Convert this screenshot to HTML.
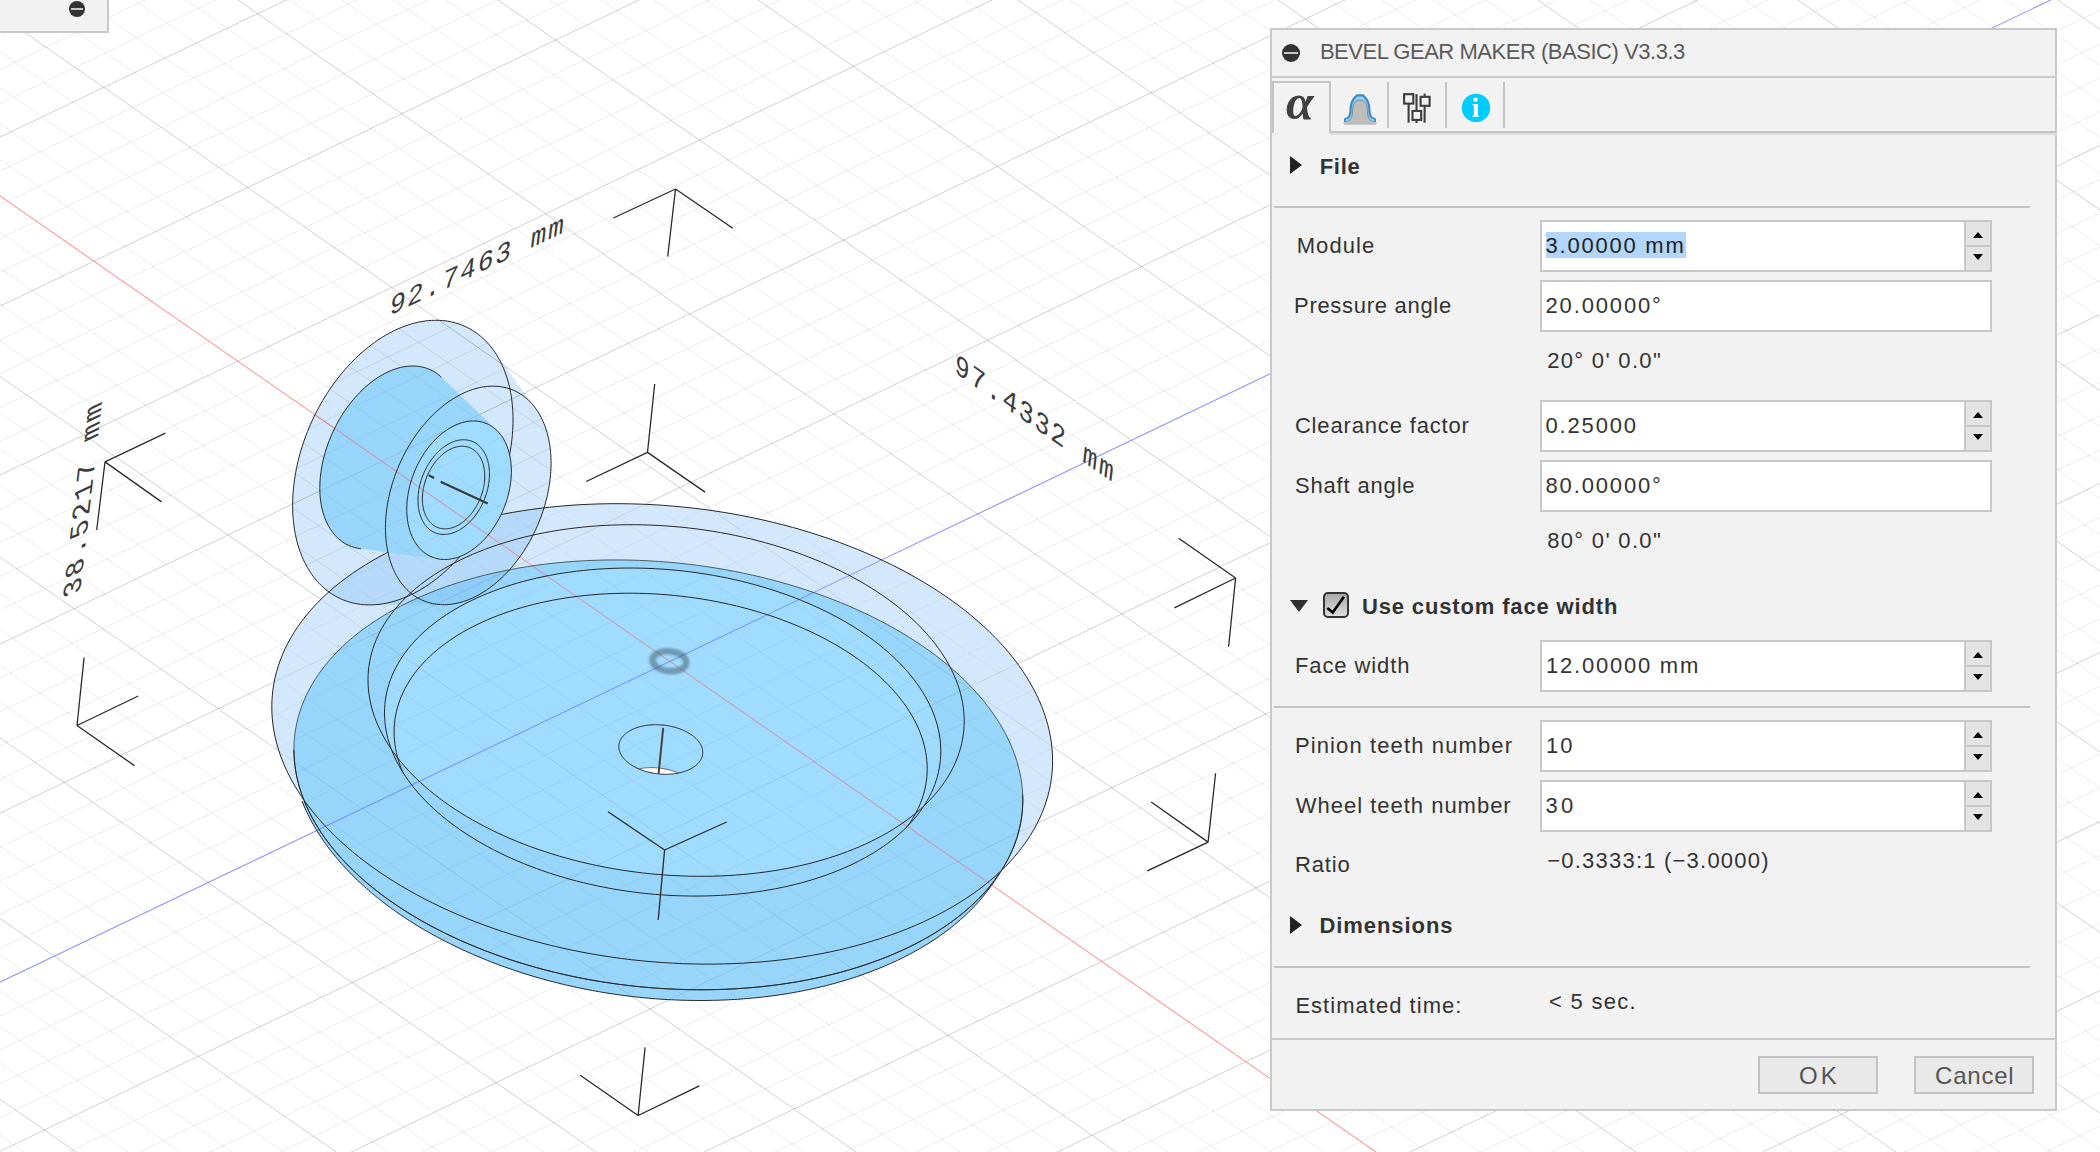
<!DOCTYPE html>
<html><head><meta charset="utf-8">
<style>
*{margin:0;padding:0;box-sizing:border-box}
html,body{width:2100px;height:1152px;overflow:hidden;background:#fff;font-family:"Liberation Sans",sans-serif;color:#333}
#vp{position:absolute;left:0;top:0;width:2100px;height:1152px}
#vp svg{position:absolute;left:0;top:0}
.a{position:absolute;white-space:nowrap}
#tl{position:absolute;left:-4px;top:-4px;width:113px;height:37px;background:#f2f2f2;border:2px solid #c9c9c9}
.mc{position:absolute;border-radius:50%;background:#333}
.mc:after{content:"";position:absolute;left:13%;right:13%;top:42%;height:15%;background:#c8c8c8}
#dlg{position:absolute;left:1270px;top:28px;width:787px;height:1083px;background:#f2f2f2;border:2px solid #c9c9c9}
.lbl{position:absolute;white-space:nowrap;line-height:1}
.bold{font-weight:bold}
.inp{position:absolute;left:1540px;width:452px;height:52px;background:#fff;border:2px solid #c8c8c8}
.spin{position:absolute;left:422px;top:0;width:26px;height:48px;background:#e4e4e4;border-left:2px solid #c8c8c8}
.spin:before{content:"";position:absolute;left:7px;top:10px;border-left:5px solid transparent;border-right:5px solid transparent;border-bottom:6px solid #000}
.spin:after{content:"";position:absolute;left:7px;top:32px;border-left:5px solid transparent;border-right:5px solid transparent;border-top:6px solid #000}
.spin i{position:absolute;left:0;right:0;top:23px;height:2px;background:#c8c8c8}
.sep{position:absolute;left:1274px;width:756px;height:2px;background:#c4c4c4}
.tri-r{position:absolute;width:0;height:0;border-top:9px solid transparent;border-bottom:9px solid transparent;border-left:12px solid #222}
.btn{position:absolute;top:1056px;width:120px;height:38px;background:#e9e9e9;border:2px solid #c2c2c2}

</style></head>
<body>
<div id="vp"><svg width="2100" height="1152" viewBox="0 0 2100 1152">
<defs>
<mask id="mE1"><rect width="2100" height="1152" fill="#fff"/><path d="M999.22 873.30 L998.18 875.07 L997.12 876.84 L996.02 878.60 L994.90 880.35 L993.76 882.09 L992.58 883.83 L991.39 885.56 L990.16 887.27 L988.92 888.98 L987.64 890.68 L986.34 892.38 L985.02 894.06 L983.67 895.73 L982.29 897.40 L980.90 899.05 L979.47 900.70 L978.02 902.33 L976.55 903.96 L975.05 905.57 L973.53 907.18 L971.98 908.78 L970.41 910.36 L968.81 911.94 L967.20 913.50 L965.55 915.05 L963.89 916.60 L962.20 918.13 L960.48 919.65 L958.75 921.16 L956.99 922.66 L955.21 924.15 L953.40 925.62 L951.57 927.09 L949.72 928.54 L947.85 929.98 L945.95 931.41 L944.03 932.82 L942.09 934.23 L940.13 935.62 L938.15 937.00 L936.14 938.37 L934.12 939.72 L932.07 941.07 L930.00 942.40 L927.91 943.71 L925.80 945.02 L923.67 946.31 L921.52 947.59 L919.35 948.85 L917.15 950.10 L914.94 951.34 L912.71 952.56 L910.46 953.77 L908.19 954.97 L905.90 956.15 L903.59 957.32 L901.26 958.48 L898.91 959.62 L896.55 960.75 L894.16 961.86 L891.76 962.96 L889.34 964.04 L886.90 965.11 L884.45 966.16 L881.97 967.20 L879.48 968.23 L876.98 969.24 L874.45 970.24 L871.91 971.22 L869.35 972.18 L866.78 973.13 L864.19 974.07 L861.58 974.99 L858.96 975.89 L856.32 976.78 L853.67 977.66 L851.00 978.51 L848.32 979.36 L845.62 980.18 L842.91 980.99 L840.18 981.79 L837.44 982.57 L834.69 983.33 L831.92 984.08 L829.14 984.81 L826.34 985.53 L823.53 986.23 L820.71 986.91 L817.88 987.58 L815.03 988.23 L812.18 988.86 L809.31 989.48 L806.42 990.08 L803.53 990.67 L800.63 991.23 L797.71 991.79 L794.78 992.32 L791.85 992.84 L788.90 993.34 L785.94 993.83 L782.97 994.29 L779.99 994.75 L777.01 995.18 L774.01 995.60 L771.00 996.00 L767.99 996.38 L764.97 996.75 L761.94 997.10 L758.90 997.43 L755.85 997.75 L752.79 998.05 L749.73 998.33 L746.66 998.59 L743.58 998.84 L740.50 999.07 L737.41 999.29 L734.31 999.48 L731.21 999.66 L728.10 999.82 L724.99 999.97 L721.87 1000.09 L718.75 1000.20 L715.62 1000.30 L712.48 1000.37 L709.34 1000.43 L706.20 1000.47 L703.06 1000.49 L699.91 1000.50 L696.75 1000.49 L693.60 1000.46 L690.44 1000.41 L687.27 1000.35 L684.11 1000.27 L680.94 1000.17 L677.77 1000.06 L674.60 999.93 L671.43 999.78 L668.26 999.61 L665.08 999.43 L661.91 999.23 L658.73 999.01 L655.56 998.77 L652.38 998.52 L649.21 998.25 L646.03 997.97 L642.86 997.66 L639.68 997.34 L636.51 997.00 L633.34 996.65 L630.17 996.28 L627.00 995.89 L623.84 995.48 L620.67 995.06 L617.51 994.62 L614.35 994.16 L611.20 993.69 L608.05 993.20 L604.90 992.69 L601.76 992.17 L598.62 991.63 L595.48 991.07 L592.35 990.50 L589.22 989.91 L586.10 989.31 L582.99 988.68 L579.87 988.04 L576.77 987.39 L573.67 986.72 L570.58 986.03 L567.49 985.33 L564.41 984.61 L561.34 983.87 L558.27 983.12 L555.21 982.35 L552.16 981.56 L549.12 980.77 L546.09 979.95 L543.06 979.12 L540.04 978.27 L537.03 977.41 L534.03 976.53 L531.04 975.64 L528.06 974.73 L525.09 973.80 L522.12 972.86 L519.17 971.91 L516.23 970.94 L513.30 969.95 L510.38 968.95 L507.47 967.94 L504.57 966.91 L501.68 965.87 L498.81 964.81 L495.95 963.73 L493.10 962.65 L490.26 961.54 L487.43 960.43 L484.62 959.30 L481.82 958.15 L479.03 956.99 L476.26 955.82 L473.50 954.63 L470.75 953.43 L468.02 952.22 L465.30 950.99 L462.59 949.75 L459.91 948.49 L457.23 947.22 L454.57 945.94 L451.93 944.65 L449.30 943.34 L446.69 942.02 L444.09 940.69 L441.51 939.34 L438.94 937.98 L436.40 936.61 L433.86 935.23 L431.35 933.83 L428.85 932.42 L426.37 931.00 L423.91 929.57 L421.46 928.13 L419.03 926.67 L416.62 925.20 L414.23 923.72 L411.86 922.23 L409.50 920.73 L407.17 919.22 L404.85 917.69 L402.55 916.16 L400.27 914.61 L398.01 913.06 L395.77 911.49 L393.55 909.91 L391.35 908.32 L389.17 906.72 L387.01 905.12 L384.87 903.50 L382.75 901.87 L380.65 900.23 L378.58 898.58 L376.52 896.92 L374.49 895.26 L372.47 893.58 L370.48 891.90 L368.51 890.20 L366.56 888.50 L364.63 886.79 L362.73 885.07 L360.84 883.34 L358.98 881.60 L357.15 879.85 L355.33 878.10 L353.54 876.34 L351.77 874.57 L350.02 872.79 L348.30 871.01 L346.60 869.21 L344.92 867.41 L343.27 865.61 L341.64 863.79 L340.04 861.97 L338.46 860.15 L336.90 858.31 L335.37 856.47 L333.86 854.63 L332.37 852.77 L330.92 850.91 L329.48 849.05 L328.07 847.18 L326.69 845.30 L325.33 843.42 L323.99 841.53 L322.68 839.64 L321.40 837.74 L320.14 835.84 L318.90 833.94 L317.70 832.02 L316.51 830.11 L315.36 828.19 L314.23 826.26 L313.12 824.34 L312.04 822.40 L310.99 820.47 L309.96 818.53 L308.96 816.59 L307.99 814.64 L307.04 812.69 L306.12 810.74 L305.23 808.78 L304.36 806.83 L303.52 804.87 L302.70 802.90 L301.92 800.94Z" fill="#000"/><path d="M1022.80 800.00 L1022.68 805.57 L1022.30 811.13 L1021.68 816.66 L1020.80 822.17 L1019.68 827.64 L1018.31 833.07 L1016.70 838.47 L1014.84 843.82 L1012.73 849.13 L1010.38 854.38 L1007.79 859.58 L1004.96 864.72 L1001.90 869.80 L998.59 874.81 L995.06 879.76 L991.29 884.63 L987.30 889.43 L983.08 894.15 L978.63 898.79 L973.97 903.35 L969.09 907.81 L964.00 912.19 L958.70 916.47 L953.20 920.65 L947.49 924.73 L941.58 928.71 L935.48 932.59 L929.19 936.36 L922.71 940.01 L916.06 943.55 L909.22 946.98 L902.21 950.29 L895.04 953.48 L887.71 956.55 L880.21 959.49 L872.57 962.31 L864.78 964.99 L856.84 967.55 L848.77 969.98 L840.58 972.27 L832.25 974.42 L823.81 976.44 L815.25 978.32 L806.59 980.06 L797.82 981.67 L788.96 983.12 L780.01 984.44 L770.97 985.61 L761.86 986.64 L752.68 987.52 L743.43 988.26 L734.12 988.85 L724.77 989.30 L715.36 989.60 L705.92 989.75 L696.45 989.75 L686.94 989.60 L677.42 989.31 L667.89 988.87 L658.35 988.29 L648.81 987.56 L639.28 986.68 L629.76 985.66 L620.25 984.49 L610.78 983.18 L601.34 981.73 L591.93 980.13 L582.58 978.40 L573.27 976.52 L564.02 974.51 L554.84 972.36 L545.73 970.07 L536.69 967.65 L527.74 965.10 L518.88 962.42 L510.11 959.61 L501.45 956.67 L492.89 953.61 L484.45 950.43 L476.13 947.12 L467.93 943.70 L459.86 940.16 L451.92 936.51 L444.13 932.75 L436.49 928.88 L428.99 924.90 L421.66 920.82 L414.49 916.64 L407.48 912.36 L400.64 907.99 L393.99 903.53 L387.51 898.98 L381.22 894.35 L375.12 889.63 L369.21 884.83 L363.50 879.96 L358.00 875.02 L352.70 870.01 L347.61 864.93 L342.73 859.79 L338.07 854.60 L333.62 849.35 L329.40 844.04 L325.41 838.69 L321.64 833.30 L318.11 827.87 L314.80 822.39 L311.74 816.89 L308.91 811.36 L306.32 805.80 L303.97 800.23 L301.86 794.63 L300.00 789.02 L298.39 783.40 L297.02 777.78 L295.90 772.15 L295.02 766.53 L294.40 760.91 L294.02 755.30 L293.90 749.70 L294.02 744.13 L294.40 738.57 L295.02 733.04 L295.90 727.53 L297.02 722.06 L298.39 716.63 L300.00 711.23 L301.86 705.88 L303.97 700.57 L306.32 695.32 L308.91 690.12 L311.74 684.98 L314.80 679.90 L318.11 674.89 L321.64 669.94 L325.41 665.07 L329.40 660.27 L333.62 655.55 L338.07 650.91 L342.73 646.35 L347.61 641.89 L352.70 637.51 L358.00 633.23 L363.50 629.05 L369.21 624.97 L375.12 620.99 L381.22 617.11 L387.51 613.34 L393.99 609.69 L400.64 606.15 L407.48 602.72 L414.49 599.41 L421.66 596.22 L428.99 593.15 L436.49 590.21 L444.13 587.39 L451.92 584.71 L459.86 582.15 L467.93 579.72 L476.12 577.43 L484.45 575.28 L492.89 573.26 L501.45 571.38 L510.11 569.64 L518.88 568.03 L527.74 566.58 L536.69 565.26 L545.73 564.09 L554.84 563.06 L564.02 562.18 L573.27 561.44 L582.58 560.85 L591.93 560.40 L601.34 560.10 L610.78 559.95 L620.25 559.95 L629.76 560.10 L639.28 560.39 L648.81 560.83 L658.35 561.41 L667.89 562.14 L677.42 563.02 L686.94 564.04 L696.45 565.21 L705.92 566.52 L715.36 567.97 L724.77 569.57 L734.12 571.30 L743.43 573.18 L752.68 575.19 L761.86 577.34 L770.97 579.63 L780.01 582.05 L788.96 584.60 L797.82 587.28 L806.59 590.09 L815.25 593.03 L823.81 596.09 L832.25 599.27 L840.57 602.58 L848.77 606.00 L856.84 609.54 L864.78 613.19 L872.57 616.95 L880.21 620.82 L887.71 624.80 L895.04 628.88 L902.21 633.06 L909.22 637.34 L916.06 641.71 L922.71 646.17 L929.19 650.72 L935.48 655.35 L941.58 660.07 L947.49 664.87 L953.20 669.74 L958.70 674.68 L964.00 679.69 L969.09 684.77 L973.97 689.91 L978.63 695.10 L983.08 700.35 L987.30 705.66 L991.29 711.01 L995.06 716.40 L998.59 721.83 L1001.90 727.31 L1004.96 732.81 L1007.79 738.34 L1010.38 743.90 L1012.73 749.47 L1014.84 755.07 L1016.70 760.68 L1018.31 766.30 L1019.68 771.92 L1020.80 777.55 L1021.68 783.17 L1022.30 788.79 L1022.68 794.40Z" fill="#000"/></mask>
<clipPath id="cE5"><path d="M940.80 751.24 L940.70 755.50 L940.42 759.74 L939.94 763.96 L939.28 768.16 L938.42 772.34 L937.38 776.49 L936.14 780.61 L934.72 784.69 L933.11 788.74 L931.32 792.75 L929.35 796.72 L927.19 800.64 L924.85 804.52 L922.33 808.34 L919.63 812.12 L916.75 815.84 L913.70 819.50 L910.48 823.10 L907.09 826.64 L903.53 830.12 L899.81 833.53 L895.93 836.87 L891.88 840.13 L887.68 843.32 L883.32 846.44 L878.81 849.48 L874.16 852.44 L869.36 855.31 L864.41 858.10 L859.33 860.81 L854.12 863.42 L848.77 865.95 L843.29 868.38 L837.70 870.72 L831.98 872.97 L826.14 875.12 L820.20 877.17 L814.14 879.12 L807.98 880.97 L801.73 882.72 L795.37 884.36 L788.93 885.91 L782.40 887.34 L775.78 888.67 L769.09 889.89 L762.33 891.01 L755.50 892.01 L748.60 892.91 L741.65 893.69 L734.64 894.36 L727.58 894.93 L720.48 895.38 L713.34 895.72 L706.16 895.94 L698.96 896.06 L691.72 896.06 L684.47 895.95 L677.21 895.73 L669.93 895.39 L662.65 894.95 L655.37 894.39 L648.09 893.72 L640.83 892.94 L633.58 892.05 L626.34 891.05 L619.14 889.94 L611.96 888.72 L604.82 887.40 L597.72 885.97 L590.66 884.43 L583.65 882.79 L576.70 881.05 L569.80 879.20 L562.97 877.25 L556.21 875.20 L549.52 873.06 L542.90 870.82 L536.37 868.48 L529.93 866.05 L523.58 863.53 L517.32 860.92 L511.16 858.22 L505.10 855.43 L499.16 852.56 L493.32 849.60 L487.60 846.57 L482.01 843.46 L476.53 840.27 L471.18 837.00 L465.97 833.67 L460.89 830.26 L455.94 826.79 L451.14 823.25 L446.49 819.65 L441.98 815.99 L437.62 812.27 L433.42 808.50 L429.37 804.68 L425.49 800.80 L421.77 796.88 L418.21 792.91 L414.82 788.91 L411.60 784.86 L408.55 780.77 L405.67 776.66 L402.97 772.51 L400.45 768.34 L398.11 764.14 L395.95 759.92 L393.98 755.67 L392.19 751.42 L390.58 747.15 L389.16 742.87 L387.92 738.58 L386.88 734.29 L386.02 729.99 L385.36 725.70 L384.88 721.41 L384.60 717.13 L384.50 712.86 L384.60 708.60 L384.88 704.36 L385.36 700.14 L386.02 695.94 L386.88 691.76 L387.92 687.61 L389.16 683.49 L390.58 679.41 L392.19 675.36 L393.98 671.35 L395.95 667.38 L398.11 663.46 L400.45 659.58 L402.97 655.76 L405.67 651.98 L408.55 648.26 L411.60 644.60 L414.82 641.00 L418.21 637.46 L421.77 633.98 L425.49 630.57 L429.37 627.23 L433.42 623.97 L437.62 620.78 L441.98 617.66 L446.49 614.62 L451.14 611.66 L455.94 608.79 L460.89 606.00 L465.97 603.29 L471.18 600.68 L476.53 598.15 L482.01 595.72 L487.60 593.38 L493.32 591.13 L499.16 588.98 L505.10 586.93 L511.16 584.98 L517.32 583.13 L523.57 581.38 L529.93 579.74 L536.37 578.19 L542.90 576.76 L549.52 575.43 L556.21 574.21 L562.97 573.09 L569.80 572.09 L576.70 571.19 L583.65 570.41 L590.66 569.74 L597.72 569.17 L604.82 568.72 L611.96 568.38 L619.14 568.16 L626.34 568.04 L633.58 568.04 L640.83 568.15 L648.09 568.37 L655.37 568.71 L662.65 569.15 L669.93 569.71 L677.21 570.38 L684.47 571.16 L691.72 572.05 L698.96 573.05 L706.16 574.16 L713.34 575.38 L720.48 576.70 L727.58 578.13 L734.64 579.67 L741.65 581.31 L748.60 583.05 L755.50 584.90 L762.33 586.85 L769.09 588.90 L775.78 591.04 L782.40 593.28 L788.93 595.62 L795.37 598.05 L801.72 600.57 L807.98 603.18 L814.14 605.88 L820.20 608.67 L826.14 611.54 L831.98 614.50 L837.70 617.53 L843.29 620.64 L848.77 623.83 L854.12 627.10 L859.33 630.43 L864.41 633.84 L869.36 637.31 L874.16 640.85 L878.81 644.45 L883.32 648.11 L887.68 651.83 L891.88 655.60 L895.93 659.42 L899.81 663.30 L903.53 667.22 L907.09 671.19 L910.48 675.19 L913.70 679.24 L916.75 683.33 L919.63 687.44 L922.33 691.59 L924.85 695.76 L927.19 699.96 L929.35 704.18 L931.32 708.43 L933.11 712.68 L934.72 716.95 L936.14 721.23 L937.38 725.52 L938.42 729.81 L939.28 734.11 L939.94 738.40 L940.42 742.69 L940.70 746.97Z"/></clipPath>
<clipPath id="cE4"><path d="M964.20 721.07 L964.10 725.63 L963.79 730.18 L963.28 734.70 L962.57 739.20 L961.65 743.68 L960.53 748.12 L959.21 752.54 L957.69 756.92 L955.96 761.25 L954.04 765.55 L951.92 769.80 L949.61 774.01 L947.10 778.16 L944.40 782.27 L941.51 786.31 L938.43 790.30 L935.16 794.22 L931.71 798.08 L928.08 801.88 L924.26 805.60 L920.27 809.26 L916.11 812.83 L911.77 816.33 L907.27 819.76 L902.60 823.10 L897.77 826.35 L892.78 829.52 L887.63 832.60 L882.33 835.59 L876.89 838.49 L871.30 841.29 L865.57 844.00 L859.70 846.61 L853.70 849.12 L847.57 851.53 L841.32 853.83 L834.95 856.03 L828.46 858.12 L821.86 860.10 L815.15 861.98 L808.34 863.74 L801.43 865.39 L794.44 866.93 L787.35 868.35 L780.18 869.66 L772.93 870.86 L765.61 871.93 L758.22 872.89 L750.76 873.73 L743.25 874.46 L735.69 875.06 L728.08 875.54 L720.42 875.91 L712.73 876.15 L705.01 876.27 L697.26 876.28 L689.49 876.16 L681.70 875.92 L673.90 875.56 L666.10 875.08 L658.30 874.48 L650.50 873.77 L642.71 872.93 L634.94 871.98 L627.19 870.90 L619.47 869.72 L611.78 868.41 L604.12 866.99 L596.51 865.46 L588.95 863.81 L581.44 862.05 L573.98 860.18 L566.59 858.20 L559.27 856.12 L552.02 853.92 L544.85 851.62 L537.76 849.22 L530.77 846.72 L523.86 844.11 L517.05 841.41 L510.34 838.61 L503.74 835.71 L497.25 832.73 L490.88 829.65 L484.63 826.48 L478.50 823.23 L472.50 819.90 L466.63 816.48 L460.90 812.98 L455.31 809.40 L449.87 805.76 L444.57 802.03 L439.42 798.24 L434.43 794.38 L429.60 790.46 L424.93 786.48 L420.43 782.43 L416.09 778.33 L411.93 774.18 L407.94 769.98 L404.12 765.73 L400.49 761.43 L397.04 757.10 L393.77 752.72 L390.69 748.31 L387.80 743.86 L385.10 739.39 L382.59 734.89 L380.28 730.36 L378.16 725.82 L376.24 721.26 L374.51 716.68 L372.99 712.09 L371.67 707.50 L370.55 702.90 L369.63 698.29 L368.92 693.69 L368.41 689.10 L368.10 684.51 L368.00 679.93 L368.10 675.37 L368.41 670.82 L368.92 666.30 L369.63 661.80 L370.55 657.32 L371.67 652.88 L372.99 648.46 L374.51 644.08 L376.24 639.75 L378.16 635.45 L380.28 631.20 L382.59 626.99 L385.10 622.84 L387.80 618.73 L390.69 614.69 L393.77 610.70 L397.04 606.78 L400.49 602.92 L404.12 599.12 L407.94 595.40 L411.93 591.74 L416.09 588.17 L420.43 584.67 L424.93 581.24 L429.60 577.90 L434.43 574.65 L439.42 571.48 L444.57 568.40 L449.87 565.41 L455.31 562.51 L460.90 559.71 L466.63 557.00 L472.50 554.39 L478.50 551.88 L484.63 549.47 L490.88 547.17 L497.25 544.97 L503.74 542.88 L510.34 540.90 L517.05 539.02 L523.86 537.26 L530.77 535.61 L537.76 534.07 L544.85 532.65 L552.02 531.34 L559.27 530.14 L566.59 529.07 L573.98 528.11 L581.44 527.27 L588.95 526.54 L596.51 525.94 L604.12 525.46 L611.78 525.09 L619.47 524.85 L627.19 524.73 L634.94 524.72 L642.71 524.84 L650.50 525.08 L658.30 525.44 L666.10 525.92 L673.90 526.52 L681.70 527.23 L689.49 528.07 L697.26 529.02 L705.01 530.10 L712.73 531.28 L720.42 532.59 L728.08 534.01 L735.69 535.54 L743.25 537.19 L750.76 538.95 L758.22 540.82 L765.61 542.80 L772.93 544.88 L780.18 547.08 L787.35 549.38 L794.44 551.78 L801.43 554.28 L808.34 556.89 L815.15 559.59 L821.86 562.39 L828.46 565.29 L834.95 568.27 L841.32 571.35 L847.57 574.52 L853.70 577.77 L859.70 581.10 L865.57 584.52 L871.30 588.02 L876.89 591.60 L882.33 595.24 L887.63 598.97 L892.78 602.76 L897.77 606.62 L902.60 610.54 L907.27 614.52 L911.77 618.57 L916.11 622.67 L920.27 626.82 L924.26 631.02 L928.08 635.27 L931.71 639.57 L935.16 643.90 L938.43 648.28 L941.51 652.69 L944.40 657.14 L947.10 661.61 L949.61 666.11 L951.92 670.64 L954.04 675.18 L955.96 679.74 L957.69 684.32 L959.21 688.91 L960.53 693.50 L961.65 698.10 L962.57 702.71 L963.28 707.31 L963.79 711.90 L964.10 716.49Z"/></clipPath>
<clipPath id="cBore"><path d="M702.80 752.40 L702.79 753.04 L702.74 753.68 L702.67 754.32 L702.57 754.95 L702.44 755.58 L702.28 756.21 L702.10 756.83 L701.88 757.45 L701.64 758.06 L701.37 758.67 L701.07 759.26 L700.74 759.86 L700.39 760.44 L700.01 761.02 L699.60 761.59 L699.17 762.15 L698.71 762.70 L698.22 763.25 L697.71 763.78 L697.17 764.31 L696.61 764.82 L696.02 765.33 L695.41 765.82 L694.78 766.30 L694.12 766.77 L693.44 767.23 L692.74 767.68 L692.01 768.11 L691.27 768.53 L690.50 768.94 L689.71 769.34 L688.90 769.72 L688.08 770.09 L687.23 770.44 L686.37 770.78 L685.49 771.10 L684.59 771.41 L683.67 771.71 L682.74 771.99 L681.80 772.25 L680.84 772.50 L679.87 772.73 L678.88 772.95 L677.88 773.15 L676.87 773.33 L675.85 773.50 L674.82 773.65 L673.78 773.79 L672.73 773.91 L671.67 774.01 L670.60 774.09 L669.53 774.16 L668.45 774.21 L667.37 774.25 L666.28 774.27 L665.19 774.27 L664.10 774.25 L663.00 774.22 L661.90 774.16 L660.80 774.10 L659.70 774.01 L658.60 773.91 L657.50 773.79 L656.41 773.66 L655.32 773.51 L654.23 773.34 L653.15 773.16 L652.07 772.96 L651.00 772.74 L649.93 772.51 L648.87 772.26 L647.82 772.00 L646.78 771.72 L645.75 771.43 L644.73 771.12 L643.72 770.79 L642.72 770.45 L641.73 770.10 L640.76 769.73 L639.80 769.35 L638.86 768.96 L637.93 768.55 L637.01 768.13 L636.11 767.70 L635.23 767.25 L634.37 766.79 L633.52 766.32 L632.70 765.84 L631.89 765.35 L631.10 764.84 L630.33 764.33 L629.59 763.81 L628.86 763.27 L628.16 762.73 L627.48 762.17 L626.82 761.61 L626.19 761.04 L625.58 760.47 L624.99 759.88 L624.43 759.29 L623.89 758.69 L623.38 758.08 L622.89 757.47 L622.43 756.86 L622.00 756.24 L621.59 755.61 L621.21 754.98 L620.86 754.35 L620.53 753.71 L620.23 753.07 L619.96 752.42 L619.72 751.78 L619.50 751.13 L619.32 750.49 L619.16 749.84 L619.03 749.19 L618.93 748.54 L618.86 747.89 L618.81 747.25 L618.80 746.60 L618.81 745.96 L618.86 745.32 L618.93 744.68 L619.03 744.05 L619.16 743.42 L619.32 742.79 L619.50 742.17 L619.72 741.55 L619.96 740.94 L620.23 740.33 L620.53 739.74 L620.86 739.14 L621.21 738.56 L621.59 737.98 L622.00 737.41 L622.43 736.85 L622.89 736.30 L623.38 735.75 L623.89 735.22 L624.43 734.69 L624.99 734.18 L625.58 733.67 L626.19 733.18 L626.82 732.70 L627.48 732.23 L628.16 731.77 L628.86 731.32 L629.59 730.89 L630.33 730.47 L631.10 730.06 L631.89 729.66 L632.70 729.28 L633.52 728.91 L634.37 728.56 L635.23 728.22 L636.11 727.90 L637.01 727.59 L637.93 727.29 L638.86 727.01 L639.80 726.75 L640.76 726.50 L641.73 726.27 L642.72 726.05 L643.72 725.85 L644.73 725.67 L645.75 725.50 L646.78 725.35 L647.82 725.21 L648.87 725.09 L649.93 724.99 L651.00 724.91 L652.07 724.84 L653.15 724.79 L654.23 724.75 L655.32 724.73 L656.41 724.73 L657.50 724.75 L658.60 724.78 L659.70 724.84 L660.80 724.90 L661.90 724.99 L663.00 725.09 L664.10 725.21 L665.19 725.34 L666.28 725.49 L667.37 725.66 L668.45 725.84 L669.53 726.04 L670.60 726.26 L671.67 726.49 L672.73 726.74 L673.78 727.00 L674.82 727.28 L675.85 727.57 L676.87 727.88 L677.88 728.21 L678.88 728.55 L679.87 728.90 L680.84 729.27 L681.80 729.65 L682.74 730.04 L683.67 730.45 L684.59 730.87 L685.49 731.30 L686.37 731.75 L687.23 732.21 L688.08 732.68 L688.90 733.16 L689.71 733.65 L690.50 734.16 L691.27 734.67 L692.01 735.19 L692.74 735.73 L693.44 736.27 L694.12 736.83 L694.78 737.39 L695.41 737.96 L696.02 738.53 L696.61 739.12 L697.17 739.71 L697.71 740.31 L698.22 740.92 L698.71 741.53 L699.17 742.14 L699.60 742.76 L700.01 743.39 L700.39 744.02 L700.74 744.65 L701.07 745.29 L701.37 745.93 L701.64 746.58 L701.88 747.22 L702.10 747.87 L702.28 748.51 L702.44 749.16 L702.57 749.81 L702.67 750.46 L702.74 751.11 L702.79 751.75Z"/></clipPath>
<clipPath id="cGear"><path d="M1052.60 760.84 L1052.47 766.81 L1052.06 772.76 L1051.40 778.69 L1050.46 784.59 L1049.26 790.45 L1047.79 796.27 L1046.06 802.05 L1044.07 807.78 L1041.81 813.47 L1039.30 819.09 L1036.52 824.66 L1033.49 830.17 L1030.21 835.61 L1026.67 840.98 L1022.88 846.28 L1018.85 851.50 L1014.57 856.64 L1010.05 861.70 L1005.29 866.67 L1000.30 871.55 L995.07 876.33 L989.62 881.01 L983.94 885.60 L978.04 890.08 L971.93 894.45 L965.60 898.72 L959.06 902.87 L952.32 906.91 L945.39 910.82 L938.25 914.62 L930.93 918.29 L923.43 921.83 L915.74 925.25 L907.89 928.54 L899.86 931.69 L891.67 934.70 L883.32 937.58 L874.83 940.32 L866.18 942.92 L857.40 945.37 L848.48 947.68 L839.44 949.85 L830.27 951.86 L820.99 953.73 L811.60 955.44 L802.11 957.00 L792.52 958.41 L782.84 959.67 L773.08 960.77 L763.24 961.72 L753.34 962.51 L743.37 963.14 L733.34 963.62 L723.27 963.94 L713.16 964.10 L703.01 964.10 L692.83 963.95 L682.63 963.63 L672.42 963.16 L662.20 962.54 L651.98 961.75 L641.77 960.81 L631.57 959.72 L621.39 958.47 L611.24 957.07 L601.13 955.51 L591.06 953.80 L581.03 951.94 L571.06 949.93 L561.16 947.78 L551.32 945.47 L541.56 943.02 L531.88 940.43 L522.29 937.70 L512.80 934.83 L503.41 931.81 L494.13 928.67 L484.96 925.39 L475.92 921.98 L467.00 918.44 L458.22 914.77 L449.57 910.98 L441.08 907.07 L432.73 903.04 L424.54 898.89 L416.51 894.63 L408.66 890.26 L400.97 885.79 L393.47 881.21 L386.15 876.52 L379.01 871.75 L372.08 866.87 L365.34 861.91 L358.80 856.85 L352.47 851.72 L346.36 846.50 L340.46 841.20 L334.78 835.83 L329.33 830.40 L324.10 824.89 L319.11 819.32 L314.35 813.70 L309.83 808.02 L305.55 802.29 L301.52 796.51 L297.73 790.69 L294.19 784.83 L290.91 778.94 L287.88 773.01 L285.10 767.06 L282.59 761.08 L280.33 755.09 L278.34 749.08 L276.61 743.06 L275.14 737.04 L273.94 731.01 L273.00 724.99 L272.34 718.97 L271.93 712.96 L271.80 706.96 L271.93 700.99 L272.34 695.04 L273.00 689.11 L273.94 683.21 L275.14 677.35 L276.61 671.53 L278.34 665.75 L280.33 660.02 L282.59 654.33 L285.10 648.71 L287.88 643.14 L290.91 637.63 L294.19 632.19 L297.73 626.82 L301.52 621.52 L305.55 616.30 L309.83 611.16 L314.35 606.10 L319.11 601.13 L324.10 596.25 L329.33 591.47 L334.78 586.79 L340.46 582.20 L346.36 577.72 L352.47 573.35 L358.80 569.08 L365.34 564.93 L372.08 560.89 L379.01 556.98 L386.15 553.18 L393.47 549.51 L400.97 545.97 L408.66 542.55 L416.51 539.26 L424.54 536.11 L432.73 533.10 L441.08 530.22 L449.57 527.48 L458.22 524.88 L467.00 522.43 L475.92 520.12 L484.96 517.95 L494.13 515.94 L503.41 514.07 L512.80 512.36 L522.29 510.80 L531.88 509.39 L541.56 508.13 L551.32 507.03 L561.16 506.08 L571.06 505.29 L581.03 504.66 L591.06 504.18 L601.13 503.86 L611.24 503.70 L621.39 503.70 L631.57 503.85 L641.77 504.17 L651.98 504.64 L662.20 505.26 L672.42 506.05 L682.63 506.99 L692.83 508.08 L703.01 509.33 L713.16 510.73 L723.27 512.29 L733.34 514.00 L743.37 515.86 L753.34 517.87 L763.24 520.02 L773.08 522.33 L782.84 524.78 L792.52 527.37 L802.11 530.10 L811.60 532.97 L820.99 535.99 L830.27 539.13 L839.44 542.41 L848.48 545.82 L857.40 549.36 L866.18 553.03 L874.83 556.82 L883.32 560.73 L891.67 564.76 L899.86 568.91 L907.89 573.17 L915.74 577.54 L923.43 582.01 L930.93 586.59 L938.25 591.28 L945.39 596.05 L952.32 600.93 L959.06 605.89 L965.60 610.95 L971.93 616.08 L978.04 621.30 L983.94 626.60 L989.62 631.97 L995.07 637.40 L1000.30 642.91 L1005.29 648.48 L1010.05 654.10 L1014.57 659.78 L1018.85 665.51 L1022.88 671.29 L1026.67 677.11 L1030.21 682.97 L1033.49 688.86 L1036.52 694.79 L1039.30 700.74 L1041.81 706.72 L1044.07 712.71 L1046.06 718.72 L1047.79 724.74 L1049.26 730.76 L1050.46 736.79 L1051.40 742.81 L1052.06 748.83 L1052.47 754.84Z"/><path d="M999.22 873.30 L998.18 875.07 L997.12 876.84 L996.02 878.60 L994.90 880.35 L993.76 882.09 L992.58 883.83 L991.39 885.56 L990.16 887.27 L988.92 888.98 L987.64 890.68 L986.34 892.38 L985.02 894.06 L983.67 895.73 L982.29 897.40 L980.90 899.05 L979.47 900.70 L978.02 902.33 L976.55 903.96 L975.05 905.57 L973.53 907.18 L971.98 908.78 L970.41 910.36 L968.81 911.94 L967.20 913.50 L965.55 915.05 L963.89 916.60 L962.20 918.13 L960.48 919.65 L958.75 921.16 L956.99 922.66 L955.21 924.15 L953.40 925.62 L951.57 927.09 L949.72 928.54 L947.85 929.98 L945.95 931.41 L944.03 932.82 L942.09 934.23 L940.13 935.62 L938.15 937.00 L936.14 938.37 L934.12 939.72 L932.07 941.07 L930.00 942.40 L927.91 943.71 L925.80 945.02 L923.67 946.31 L921.52 947.59 L919.35 948.85 L917.15 950.10 L914.94 951.34 L912.71 952.56 L910.46 953.77 L908.19 954.97 L905.90 956.15 L903.59 957.32 L901.26 958.48 L898.91 959.62 L896.55 960.75 L894.16 961.86 L891.76 962.96 L889.34 964.04 L886.90 965.11 L884.45 966.16 L881.97 967.20 L879.48 968.23 L876.98 969.24 L874.45 970.24 L871.91 971.22 L869.35 972.18 L866.78 973.13 L864.19 974.07 L861.58 974.99 L858.96 975.89 L856.32 976.78 L853.67 977.66 L851.00 978.51 L848.32 979.36 L845.62 980.18 L842.91 980.99 L840.18 981.79 L837.44 982.57 L834.69 983.33 L831.92 984.08 L829.14 984.81 L826.34 985.53 L823.53 986.23 L820.71 986.91 L817.88 987.58 L815.03 988.23 L812.18 988.86 L809.31 989.48 L806.42 990.08 L803.53 990.67 L800.63 991.23 L797.71 991.79 L794.78 992.32 L791.85 992.84 L788.90 993.34 L785.94 993.83 L782.97 994.29 L779.99 994.75 L777.01 995.18 L774.01 995.60 L771.00 996.00 L767.99 996.38 L764.97 996.75 L761.94 997.10 L758.90 997.43 L755.85 997.75 L752.79 998.05 L749.73 998.33 L746.66 998.59 L743.58 998.84 L740.50 999.07 L737.41 999.29 L734.31 999.48 L731.21 999.66 L728.10 999.82 L724.99 999.97 L721.87 1000.09 L718.75 1000.20 L715.62 1000.30 L712.48 1000.37 L709.34 1000.43 L706.20 1000.47 L703.06 1000.49 L699.91 1000.50 L696.75 1000.49 L693.60 1000.46 L690.44 1000.41 L687.27 1000.35 L684.11 1000.27 L680.94 1000.17 L677.77 1000.06 L674.60 999.93 L671.43 999.78 L668.26 999.61 L665.08 999.43 L661.91 999.23 L658.73 999.01 L655.56 998.77 L652.38 998.52 L649.21 998.25 L646.03 997.97 L642.86 997.66 L639.68 997.34 L636.51 997.00 L633.34 996.65 L630.17 996.28 L627.00 995.89 L623.84 995.48 L620.67 995.06 L617.51 994.62 L614.35 994.16 L611.20 993.69 L608.05 993.20 L604.90 992.69 L601.76 992.17 L598.62 991.63 L595.48 991.07 L592.35 990.50 L589.22 989.91 L586.10 989.31 L582.99 988.68 L579.87 988.04 L576.77 987.39 L573.67 986.72 L570.58 986.03 L567.49 985.33 L564.41 984.61 L561.34 983.87 L558.27 983.12 L555.21 982.35 L552.16 981.56 L549.12 980.77 L546.09 979.95 L543.06 979.12 L540.04 978.27 L537.03 977.41 L534.03 976.53 L531.04 975.64 L528.06 974.73 L525.09 973.80 L522.12 972.86 L519.17 971.91 L516.23 970.94 L513.30 969.95 L510.38 968.95 L507.47 967.94 L504.57 966.91 L501.68 965.87 L498.81 964.81 L495.95 963.73 L493.10 962.65 L490.26 961.54 L487.43 960.43 L484.62 959.30 L481.82 958.15 L479.03 956.99 L476.26 955.82 L473.50 954.63 L470.75 953.43 L468.02 952.22 L465.30 950.99 L462.59 949.75 L459.91 948.49 L457.23 947.22 L454.57 945.94 L451.93 944.65 L449.30 943.34 L446.69 942.02 L444.09 940.69 L441.51 939.34 L438.94 937.98 L436.40 936.61 L433.86 935.23 L431.35 933.83 L428.85 932.42 L426.37 931.00 L423.91 929.57 L421.46 928.13 L419.03 926.67 L416.62 925.20 L414.23 923.72 L411.86 922.23 L409.50 920.73 L407.17 919.22 L404.85 917.69 L402.55 916.16 L400.27 914.61 L398.01 913.06 L395.77 911.49 L393.55 909.91 L391.35 908.32 L389.17 906.72 L387.01 905.12 L384.87 903.50 L382.75 901.87 L380.65 900.23 L378.58 898.58 L376.52 896.92 L374.49 895.26 L372.47 893.58 L370.48 891.90 L368.51 890.20 L366.56 888.50 L364.63 886.79 L362.73 885.07 L360.84 883.34 L358.98 881.60 L357.15 879.85 L355.33 878.10 L353.54 876.34 L351.77 874.57 L350.02 872.79 L348.30 871.01 L346.60 869.21 L344.92 867.41 L343.27 865.61 L341.64 863.79 L340.04 861.97 L338.46 860.15 L336.90 858.31 L335.37 856.47 L333.86 854.63 L332.37 852.77 L330.92 850.91 L329.48 849.05 L328.07 847.18 L326.69 845.30 L325.33 843.42 L323.99 841.53 L322.68 839.64 L321.40 837.74 L320.14 835.84 L318.90 833.94 L317.70 832.02 L316.51 830.11 L315.36 828.19 L314.23 826.26 L313.12 824.34 L312.04 822.40 L310.99 820.47 L309.96 818.53 L308.96 816.59 L307.99 814.64 L307.04 812.69 L306.12 810.74 L305.23 808.78 L304.36 806.83 L303.52 804.87 L302.70 802.90 L301.92 800.94Z"/><path d="M1022.80 800.00 L1022.68 805.57 L1022.30 811.13 L1021.68 816.66 L1020.80 822.17 L1019.68 827.64 L1018.31 833.07 L1016.70 838.47 L1014.84 843.82 L1012.73 849.13 L1010.38 854.38 L1007.79 859.58 L1004.96 864.72 L1001.90 869.80 L998.59 874.81 L995.06 879.76 L991.29 884.63 L987.30 889.43 L983.08 894.15 L978.63 898.79 L973.97 903.35 L969.09 907.81 L964.00 912.19 L958.70 916.47 L953.20 920.65 L947.49 924.73 L941.58 928.71 L935.48 932.59 L929.19 936.36 L922.71 940.01 L916.06 943.55 L909.22 946.98 L902.21 950.29 L895.04 953.48 L887.71 956.55 L880.21 959.49 L872.57 962.31 L864.78 964.99 L856.84 967.55 L848.77 969.98 L840.58 972.27 L832.25 974.42 L823.81 976.44 L815.25 978.32 L806.59 980.06 L797.82 981.67 L788.96 983.12 L780.01 984.44 L770.97 985.61 L761.86 986.64 L752.68 987.52 L743.43 988.26 L734.12 988.85 L724.77 989.30 L715.36 989.60 L705.92 989.75 L696.45 989.75 L686.94 989.60 L677.42 989.31 L667.89 988.87 L658.35 988.29 L648.81 987.56 L639.28 986.68 L629.76 985.66 L620.25 984.49 L610.78 983.18 L601.34 981.73 L591.93 980.13 L582.58 978.40 L573.27 976.52 L564.02 974.51 L554.84 972.36 L545.73 970.07 L536.69 967.65 L527.74 965.10 L518.88 962.42 L510.11 959.61 L501.45 956.67 L492.89 953.61 L484.45 950.43 L476.13 947.12 L467.93 943.70 L459.86 940.16 L451.92 936.51 L444.13 932.75 L436.49 928.88 L428.99 924.90 L421.66 920.82 L414.49 916.64 L407.48 912.36 L400.64 907.99 L393.99 903.53 L387.51 898.98 L381.22 894.35 L375.12 889.63 L369.21 884.83 L363.50 879.96 L358.00 875.02 L352.70 870.01 L347.61 864.93 L342.73 859.79 L338.07 854.60 L333.62 849.35 L329.40 844.04 L325.41 838.69 L321.64 833.30 L318.11 827.87 L314.80 822.39 L311.74 816.89 L308.91 811.36 L306.32 805.80 L303.97 800.23 L301.86 794.63 L300.00 789.02 L298.39 783.40 L297.02 777.78 L295.90 772.15 L295.02 766.53 L294.40 760.91 L294.02 755.30 L293.90 749.70 L294.02 744.13 L294.40 738.57 L295.02 733.04 L295.90 727.53 L297.02 722.06 L298.39 716.63 L300.00 711.23 L301.86 705.88 L303.97 700.57 L306.32 695.32 L308.91 690.12 L311.74 684.98 L314.80 679.90 L318.11 674.89 L321.64 669.94 L325.41 665.07 L329.40 660.27 L333.62 655.55 L338.07 650.91 L342.73 646.35 L347.61 641.89 L352.70 637.51 L358.00 633.23 L363.50 629.05 L369.21 624.97 L375.12 620.99 L381.22 617.11 L387.51 613.34 L393.99 609.69 L400.64 606.15 L407.48 602.72 L414.49 599.41 L421.66 596.22 L428.99 593.15 L436.49 590.21 L444.13 587.39 L451.92 584.71 L459.86 582.15 L467.93 579.72 L476.12 577.43 L484.45 575.28 L492.89 573.26 L501.45 571.38 L510.11 569.64 L518.88 568.03 L527.74 566.58 L536.69 565.26 L545.73 564.09 L554.84 563.06 L564.02 562.18 L573.27 561.44 L582.58 560.85 L591.93 560.40 L601.34 560.10 L610.78 559.95 L620.25 559.95 L629.76 560.10 L639.28 560.39 L648.81 560.83 L658.35 561.41 L667.89 562.14 L677.42 563.02 L686.94 564.04 L696.45 565.21 L705.92 566.52 L715.36 567.97 L724.77 569.57 L734.12 571.30 L743.43 573.18 L752.68 575.19 L761.86 577.34 L770.97 579.63 L780.01 582.05 L788.96 584.60 L797.82 587.28 L806.59 590.09 L815.25 593.03 L823.81 596.09 L832.25 599.27 L840.57 602.58 L848.77 606.00 L856.84 609.54 L864.78 613.19 L872.57 616.95 L880.21 620.82 L887.71 624.80 L895.04 628.88 L902.21 633.06 L909.22 637.34 L916.06 641.71 L922.71 646.17 L929.19 650.72 L935.48 655.35 L941.58 660.07 L947.49 664.87 L953.20 669.74 L958.70 674.68 L964.00 679.69 L969.09 684.77 L973.97 689.91 L978.63 695.10 L983.08 700.35 L987.30 705.66 L991.29 711.01 L995.06 716.40 L998.59 721.83 L1001.90 727.31 L1004.96 732.81 L1007.79 738.34 L1010.38 743.90 L1012.73 749.47 L1014.84 755.07 L1016.70 760.68 L1018.31 766.30 L1019.68 771.92 L1020.80 777.55 L1021.68 783.17 L1022.30 788.79 L1022.68 794.40Z"/><path d="M292.63 505.30 L292.67 501.73 L292.79 498.14 L292.98 494.52 L293.24 490.88 L293.58 487.22 L294.00 483.54 L294.49 479.85 L295.05 476.15 L295.69 472.43 L296.40 468.71 L297.19 464.99 L298.05 461.26 L298.98 457.54 L299.98 453.82 L301.05 450.10 L302.19 446.40 L303.40 442.70 L304.67 439.02 L306.02 435.35 L307.43 431.71 L308.91 428.08 L310.45 424.48 L312.05 420.90 L313.72 417.36 L315.44 413.84 L317.23 410.36 L319.08 406.91 L320.98 403.50 L322.94 400.13 L324.95 396.80 L327.02 393.52 L329.14 390.29 L331.31 387.11 L333.53 383.97 L335.80 380.90 L338.11 377.87 L340.47 374.91 L342.87 372.01 L345.31 369.16 L347.79 366.38 L350.30 363.67 L352.86 361.03 L355.45 358.45 L358.07 355.95 L360.72 353.52 L363.40 351.16 L366.11 348.89 L368.84 346.68 L371.59 344.56 L374.37 342.52 L377.17 340.56 L379.98 338.69 L382.81 336.90 L385.65 335.19 L388.51 333.58 L391.37 332.05 L394.25 330.61 L397.13 329.26 L400.01 328.00 L402.89 326.84 L405.78 325.77 L408.66 324.79 L411.54 323.91 L414.41 323.12 L417.28 322.42 L420.13 321.83 L422.97 321.33 L425.80 320.92 L428.62 320.62 L431.41 320.41 L434.19 320.30 L436.94 320.28 L439.67 320.36 L442.38 320.54 L445.06 320.82 L447.71 321.20 L450.33 321.67 L452.91 322.24 L455.47 322.90 L457.98 323.66 L460.46 324.52 L462.90 325.47 L465.30 326.51 L467.65 327.65 L469.96 328.88 L472.23 330.20 L474.44 331.62 L476.61 333.12 L478.73 334.71 L480.80 336.39 L482.81 338.15 L484.76 340.00 L486.67 341.94 L488.51 343.95 L490.29 346.05 L492.02 348.23 L493.68 350.49 L535.34 407.97 L536.59 409.72 L537.79 411.52 L538.94 413.39 L540.05 415.30 L541.10 417.28 L542.11 419.30 L543.06 421.38 L543.97 423.51 L544.82 425.69 L545.62 427.92 L546.37 430.19 L547.06 432.51 L547.70 434.87 L548.28 437.27 L548.81 439.71 L549.28 442.19 L549.70 444.71 L550.07 447.26 L550.37 449.84 L550.62 452.46 L550.82 455.10 L550.96 457.78 L551.04 460.47 L551.06 463.20 L551.03 465.94 L550.94 468.71 L550.79 471.49 L550.59 474.29 L550.33 477.10 L550.02 479.93 L549.64 482.77 L549.22 485.61 L548.73 488.46 L548.20 491.32 L547.60 494.18 L546.96 497.04 L546.26 499.90 L545.50 502.76 L544.69 505.61 L543.84 508.46 L542.92 511.29 L541.96 514.12 L540.95 516.93 L539.89 519.73 L538.77 522.51 L537.61 525.27 L536.41 528.01 L535.15 530.73 L533.85 533.43 L532.51 536.10 L531.12 538.74 L529.68 541.35 L528.21 543.93 L526.69 546.48 L525.14 548.99 L523.54 551.46 L521.91 553.90 L520.24 556.30 L518.54 558.65 L516.80 560.96 L515.02 563.23 L513.22 565.45 L511.38 567.62 L509.52 569.75 L507.63 571.82 L505.70 573.84 L503.76 575.80 L501.79 577.71 L499.80 579.57 L497.78 581.37 L495.75 583.10 L493.69 584.78 L491.62 586.40 L489.53 587.95 L487.43 589.44 L485.32 590.87 L483.19 592.23 L481.05 593.52 L478.91 594.75 L476.75 595.91 L474.59 597.00 L472.43 598.02 L470.26 598.97 L468.10 599.85 L465.93 600.66 L463.76 601.40 L461.60 602.06 L459.44 602.65 L457.29 603.17 L455.15 603.61 L453.01 603.98 L450.88 604.27 L448.77 604.49 L446.67 604.64 L444.59 604.71 L368.72 604.88 L365.99 604.80 L363.28 604.62 L360.60 604.34 L357.95 603.96 L355.33 603.49 L352.75 602.92 L350.19 602.26 L347.68 601.50 L345.20 600.64 L342.76 599.69 L340.36 598.65 L338.01 597.51 L335.70 596.28 L333.43 594.96 L331.22 593.54 L329.05 592.04 L326.93 590.45 L324.86 588.77 L322.85 587.01 L320.90 585.16 L318.99 583.22 L317.15 581.21 L315.37 579.11 L313.64 576.93 L311.98 574.67 L310.38 572.34 L308.84 569.93 L307.37 567.45 L305.96 564.89 L304.62 562.27 L303.34 559.58 L302.13 556.82 L301.00 553.99 L299.93 551.11 L298.93 548.16 L298.01 545.16 L297.15 542.09 L296.37 538.98 L295.66 535.81 L295.03 532.59 L294.47 529.32 L293.98 526.01 L293.57 522.65 L293.23 519.26 L292.97 515.82 L292.78 512.35 L292.67 508.84Z"/></clipPath>
<mask id="mPin"><rect width="2100" height="1152" fill="#fff"/><path d="M319.82 487.70 L319.85 485.43 L319.93 483.14 L320.05 480.83 L320.22 478.51 L320.45 476.17 L320.71 473.81 L321.03 471.45 L321.39 469.08 L321.80 466.70 L322.25 464.31 L322.76 461.92 L323.30 459.52 L323.90 457.12 L324.53 454.73 L325.21 452.33 L325.94 449.94 L326.71 447.56 L327.52 445.18 L328.38 442.81 L329.27 440.45 L330.21 438.10 L331.19 435.77 L332.21 433.45 L333.27 431.14 L334.36 428.86 L335.50 426.59 L336.67 424.35 L337.88 422.13 L339.12 419.93 L340.40 417.76 L341.71 415.61 L343.05 413.50 L344.43 411.41 L345.83 409.36 L347.27 407.34 L348.74 405.35 L350.23 403.40 L351.75 401.49 L353.30 399.61 L354.87 397.78 L356.46 395.98 L358.08 394.23 L359.72 392.52 L361.38 390.86 L363.05 389.24 L364.75 387.66 L366.46 386.14 L368.19 384.67 L369.94 383.24 L371.70 381.87 L373.46 380.54 L375.24 379.27 L377.04 378.06 L378.83 376.90 L380.64 375.79 L382.45 374.74 L384.27 373.75 L386.09 372.81 L387.91 371.93 L389.74 371.11 L391.56 370.35 L393.38 369.65 L395.20 369.01 L397.02 368.43 L398.83 367.92 L400.63 367.46 L402.43 367.06 L404.22 366.73 L405.99 366.46 L407.76 366.25 L409.51 366.11 L411.25 366.02 L412.98 366.00 L414.69 366.04 L416.38 366.15 L418.05 366.32 L419.71 366.55 L421.34 366.84 L422.95 367.19 L424.54 367.61 L426.10 368.09 L427.64 368.63 L429.16 369.23 L430.64 369.89 L432.10 370.61 L433.53 371.39 L434.93 372.23 L436.29 373.13 L437.63 374.08 L438.93 375.10 L440.20 376.17 L441.43 377.29 L496.75 430.35 L497.68 431.28 L498.59 432.25 L499.48 433.26 L500.33 434.31 L501.16 435.40 L501.96 436.53 L502.72 437.69 L503.46 438.89 L504.17 440.12 L504.85 441.39 L505.49 442.69 L506.11 444.03 L506.69 445.39 L507.24 446.79 L507.76 448.22 L508.24 449.67 L508.69 451.15 L509.10 452.66 L509.49 454.20 L509.83 455.76 L510.14 457.34 L510.42 458.95 L510.66 460.58 L510.87 462.23 L511.04 463.89 L511.17 465.58 L511.27 467.28 L511.34 469.00 L511.36 470.73 L511.36 472.48 L511.31 474.24 L511.23 476.01 L511.12 477.79 L510.97 479.57 L510.78 481.37 L510.56 483.17 L510.30 484.97 L510.01 486.78 L509.68 488.59 L509.32 490.41 L508.92 492.22 L508.49 494.03 L508.02 495.84 L507.53 497.64 L506.99 499.44 L506.43 501.24 L505.83 503.02 L505.20 504.80 L504.54 506.57 L503.85 508.32 L503.13 510.07 L502.38 511.80 L501.60 513.51 L500.78 515.21 L499.94 516.89 L499.08 518.56 L498.18 520.20 L497.26 521.83 L496.31 523.43 L495.34 525.01 L494.34 526.56 L493.32 528.09 L492.27 529.60 L491.20 531.08 L490.11 532.53 L489.00 533.95 L487.86 535.34 L486.71 536.70 L485.54 538.02 L484.35 539.32 L483.14 540.58 L481.92 541.81 L480.68 543.00 L479.43 544.16 L478.16 545.27 L476.88 546.36 L475.58 547.40 L474.28 548.40 L472.97 549.36 L471.64 550.29 L470.31 551.17 L468.97 552.01 L467.62 552.81 L466.27 553.56 L464.91 554.27 L463.54 554.94 L462.18 555.56 L460.81 556.14 L459.44 556.67 L458.07 557.16 L456.71 557.60 L455.34 558.00 L453.97 558.35 L452.61 558.65 L451.26 558.91 L449.91 559.12 L448.56 559.28 L447.23 559.39 L445.90 559.46 L444.58 559.48 L443.27 559.45 L441.97 559.37 L440.68 559.25 L360.93 548.76 L359.27 548.53 L357.64 548.24 L356.03 547.89 L354.44 547.47 L352.88 546.99 L351.34 546.45 L349.82 545.85 L348.34 545.19 L346.88 544.47 L345.45 543.69 L344.05 542.85 L342.69 541.95 L341.35 541.00 L340.05 539.98 L338.78 538.91 L337.55 537.79 L336.35 536.61 L335.19 535.37 L334.07 534.08 L332.98 532.74 L331.93 531.35 L330.92 529.91 L329.96 528.42 L329.03 526.88 L328.14 525.29 L327.30 523.65 L326.50 521.97 L325.74 520.25 L325.03 518.48 L324.36 516.67 L323.73 514.82 L323.15 512.94 L322.62 511.01 L322.13 509.05 L321.68 507.05 L321.29 505.01 L320.94 502.95 L320.64 500.85 L320.38 498.73 L320.17 496.57 L320.01 494.39 L319.90 492.19 L319.83 489.96Z" fill="#000"/></mask>
<filter id="blur1" x="-20%" y="-20%" width="140%" height="140%"><feGaussianBlur stdDeviation="0.8"/></filter>
</defs>
<g  fill="none" stroke-width="1"><path d="M-1084.67 453.79L844.79 1794.60M-1053.89 439.05L875.57 1779.86M-1023.12 424.31L906.35 1765.11M-961.56 394.83L967.91 1735.63M-930.78 380.08L998.68 1720.89M-900.00 365.34L1029.46 1706.15M-869.23 350.60L1060.24 1691.40M-807.67 321.12L1121.80 1661.92M-776.89 306.37L1152.57 1647.18M-746.11 291.63L1183.35 1632.44M-715.34 276.89L1214.13 1617.69M-653.78 247.41L1275.69 1588.21M-623.00 232.66L1306.46 1573.47M-592.22 217.92L1337.24 1558.73M-561.45 203.18L1368.02 1543.98M-499.89 173.70L1429.58 1514.50M-469.11 158.95L1460.35 1499.76M-438.33 144.21L1491.13 1485.02M-407.56 129.47L1521.91 1470.27M-346.00 99.99L1583.47 1440.79M-315.22 85.24L1614.24 1426.05M-284.44 70.50L1645.02 1411.31M-253.67 55.76L1675.80 1396.56M-192.11 26.28L1737.36 1367.08M-161.33 11.53L1768.13 1352.34M-130.55 -3.21L1798.91 1337.60M-99.78 -17.95L1829.69 1322.85M-38.22 -47.43L1891.25 1293.37M-7.44 -62.18L1922.02 1278.63M23.34 -76.92L1952.80 1263.89M54.11 -91.66L1983.58 1249.14M115.67 -121.14L2045.14 1219.66M146.45 -135.89L2075.91 1204.92M177.23 -150.63L2106.69 1190.18M208.00 -165.37L2137.47 1175.43M269.56 -194.85L2199.03 1145.95M300.34 -209.60L2229.80 1131.21M331.12 -224.34L2260.58 1116.47M361.89 -239.08L2291.36 1101.72M423.45 -268.56L2352.92 1072.24M454.23 -283.31L2383.69 1057.50M485.01 -298.05L2414.47 1042.76M515.78 -312.79L2445.25 1028.01M577.34 -342.27L2506.81 998.53M608.12 -357.02L2537.58 983.79M638.90 -371.76L2568.36 969.05M669.67 -386.50L2599.14 954.30M731.23 -415.98L2660.70 924.82M762.01 -430.73L2691.47 910.08M792.79 -445.47L2722.25 895.34M823.56 -460.21L2753.03 880.59M885.12 -489.69L2814.59 851.11M915.90 -504.44L2845.36 836.37M946.68 -519.18L2876.14 821.63M977.45 -533.92L2906.92 806.88M1039.01 -563.40L2968.48 777.40M1069.79 -578.15L2999.25 762.66M1100.57 -592.89L3030.03 747.92M1131.34 -607.63L3060.81 733.17M1192.90 -637.11L3122.37 703.69M1223.68 -651.86L3153.14 688.95M-1084.67 453.79L1223.68 -651.86M-1027.08 493.82L1281.27 -611.83M-998.28 513.83L1310.07 -591.82M-969.48 533.84L1338.87 -571.81M-940.68 553.85L1367.67 -551.80M-883.09 593.88L1425.26 -511.77M-854.29 613.89L1454.06 -491.76M-825.49 633.90L1482.86 -471.75M-796.69 653.91L1511.66 -451.74M-739.10 693.94L1569.25 -411.71M-710.30 713.95L1598.05 -391.70M-681.50 733.96L1626.85 -371.69M-652.70 753.97L1655.65 -351.68M-595.11 794.00L1713.24 -311.65M-566.31 814.01L1742.04 -291.64M-537.51 834.02L1770.84 -271.63M-508.71 854.03L1799.64 -251.62M-451.12 894.06L1857.23 -211.59M-422.32 914.07L1886.03 -191.58M-393.52 934.08L1914.83 -171.57M-364.72 954.09L1943.63 -151.56M-307.13 994.12L2001.22 -111.53M-278.33 1014.13L2030.02 -91.52M-249.53 1034.14L2058.82 -71.51M-220.73 1054.15L2087.62 -51.50M-163.14 1094.18L2145.21 -11.47M-134.34 1114.19L2174.01 8.54M-105.54 1134.20L2202.81 28.55M-76.74 1154.21L2231.61 48.56M-19.15 1194.24L2289.20 88.59M9.65 1214.25L2318.00 108.60M38.45 1234.26L2346.80 128.61M67.25 1254.27L2375.60 148.62M124.84 1294.30L2433.19 188.65M153.64 1314.31L2461.99 208.66M182.44 1334.32L2490.79 228.67M211.24 1354.33L2519.59 248.68M268.83 1394.36L2577.18 288.71M297.63 1414.37L2605.98 308.72M326.43 1434.38L2634.78 328.73M355.23 1454.39L2663.58 348.74M412.82 1494.42L2721.17 388.77M441.62 1514.43L2749.97 408.78M470.42 1534.44L2778.77 428.79M499.22 1554.45L2807.57 448.80M556.81 1594.48L2865.16 488.83M585.61 1614.49L2893.96 508.84M614.41 1634.50L2922.76 528.85M643.21 1654.51L2951.56 548.86M700.80 1694.54L3009.15 588.89M729.60 1714.55L3037.95 608.90M758.40 1734.56L3066.75 628.91M787.20 1754.57L3095.55 648.92M844.79 1794.60L3153.14 688.95" stroke="rgba(0,0,0,0.075)"/><path d="M-992.34 409.57L937.13 1750.37M-838.45 335.86L1091.02 1676.66M-684.56 262.15L1244.91 1602.95M-530.67 188.44L1398.80 1529.24M-376.78 114.73L1552.69 1455.53M-69.00 -32.69L1860.47 1308.11M84.89 -106.40L2014.36 1234.40M238.78 -180.11L2168.25 1160.69M392.67 -253.82L2322.14 1086.98M546.56 -327.53L2476.03 1013.27M700.45 -401.24L2629.92 939.56M854.34 -474.95L2783.81 865.85M1008.23 -548.66L2937.70 792.14M1162.12 -622.37L3091.59 718.43M-1055.87 473.81L1252.48 -631.84M-911.88 573.87L1396.47 -531.78M-767.89 673.93L1540.46 -431.72M-623.90 773.99L1684.45 -331.66M-479.91 874.05L1828.44 -231.60M-335.92 974.11L1972.43 -131.54M-47.94 1174.23L2260.41 68.58M96.05 1274.29L2404.40 168.64M240.04 1374.35L2548.39 268.70M384.03 1474.41L2692.38 368.76M528.02 1574.47L2836.37 468.82M672.01 1674.53L2980.36 568.88M816.00 1774.59L3124.35 668.94" stroke="rgba(0,0,0,0.185)"/></g>
<path d="M-5089.75 -3341.01L6429.45 4663.79" stroke="rgba(255,90,90,0.62)" stroke-width="1.1" fill="none"/><path d="M-5485.75 3609.79L6825.45 -2287.01" stroke="rgba(80,80,255,0.62)" stroke-width="1.1" fill="none"/>
<path d="M1052.60 760.84 L1052.47 766.81 L1052.06 772.76 L1051.40 778.69 L1050.46 784.59 L1049.26 790.45 L1047.79 796.27 L1046.06 802.05 L1044.07 807.78 L1041.81 813.47 L1039.30 819.09 L1036.52 824.66 L1033.49 830.17 L1030.21 835.61 L1026.67 840.98 L1022.88 846.28 L1018.85 851.50 L1014.57 856.64 L1010.05 861.70 L1005.29 866.67 L1000.30 871.55 L995.07 876.33 L989.62 881.01 L983.94 885.60 L978.04 890.08 L971.93 894.45 L965.60 898.72 L959.06 902.87 L952.32 906.91 L945.39 910.82 L938.25 914.62 L930.93 918.29 L923.43 921.83 L915.74 925.25 L907.89 928.54 L899.86 931.69 L891.67 934.70 L883.32 937.58 L874.83 940.32 L866.18 942.92 L857.40 945.37 L848.48 947.68 L839.44 949.85 L830.27 951.86 L820.99 953.73 L811.60 955.44 L802.11 957.00 L792.52 958.41 L782.84 959.67 L773.08 960.77 L763.24 961.72 L753.34 962.51 L743.37 963.14 L733.34 963.62 L723.27 963.94 L713.16 964.10 L703.01 964.10 L692.83 963.95 L682.63 963.63 L672.42 963.16 L662.20 962.54 L651.98 961.75 L641.77 960.81 L631.57 959.72 L621.39 958.47 L611.24 957.07 L601.13 955.51 L591.06 953.80 L581.03 951.94 L571.06 949.93 L561.16 947.78 L551.32 945.47 L541.56 943.02 L531.88 940.43 L522.29 937.70 L512.80 934.83 L503.41 931.81 L494.13 928.67 L484.96 925.39 L475.92 921.98 L467.00 918.44 L458.22 914.77 L449.57 910.98 L441.08 907.07 L432.73 903.04 L424.54 898.89 L416.51 894.63 L408.66 890.26 L400.97 885.79 L393.47 881.21 L386.15 876.52 L379.01 871.75 L372.08 866.87 L365.34 861.91 L358.80 856.85 L352.47 851.72 L346.36 846.50 L340.46 841.20 L334.78 835.83 L329.33 830.40 L324.10 824.89 L319.11 819.32 L314.35 813.70 L309.83 808.02 L305.55 802.29 L301.52 796.51 L297.73 790.69 L294.19 784.83 L290.91 778.94 L287.88 773.01 L285.10 767.06 L282.59 761.08 L280.33 755.09 L278.34 749.08 L276.61 743.06 L275.14 737.04 L273.94 731.01 L273.00 724.99 L272.34 718.97 L271.93 712.96 L271.80 706.96 L271.93 700.99 L272.34 695.04 L273.00 689.11 L273.94 683.21 L275.14 677.35 L276.61 671.53 L278.34 665.75 L280.33 660.02 L282.59 654.33 L285.10 648.71 L287.88 643.14 L290.91 637.63 L294.19 632.19 L297.73 626.82 L301.52 621.52 L305.55 616.30 L309.83 611.16 L314.35 606.10 L319.11 601.13 L324.10 596.25 L329.33 591.47 L334.78 586.79 L340.46 582.20 L346.36 577.72 L352.47 573.35 L358.80 569.08 L365.34 564.93 L372.08 560.89 L379.01 556.98 L386.15 553.18 L393.47 549.51 L400.97 545.97 L408.66 542.55 L416.51 539.26 L424.54 536.11 L432.73 533.10 L441.08 530.22 L449.57 527.48 L458.22 524.88 L467.00 522.43 L475.92 520.12 L484.96 517.95 L494.13 515.94 L503.41 514.07 L512.80 512.36 L522.29 510.80 L531.88 509.39 L541.56 508.13 L551.32 507.03 L561.16 506.08 L571.06 505.29 L581.03 504.66 L591.06 504.18 L601.13 503.86 L611.24 503.70 L621.39 503.70 L631.57 503.85 L641.77 504.17 L651.98 504.64 L662.20 505.26 L672.42 506.05 L682.63 506.99 L692.83 508.08 L703.01 509.33 L713.16 510.73 L723.27 512.29 L733.34 514.00 L743.37 515.86 L753.34 517.87 L763.24 520.02 L773.08 522.33 L782.84 524.78 L792.52 527.37 L802.11 530.10 L811.60 532.97 L820.99 535.99 L830.27 539.13 L839.44 542.41 L848.48 545.82 L857.40 549.36 L866.18 553.03 L874.83 556.82 L883.32 560.73 L891.67 564.76 L899.86 568.91 L907.89 573.17 L915.74 577.54 L923.43 582.01 L930.93 586.59 L938.25 591.28 L945.39 596.05 L952.32 600.93 L959.06 605.89 L965.60 610.95 L971.93 616.08 L978.04 621.30 L983.94 626.60 L989.62 631.97 L995.07 637.40 L1000.30 642.91 L1005.29 648.48 L1010.05 654.10 L1014.57 659.78 L1018.85 665.51 L1022.88 671.29 L1026.67 677.11 L1030.21 682.97 L1033.49 688.86 L1036.52 694.79 L1039.30 700.74 L1041.81 706.72 L1044.07 712.71 L1046.06 718.72 L1047.79 724.74 L1049.26 730.76 L1050.46 736.79 L1051.40 742.81 L1052.06 748.83 L1052.47 754.84Z" fill="#d3e8fc" mask="url(#mE1)"/>
<path d="M1022.80 800.00 L1022.68 805.57 L1022.30 811.13 L1021.68 816.66 L1020.80 822.17 L1019.68 827.64 L1018.31 833.07 L1016.70 838.47 L1014.84 843.82 L1012.73 849.13 L1010.38 854.38 L1007.79 859.58 L1004.96 864.72 L1001.90 869.80 L998.59 874.81 L995.06 879.76 L991.29 884.63 L987.30 889.43 L983.08 894.15 L978.63 898.79 L973.97 903.35 L969.09 907.81 L964.00 912.19 L958.70 916.47 L953.20 920.65 L947.49 924.73 L941.58 928.71 L935.48 932.59 L929.19 936.36 L922.71 940.01 L916.06 943.55 L909.22 946.98 L902.21 950.29 L895.04 953.48 L887.71 956.55 L880.21 959.49 L872.57 962.31 L864.78 964.99 L856.84 967.55 L848.77 969.98 L840.58 972.27 L832.25 974.42 L823.81 976.44 L815.25 978.32 L806.59 980.06 L797.82 981.67 L788.96 983.12 L780.01 984.44 L770.97 985.61 L761.86 986.64 L752.68 987.52 L743.43 988.26 L734.12 988.85 L724.77 989.30 L715.36 989.60 L705.92 989.75 L696.45 989.75 L686.94 989.60 L677.42 989.31 L667.89 988.87 L658.35 988.29 L648.81 987.56 L639.28 986.68 L629.76 985.66 L620.25 984.49 L610.78 983.18 L601.34 981.73 L591.93 980.13 L582.58 978.40 L573.27 976.52 L564.02 974.51 L554.84 972.36 L545.73 970.07 L536.69 967.65 L527.74 965.10 L518.88 962.42 L510.11 959.61 L501.45 956.67 L492.89 953.61 L484.45 950.43 L476.13 947.12 L467.93 943.70 L459.86 940.16 L451.92 936.51 L444.13 932.75 L436.49 928.88 L428.99 924.90 L421.66 920.82 L414.49 916.64 L407.48 912.36 L400.64 907.99 L393.99 903.53 L387.51 898.98 L381.22 894.35 L375.12 889.63 L369.21 884.83 L363.50 879.96 L358.00 875.02 L352.70 870.01 L347.61 864.93 L342.73 859.79 L338.07 854.60 L333.62 849.35 L329.40 844.04 L325.41 838.69 L321.64 833.30 L318.11 827.87 L314.80 822.39 L311.74 816.89 L308.91 811.36 L306.32 805.80 L303.97 800.23 L301.86 794.63 L300.00 789.02 L298.39 783.40 L297.02 777.78 L295.90 772.15 L295.02 766.53 L294.40 760.91 L294.02 755.30 L293.90 749.70 L294.02 744.13 L294.40 738.57 L295.02 733.04 L295.90 727.53 L297.02 722.06 L298.39 716.63 L300.00 711.23 L301.86 705.88 L303.97 700.57 L306.32 695.32 L308.91 690.12 L311.74 684.98 L314.80 679.90 L318.11 674.89 L321.64 669.94 L325.41 665.07 L329.40 660.27 L333.62 655.55 L338.07 650.91 L342.73 646.35 L347.61 641.89 L352.70 637.51 L358.00 633.23 L363.50 629.05 L369.21 624.97 L375.12 620.99 L381.22 617.11 L387.51 613.34 L393.99 609.69 L400.64 606.15 L407.48 602.72 L414.49 599.41 L421.66 596.22 L428.99 593.15 L436.49 590.21 L444.13 587.39 L451.92 584.71 L459.86 582.15 L467.93 579.72 L476.12 577.43 L484.45 575.28 L492.89 573.26 L501.45 571.38 L510.11 569.64 L518.88 568.03 L527.74 566.58 L536.69 565.26 L545.73 564.09 L554.84 563.06 L564.02 562.18 L573.27 561.44 L582.58 560.85 L591.93 560.40 L601.34 560.10 L610.78 559.95 L620.25 559.95 L629.76 560.10 L639.28 560.39 L648.81 560.83 L658.35 561.41 L667.89 562.14 L677.42 563.02 L686.94 564.04 L696.45 565.21 L705.92 566.52 L715.36 567.97 L724.77 569.57 L734.12 571.30 L743.43 573.18 L752.68 575.19 L761.86 577.34 L770.97 579.63 L780.01 582.05 L788.96 584.60 L797.82 587.28 L806.59 590.09 L815.25 593.03 L823.81 596.09 L832.25 599.27 L840.57 602.58 L848.77 606.00 L856.84 609.54 L864.78 613.19 L872.57 616.95 L880.21 620.82 L887.71 624.80 L895.04 628.88 L902.21 633.06 L909.22 637.34 L916.06 641.71 L922.71 646.17 L929.19 650.72 L935.48 655.35 L941.58 660.07 L947.49 664.87 L953.20 669.74 L958.70 674.68 L964.00 679.69 L969.09 684.77 L973.97 689.91 L978.63 695.10 L983.08 700.35 L987.30 705.66 L991.29 711.01 L995.06 716.40 L998.59 721.83 L1001.90 727.31 L1004.96 732.81 L1007.79 738.34 L1010.38 743.90 L1012.73 749.47 L1014.84 755.07 L1016.70 760.68 L1018.31 766.30 L1019.68 771.92 L1020.80 777.55 L1021.68 783.17 L1022.30 788.79 L1022.68 794.40Z" fill="#97d5fb"/><path d="M999.22 873.30 L998.18 875.07 L997.12 876.84 L996.02 878.60 L994.90 880.35 L993.76 882.09 L992.58 883.83 L991.39 885.56 L990.16 887.27 L988.92 888.98 L987.64 890.68 L986.34 892.38 L985.02 894.06 L983.67 895.73 L982.29 897.40 L980.90 899.05 L979.47 900.70 L978.02 902.33 L976.55 903.96 L975.05 905.57 L973.53 907.18 L971.98 908.78 L970.41 910.36 L968.81 911.94 L967.20 913.50 L965.55 915.05 L963.89 916.60 L962.20 918.13 L960.48 919.65 L958.75 921.16 L956.99 922.66 L955.21 924.15 L953.40 925.62 L951.57 927.09 L949.72 928.54 L947.85 929.98 L945.95 931.41 L944.03 932.82 L942.09 934.23 L940.13 935.62 L938.15 937.00 L936.14 938.37 L934.12 939.72 L932.07 941.07 L930.00 942.40 L927.91 943.71 L925.80 945.02 L923.67 946.31 L921.52 947.59 L919.35 948.85 L917.15 950.10 L914.94 951.34 L912.71 952.56 L910.46 953.77 L908.19 954.97 L905.90 956.15 L903.59 957.32 L901.26 958.48 L898.91 959.62 L896.55 960.75 L894.16 961.86 L891.76 962.96 L889.34 964.04 L886.90 965.11 L884.45 966.16 L881.97 967.20 L879.48 968.23 L876.98 969.24 L874.45 970.24 L871.91 971.22 L869.35 972.18 L866.78 973.13 L864.19 974.07 L861.58 974.99 L858.96 975.89 L856.32 976.78 L853.67 977.66 L851.00 978.51 L848.32 979.36 L845.62 980.18 L842.91 980.99 L840.18 981.79 L837.44 982.57 L834.69 983.33 L831.92 984.08 L829.14 984.81 L826.34 985.53 L823.53 986.23 L820.71 986.91 L817.88 987.58 L815.03 988.23 L812.18 988.86 L809.31 989.48 L806.42 990.08 L803.53 990.67 L800.63 991.23 L797.71 991.79 L794.78 992.32 L791.85 992.84 L788.90 993.34 L785.94 993.83 L782.97 994.29 L779.99 994.75 L777.01 995.18 L774.01 995.60 L771.00 996.00 L767.99 996.38 L764.97 996.75 L761.94 997.10 L758.90 997.43 L755.85 997.75 L752.79 998.05 L749.73 998.33 L746.66 998.59 L743.58 998.84 L740.50 999.07 L737.41 999.29 L734.31 999.48 L731.21 999.66 L728.10 999.82 L724.99 999.97 L721.87 1000.09 L718.75 1000.20 L715.62 1000.30 L712.48 1000.37 L709.34 1000.43 L706.20 1000.47 L703.06 1000.49 L699.91 1000.50 L696.75 1000.49 L693.60 1000.46 L690.44 1000.41 L687.27 1000.35 L684.11 1000.27 L680.94 1000.17 L677.77 1000.06 L674.60 999.93 L671.43 999.78 L668.26 999.61 L665.08 999.43 L661.91 999.23 L658.73 999.01 L655.56 998.77 L652.38 998.52 L649.21 998.25 L646.03 997.97 L642.86 997.66 L639.68 997.34 L636.51 997.00 L633.34 996.65 L630.17 996.28 L627.00 995.89 L623.84 995.48 L620.67 995.06 L617.51 994.62 L614.35 994.16 L611.20 993.69 L608.05 993.20 L604.90 992.69 L601.76 992.17 L598.62 991.63 L595.48 991.07 L592.35 990.50 L589.22 989.91 L586.10 989.31 L582.99 988.68 L579.87 988.04 L576.77 987.39 L573.67 986.72 L570.58 986.03 L567.49 985.33 L564.41 984.61 L561.34 983.87 L558.27 983.12 L555.21 982.35 L552.16 981.56 L549.12 980.77 L546.09 979.95 L543.06 979.12 L540.04 978.27 L537.03 977.41 L534.03 976.53 L531.04 975.64 L528.06 974.73 L525.09 973.80 L522.12 972.86 L519.17 971.91 L516.23 970.94 L513.30 969.95 L510.38 968.95 L507.47 967.94 L504.57 966.91 L501.68 965.87 L498.81 964.81 L495.95 963.73 L493.10 962.65 L490.26 961.54 L487.43 960.43 L484.62 959.30 L481.82 958.15 L479.03 956.99 L476.26 955.82 L473.50 954.63 L470.75 953.43 L468.02 952.22 L465.30 950.99 L462.59 949.75 L459.91 948.49 L457.23 947.22 L454.57 945.94 L451.93 944.65 L449.30 943.34 L446.69 942.02 L444.09 940.69 L441.51 939.34 L438.94 937.98 L436.40 936.61 L433.86 935.23 L431.35 933.83 L428.85 932.42 L426.37 931.00 L423.91 929.57 L421.46 928.13 L419.03 926.67 L416.62 925.20 L414.23 923.72 L411.86 922.23 L409.50 920.73 L407.17 919.22 L404.85 917.69 L402.55 916.16 L400.27 914.61 L398.01 913.06 L395.77 911.49 L393.55 909.91 L391.35 908.32 L389.17 906.72 L387.01 905.12 L384.87 903.50 L382.75 901.87 L380.65 900.23 L378.58 898.58 L376.52 896.92 L374.49 895.26 L372.47 893.58 L370.48 891.90 L368.51 890.20 L366.56 888.50 L364.63 886.79 L362.73 885.07 L360.84 883.34 L358.98 881.60 L357.15 879.85 L355.33 878.10 L353.54 876.34 L351.77 874.57 L350.02 872.79 L348.30 871.01 L346.60 869.21 L344.92 867.41 L343.27 865.61 L341.64 863.79 L340.04 861.97 L338.46 860.15 L336.90 858.31 L335.37 856.47 L333.86 854.63 L332.37 852.77 L330.92 850.91 L329.48 849.05 L328.07 847.18 L326.69 845.30 L325.33 843.42 L323.99 841.53 L322.68 839.64 L321.40 837.74 L320.14 835.84 L318.90 833.94 L317.70 832.02 L316.51 830.11 L315.36 828.19 L314.23 826.26 L313.12 824.34 L312.04 822.40 L310.99 820.47 L309.96 818.53 L308.96 816.59 L307.99 814.64 L307.04 812.69 L306.12 810.74 L305.23 808.78 L304.36 806.83 L303.52 804.87 L302.70 802.90 L301.92 800.94Z" fill="#97d5fb"/>
<g clip-path="url(#cE4)"><path d="M940.80 751.24 L940.70 755.50 L940.42 759.74 L939.94 763.96 L939.28 768.16 L938.42 772.34 L937.38 776.49 L936.14 780.61 L934.72 784.69 L933.11 788.74 L931.32 792.75 L929.35 796.72 L927.19 800.64 L924.85 804.52 L922.33 808.34 L919.63 812.12 L916.75 815.84 L913.70 819.50 L910.48 823.10 L907.09 826.64 L903.53 830.12 L899.81 833.53 L895.93 836.87 L891.88 840.13 L887.68 843.32 L883.32 846.44 L878.81 849.48 L874.16 852.44 L869.36 855.31 L864.41 858.10 L859.33 860.81 L854.12 863.42 L848.77 865.95 L843.29 868.38 L837.70 870.72 L831.98 872.97 L826.14 875.12 L820.20 877.17 L814.14 879.12 L807.98 880.97 L801.73 882.72 L795.37 884.36 L788.93 885.91 L782.40 887.34 L775.78 888.67 L769.09 889.89 L762.33 891.01 L755.50 892.01 L748.60 892.91 L741.65 893.69 L734.64 894.36 L727.58 894.93 L720.48 895.38 L713.34 895.72 L706.16 895.94 L698.96 896.06 L691.72 896.06 L684.47 895.95 L677.21 895.73 L669.93 895.39 L662.65 894.95 L655.37 894.39 L648.09 893.72 L640.83 892.94 L633.58 892.05 L626.34 891.05 L619.14 889.94 L611.96 888.72 L604.82 887.40 L597.72 885.97 L590.66 884.43 L583.65 882.79 L576.70 881.05 L569.80 879.20 L562.97 877.25 L556.21 875.20 L549.52 873.06 L542.90 870.82 L536.37 868.48 L529.93 866.05 L523.58 863.53 L517.32 860.92 L511.16 858.22 L505.10 855.43 L499.16 852.56 L493.32 849.60 L487.60 846.57 L482.01 843.46 L476.53 840.27 L471.18 837.00 L465.97 833.67 L460.89 830.26 L455.94 826.79 L451.14 823.25 L446.49 819.65 L441.98 815.99 L437.62 812.27 L433.42 808.50 L429.37 804.68 L425.49 800.80 L421.77 796.88 L418.21 792.91 L414.82 788.91 L411.60 784.86 L408.55 780.77 L405.67 776.66 L402.97 772.51 L400.45 768.34 L398.11 764.14 L395.95 759.92 L393.98 755.67 L392.19 751.42 L390.58 747.15 L389.16 742.87 L387.92 738.58 L386.88 734.29 L386.02 729.99 L385.36 725.70 L384.88 721.41 L384.60 717.13 L384.50 712.86 L384.60 708.60 L384.88 704.36 L385.36 700.14 L386.02 695.94 L386.88 691.76 L387.92 687.61 L389.16 683.49 L390.58 679.41 L392.19 675.36 L393.98 671.35 L395.95 667.38 L398.11 663.46 L400.45 659.58 L402.97 655.76 L405.67 651.98 L408.55 648.26 L411.60 644.60 L414.82 641.00 L418.21 637.46 L421.77 633.98 L425.49 630.57 L429.37 627.23 L433.42 623.97 L437.62 620.78 L441.98 617.66 L446.49 614.62 L451.14 611.66 L455.94 608.79 L460.89 606.00 L465.97 603.29 L471.18 600.68 L476.53 598.15 L482.01 595.72 L487.60 593.38 L493.32 591.13 L499.16 588.98 L505.10 586.93 L511.16 584.98 L517.32 583.13 L523.57 581.38 L529.93 579.74 L536.37 578.19 L542.90 576.76 L549.52 575.43 L556.21 574.21 L562.97 573.09 L569.80 572.09 L576.70 571.19 L583.65 570.41 L590.66 569.74 L597.72 569.17 L604.82 568.72 L611.96 568.38 L619.14 568.16 L626.34 568.04 L633.58 568.04 L640.83 568.15 L648.09 568.37 L655.37 568.71 L662.65 569.15 L669.93 569.71 L677.21 570.38 L684.47 571.16 L691.72 572.05 L698.96 573.05 L706.16 574.16 L713.34 575.38 L720.48 576.70 L727.58 578.13 L734.64 579.67 L741.65 581.31 L748.60 583.05 L755.50 584.90 L762.33 586.85 L769.09 588.90 L775.78 591.04 L782.40 593.28 L788.93 595.62 L795.37 598.05 L801.72 600.57 L807.98 603.18 L814.14 605.88 L820.20 608.67 L826.14 611.54 L831.98 614.50 L837.70 617.53 L843.29 620.64 L848.77 623.83 L854.12 627.10 L859.33 630.43 L864.41 633.84 L869.36 637.31 L874.16 640.85 L878.81 644.45 L883.32 648.11 L887.68 651.83 L891.88 655.60 L895.93 659.42 L899.81 663.30 L903.53 667.22 L907.09 671.19 L910.48 675.19 L913.70 679.24 L916.75 683.33 L919.63 687.44 L922.33 691.59 L924.85 695.76 L927.19 699.96 L929.35 704.18 L931.32 708.43 L933.11 712.68 L934.72 716.95 L936.14 721.23 L937.38 725.52 L938.42 729.81 L939.28 734.11 L939.94 738.40 L940.42 742.69 L940.70 746.97Z" fill="#9fdcff"/></g>
<g clip-path="url(#cBore)"><path d="M698.30 795.30 L698.29 795.94 L698.24 796.58 L698.17 797.22 L698.07 797.85 L697.94 798.48 L697.78 799.11 L697.60 799.73 L697.38 800.35 L697.14 800.96 L696.87 801.57 L696.57 802.16 L696.24 802.76 L695.89 803.34 L695.51 803.92 L695.10 804.49 L694.67 805.05 L694.21 805.60 L693.72 806.15 L693.21 806.68 L692.67 807.21 L692.11 807.72 L691.52 808.23 L690.91 808.72 L690.28 809.20 L689.62 809.67 L688.94 810.13 L688.24 810.58 L687.51 811.01 L686.77 811.43 L686.00 811.84 L685.21 812.24 L684.40 812.62 L683.58 812.99 L682.73 813.34 L681.87 813.68 L680.99 814.00 L680.09 814.31 L679.17 814.61 L678.24 814.89 L677.30 815.15 L676.34 815.40 L675.37 815.63 L674.38 815.85 L673.38 816.05 L672.37 816.23 L671.35 816.40 L670.32 816.55 L669.28 816.69 L668.23 816.81 L667.17 816.91 L666.10 816.99 L665.03 817.06 L663.95 817.11 L662.87 817.15 L661.78 817.17 L660.69 817.17 L659.60 817.15 L658.50 817.12 L657.40 817.06 L656.30 817.00 L655.20 816.91 L654.10 816.81 L653.00 816.69 L651.91 816.56 L650.82 816.41 L649.73 816.24 L648.65 816.06 L647.57 815.86 L646.50 815.64 L645.43 815.41 L644.37 815.16 L643.32 814.90 L642.28 814.62 L641.25 814.33 L640.23 814.02 L639.22 813.69 L638.22 813.35 L637.23 813.00 L636.26 812.63 L635.30 812.25 L634.36 811.86 L633.43 811.45 L632.51 811.03 L631.61 810.60 L630.73 810.15 L629.87 809.69 L629.02 809.22 L628.20 808.74 L627.39 808.25 L626.60 807.74 L625.83 807.23 L625.09 806.71 L624.36 806.17 L623.66 805.63 L622.98 805.07 L622.32 804.51 L621.69 803.94 L621.08 803.37 L620.49 802.78 L619.93 802.19 L619.39 801.59 L618.88 800.98 L618.39 800.37 L617.93 799.76 L617.50 799.14 L617.09 798.51 L616.71 797.88 L616.36 797.25 L616.03 796.61 L615.73 795.97 L615.46 795.32 L615.22 794.68 L615.00 794.03 L614.82 793.39 L614.66 792.74 L614.53 792.09 L614.43 791.44 L614.36 790.79 L614.31 790.15 L614.30 789.50 L614.31 788.86 L614.36 788.22 L614.43 787.58 L614.53 786.95 L614.66 786.32 L614.82 785.69 L615.00 785.07 L615.22 784.45 L615.46 783.84 L615.73 783.23 L616.03 782.64 L616.36 782.04 L616.71 781.46 L617.09 780.88 L617.50 780.31 L617.93 779.75 L618.39 779.20 L618.88 778.65 L619.39 778.12 L619.93 777.59 L620.49 777.08 L621.08 776.57 L621.69 776.08 L622.32 775.60 L622.98 775.13 L623.66 774.67 L624.36 774.22 L625.09 773.79 L625.83 773.37 L626.60 772.96 L627.39 772.56 L628.20 772.18 L629.02 771.81 L629.87 771.46 L630.73 771.12 L631.61 770.80 L632.51 770.49 L633.43 770.19 L634.36 769.91 L635.30 769.65 L636.26 769.40 L637.23 769.17 L638.22 768.95 L639.22 768.75 L640.23 768.57 L641.25 768.40 L642.28 768.25 L643.32 768.11 L644.37 767.99 L645.43 767.89 L646.50 767.81 L647.57 767.74 L648.65 767.69 L649.73 767.65 L650.82 767.63 L651.91 767.63 L653.00 767.65 L654.10 767.68 L655.20 767.74 L656.30 767.80 L657.40 767.89 L658.50 767.99 L659.60 768.11 L660.69 768.24 L661.78 768.39 L662.87 768.56 L663.95 768.74 L665.03 768.94 L666.10 769.16 L667.17 769.39 L668.23 769.64 L669.28 769.90 L670.32 770.18 L671.35 770.47 L672.37 770.78 L673.38 771.11 L674.38 771.45 L675.37 771.80 L676.34 772.17 L677.30 772.55 L678.24 772.94 L679.17 773.35 L680.09 773.77 L680.99 774.20 L681.87 774.65 L682.73 775.11 L683.58 775.58 L684.40 776.06 L685.21 776.55 L686.00 777.06 L686.77 777.57 L687.51 778.09 L688.24 778.63 L688.94 779.17 L689.62 779.73 L690.28 780.29 L690.91 780.86 L691.52 781.43 L692.11 782.02 L692.67 782.61 L693.21 783.21 L693.72 783.82 L694.21 784.43 L694.67 785.04 L695.10 785.66 L695.51 786.29 L695.89 786.92 L696.24 787.55 L696.57 788.19 L696.87 788.83 L697.14 789.48 L697.38 790.12 L697.60 790.77 L697.78 791.41 L697.94 792.06 L698.07 792.71 L698.17 793.36 L698.24 794.01 L698.29 794.65Z" fill="#fff"/></g>
<path d="M292.63 505.30 L292.67 501.73 L292.79 498.14 L292.98 494.52 L293.24 490.88 L293.58 487.22 L294.00 483.54 L294.49 479.85 L295.05 476.15 L295.69 472.43 L296.40 468.71 L297.19 464.99 L298.05 461.26 L298.98 457.54 L299.98 453.82 L301.05 450.10 L302.19 446.40 L303.40 442.70 L304.67 439.02 L306.02 435.35 L307.43 431.71 L308.91 428.08 L310.45 424.48 L312.05 420.90 L313.72 417.36 L315.44 413.84 L317.23 410.36 L319.08 406.91 L320.98 403.50 L322.94 400.13 L324.95 396.80 L327.02 393.52 L329.14 390.29 L331.31 387.11 L333.53 383.97 L335.80 380.90 L338.11 377.87 L340.47 374.91 L342.87 372.01 L345.31 369.16 L347.79 366.38 L350.30 363.67 L352.86 361.03 L355.45 358.45 L358.07 355.95 L360.72 353.52 L363.40 351.16 L366.11 348.89 L368.84 346.68 L371.59 344.56 L374.37 342.52 L377.17 340.56 L379.98 338.69 L382.81 336.90 L385.65 335.19 L388.51 333.58 L391.37 332.05 L394.25 330.61 L397.13 329.26 L400.01 328.00 L402.89 326.84 L405.78 325.77 L408.66 324.79 L411.54 323.91 L414.41 323.12 L417.28 322.42 L420.13 321.83 L422.97 321.33 L425.80 320.92 L428.62 320.62 L431.41 320.41 L434.19 320.30 L436.94 320.28 L439.67 320.36 L442.38 320.54 L445.06 320.82 L447.71 321.20 L450.33 321.67 L452.91 322.24 L455.47 322.90 L457.98 323.66 L460.46 324.52 L462.90 325.47 L465.30 326.51 L467.65 327.65 L469.96 328.88 L472.23 330.20 L474.44 331.62 L476.61 333.12 L478.73 334.71 L480.80 336.39 L482.81 338.15 L484.76 340.00 L486.67 341.94 L488.51 343.95 L490.29 346.05 L492.02 348.23 L493.68 350.49 L535.34 407.97 L536.59 409.72 L537.79 411.52 L538.94 413.39 L540.05 415.30 L541.10 417.28 L542.11 419.30 L543.06 421.38 L543.97 423.51 L544.82 425.69 L545.62 427.92 L546.37 430.19 L547.06 432.51 L547.70 434.87 L548.28 437.27 L548.81 439.71 L549.28 442.19 L549.70 444.71 L550.07 447.26 L550.37 449.84 L550.62 452.46 L550.82 455.10 L550.96 457.78 L551.04 460.47 L551.06 463.20 L551.03 465.94 L550.94 468.71 L550.79 471.49 L550.59 474.29 L550.33 477.10 L550.02 479.93 L549.64 482.77 L549.22 485.61 L548.73 488.46 L548.20 491.32 L547.60 494.18 L546.96 497.04 L546.26 499.90 L545.50 502.76 L544.69 505.61 L543.84 508.46 L542.92 511.29 L541.96 514.12 L540.95 516.93 L539.89 519.73 L538.77 522.51 L537.61 525.27 L536.41 528.01 L535.15 530.73 L533.85 533.43 L532.51 536.10 L531.12 538.74 L529.68 541.35 L528.21 543.93 L526.69 546.48 L525.14 548.99 L523.54 551.46 L521.91 553.90 L520.24 556.30 L518.54 558.65 L516.80 560.96 L515.02 563.23 L513.22 565.45 L511.38 567.62 L509.52 569.75 L507.63 571.82 L505.70 573.84 L503.76 575.80 L501.79 577.71 L499.80 579.57 L497.78 581.37 L495.75 583.10 L493.69 584.78 L491.62 586.40 L489.53 587.95 L487.43 589.44 L485.32 590.87 L483.19 592.23 L481.05 593.52 L478.91 594.75 L476.75 595.91 L474.59 597.00 L472.43 598.02 L470.26 598.97 L468.10 599.85 L465.93 600.66 L463.76 601.40 L461.60 602.06 L459.44 602.65 L457.29 603.17 L455.15 603.61 L453.01 603.98 L450.88 604.27 L448.77 604.49 L446.67 604.64 L444.59 604.71 L368.72 604.88 L365.99 604.80 L363.28 604.62 L360.60 604.34 L357.95 603.96 L355.33 603.49 L352.75 602.92 L350.19 602.26 L347.68 601.50 L345.20 600.64 L342.76 599.69 L340.36 598.65 L338.01 597.51 L335.70 596.28 L333.43 594.96 L331.22 593.54 L329.05 592.04 L326.93 590.45 L324.86 588.77 L322.85 587.01 L320.90 585.16 L318.99 583.22 L317.15 581.21 L315.37 579.11 L313.64 576.93 L311.98 574.67 L310.38 572.34 L308.84 569.93 L307.37 567.45 L305.96 564.89 L304.62 562.27 L303.34 559.58 L302.13 556.82 L301.00 553.99 L299.93 551.11 L298.93 548.16 L298.01 545.16 L297.15 542.09 L296.37 538.98 L295.66 535.81 L295.03 532.59 L294.47 529.32 L293.98 526.01 L293.57 522.65 L293.23 519.26 L292.97 515.82 L292.78 512.35 L292.67 508.84Z" fill="rgb(126,187,245)" fill-opacity="0.34"/>
<path d="M319.82 487.70 L319.85 485.43 L319.93 483.14 L320.05 480.83 L320.22 478.51 L320.45 476.17 L320.71 473.81 L321.03 471.45 L321.39 469.08 L321.80 466.70 L322.25 464.31 L322.76 461.92 L323.30 459.52 L323.90 457.12 L324.53 454.73 L325.21 452.33 L325.94 449.94 L326.71 447.56 L327.52 445.18 L328.38 442.81 L329.27 440.45 L330.21 438.10 L331.19 435.77 L332.21 433.45 L333.27 431.14 L334.36 428.86 L335.50 426.59 L336.67 424.35 L337.88 422.13 L339.12 419.93 L340.40 417.76 L341.71 415.61 L343.05 413.50 L344.43 411.41 L345.83 409.36 L347.27 407.34 L348.74 405.35 L350.23 403.40 L351.75 401.49 L353.30 399.61 L354.87 397.78 L356.46 395.98 L358.08 394.23 L359.72 392.52 L361.38 390.86 L363.05 389.24 L364.75 387.66 L366.46 386.14 L368.19 384.67 L369.94 383.24 L371.70 381.87 L373.46 380.54 L375.24 379.27 L377.04 378.06 L378.83 376.90 L380.64 375.79 L382.45 374.74 L384.27 373.75 L386.09 372.81 L387.91 371.93 L389.74 371.11 L391.56 370.35 L393.38 369.65 L395.20 369.01 L397.02 368.43 L398.83 367.92 L400.63 367.46 L402.43 367.06 L404.22 366.73 L405.99 366.46 L407.76 366.25 L409.51 366.11 L411.25 366.02 L412.98 366.00 L414.69 366.04 L416.38 366.15 L418.05 366.32 L419.71 366.55 L421.34 366.84 L422.95 367.19 L424.54 367.61 L426.10 368.09 L427.64 368.63 L429.16 369.23 L430.64 369.89 L432.10 370.61 L433.53 371.39 L434.93 372.23 L436.29 373.13 L437.63 374.08 L438.93 375.10 L440.20 376.17 L441.43 377.29 L496.75 430.35 L497.68 431.28 L498.59 432.25 L499.48 433.26 L500.33 434.31 L501.16 435.40 L501.96 436.53 L502.72 437.69 L503.46 438.89 L504.17 440.12 L504.85 441.39 L505.49 442.69 L506.11 444.03 L506.69 445.39 L507.24 446.79 L507.76 448.22 L508.24 449.67 L508.69 451.15 L509.10 452.66 L509.49 454.20 L509.83 455.76 L510.14 457.34 L510.42 458.95 L510.66 460.58 L510.87 462.23 L511.04 463.89 L511.17 465.58 L511.27 467.28 L511.34 469.00 L511.36 470.73 L511.36 472.48 L511.31 474.24 L511.23 476.01 L511.12 477.79 L510.97 479.57 L510.78 481.37 L510.56 483.17 L510.30 484.97 L510.01 486.78 L509.68 488.59 L509.32 490.41 L508.92 492.22 L508.49 494.03 L508.02 495.84 L507.53 497.64 L506.99 499.44 L506.43 501.24 L505.83 503.02 L505.20 504.80 L504.54 506.57 L503.85 508.32 L503.13 510.07 L502.38 511.80 L501.60 513.51 L500.78 515.21 L499.94 516.89 L499.08 518.56 L498.18 520.20 L497.26 521.83 L496.31 523.43 L495.34 525.01 L494.34 526.56 L493.32 528.09 L492.27 529.60 L491.20 531.08 L490.11 532.53 L489.00 533.95 L487.86 535.34 L486.71 536.70 L485.54 538.02 L484.35 539.32 L483.14 540.58 L481.92 541.81 L480.68 543.00 L479.43 544.16 L478.16 545.27 L476.88 546.36 L475.58 547.40 L474.28 548.40 L472.97 549.36 L471.64 550.29 L470.31 551.17 L468.97 552.01 L467.62 552.81 L466.27 553.56 L464.91 554.27 L463.54 554.94 L462.18 555.56 L460.81 556.14 L459.44 556.67 L458.07 557.16 L456.71 557.60 L455.34 558.00 L453.97 558.35 L452.61 558.65 L451.26 558.91 L449.91 559.12 L448.56 559.28 L447.23 559.39 L445.90 559.46 L444.58 559.48 L443.27 559.45 L441.97 559.37 L440.68 559.25 L360.93 548.76 L359.27 548.53 L357.64 548.24 L356.03 547.89 L354.44 547.47 L352.88 546.99 L351.34 546.45 L349.82 545.85 L348.34 545.19 L346.88 544.47 L345.45 543.69 L344.05 542.85 L342.69 541.95 L341.35 541.00 L340.05 539.98 L338.78 538.91 L337.55 537.79 L336.35 536.61 L335.19 535.37 L334.07 534.08 L332.98 532.74 L331.93 531.35 L330.92 529.91 L329.96 528.42 L329.03 526.88 L328.14 525.29 L327.30 523.65 L326.50 521.97 L325.74 520.25 L325.03 518.48 L324.36 516.67 L323.73 514.82 L323.15 512.94 L322.62 511.01 L322.13 509.05 L321.68 507.05 L321.29 505.01 L320.94 502.95 L320.64 500.85 L320.38 498.73 L320.17 496.57 L320.01 494.39 L319.90 492.19 L319.83 489.96Z" fill="#97d5fb"/>
<path d="M432.06 557.07 L430.90 556.57 L429.76 556.03 L428.63 555.45 L427.53 554.81 L426.45 554.14 L425.39 553.42 L424.36 552.65 L423.34 551.85 L422.36 551.00 L421.39 550.11 L420.46 549.18 L419.55 548.21 L418.66 547.20 L417.81 546.15 L416.98 545.06 L416.18 543.93 L415.42 542.77 L414.68 541.57 L413.97 540.34 L413.29 539.07 L412.65 537.77 L412.03 536.43 L411.45 535.07 L410.90 533.67 L410.38 532.24 L409.90 530.79 L409.45 529.31 L409.04 527.80 L408.65 526.26 L408.31 524.70 L408.00 523.12 L407.72 521.51 L407.48 519.88 L407.27 518.23 L407.10 516.57 L406.97 514.88 L406.87 513.18 L406.80 511.46 L406.78 509.73 L406.78 507.98 L406.83 506.22 L406.91 504.45 L407.02 502.67 L407.17 500.89 L407.36 499.09 L407.58 497.29 L407.84 495.49 L408.13 493.68 L408.46 491.87 L408.82 490.05 L409.22 488.24 L409.65 486.43 L410.12 484.62 L410.61 482.82 L411.15 481.02 L411.71 479.22 L412.31 477.44 L412.94 475.66 L413.60 473.89 L414.29 472.14 L415.01 470.39 L415.76 468.66 L416.54 466.95 L417.36 465.25 L418.20 463.57 L419.06 461.90 L419.96 460.26 L420.88 458.63 L421.83 457.03 L422.80 455.45 L423.80 453.90 L424.82 452.37 L425.87 450.86 L426.94 449.38 L428.03 447.93 L429.14 446.51 L430.28 445.12 L431.43 443.76 L432.60 442.44 L433.79 441.14 L435.00 439.88 L436.22 438.65 L437.46 437.46 L438.71 436.30 L439.98 435.19 L441.26 434.10 L442.56 433.06 L443.86 432.06 L445.17 431.10 L446.50 430.17 L447.83 429.29 L449.17 428.45 L450.52 427.65 L451.87 426.90 L453.23 426.19 L454.60 425.52 L455.96 424.90 L457.33 424.32 L458.70 423.79 L460.07 423.30 L461.43 422.86 L462.80 422.46 L464.17 422.11 L465.53 421.81 L466.88 421.55 L468.23 421.34 L469.58 421.18 L470.91 421.07 L472.24 421.00 L473.56 420.98 L474.87 421.01 L476.17 421.09 L477.46 421.21 L478.74 421.38 L480.00 421.60 L481.25 421.86 L482.48 422.18 L483.69 422.53 L484.89 422.94 L486.08 423.39 L487.24 423.89 L488.38 424.43 L489.51 425.01 L490.61 425.65 L491.69 426.32 L492.75 427.04 L493.78 427.81 L494.80 428.61 L495.78 429.46 L496.75 430.35 L497.68 431.28 L498.59 432.25 L499.48 433.26 L500.33 434.31 L501.16 435.40 L501.96 436.53 L502.72 437.69 L503.46 438.89 L504.17 440.12 L504.85 441.39 L505.49 442.69 L506.11 444.03 L506.69 445.39 L507.24 446.79 L507.76 448.22 L508.24 449.67 L508.69 451.15 L509.10 452.66 L509.49 454.20 L509.83 455.76 L510.14 457.34 L510.42 458.95 L510.66 460.58 L510.87 462.23 L511.04 463.89 L511.17 465.58 L511.27 467.28 L511.34 469.00 L511.36 470.73 L511.36 472.48 L511.31 474.24 L511.23 476.01 L511.12 477.79 L510.97 479.57 L510.78 481.37 L510.56 483.17 L510.30 484.97 L510.01 486.78 L509.68 488.59 L509.32 490.41 L508.92 492.22 L508.49 494.03 L508.02 495.84 L507.53 497.64 L506.99 499.44 L506.43 501.24 L505.83 503.02 L505.20 504.80 L504.54 506.57 L503.85 508.32 L503.13 510.07 L502.38 511.80 L501.60 513.51 L500.78 515.21 L499.94 516.89 L499.08 518.56 L498.18 520.20 L497.26 521.83 L496.31 523.43 L495.34 525.01 L494.34 526.56 L493.32 528.09 L492.27 529.60 L491.20 531.08 L490.11 532.53 L489.00 533.95 L487.86 535.34 L486.71 536.70 L485.54 538.02 L484.35 539.32 L483.14 540.58 L481.92 541.81 L480.68 543.00 L479.43 544.16 L478.16 545.27 L476.88 546.36 L475.58 547.40 L474.28 548.40 L472.97 549.36 L471.64 550.29 L470.31 551.17 L468.97 552.01 L467.62 552.81 L466.27 553.56 L464.91 554.27 L463.54 554.94 L462.18 555.56 L460.81 556.14 L459.44 556.67 L458.07 557.16 L456.71 557.60 L455.34 558.00 L453.97 558.35 L452.61 558.65 L451.26 558.91 L449.91 559.12 L448.56 559.28 L447.23 559.39 L445.90 559.46 L444.58 559.48 L443.27 559.45 L441.97 559.37 L440.68 559.25 L439.40 559.08 L438.14 558.86 L436.89 558.60 L435.66 558.28 L434.45 557.93 L433.25 557.52Z" fill="#9fdcff"/>
<g clip-path="url(#cGear)"><g  fill="none" stroke-width="1"><path d="M-1084.67 453.79L844.79 1794.60M-1053.89 439.05L875.57 1779.86M-1023.12 424.31L906.35 1765.11M-961.56 394.83L967.91 1735.63M-930.78 380.08L998.68 1720.89M-900.00 365.34L1029.46 1706.15M-869.23 350.60L1060.24 1691.40M-807.67 321.12L1121.80 1661.92M-776.89 306.37L1152.57 1647.18M-746.11 291.63L1183.35 1632.44M-715.34 276.89L1214.13 1617.69M-653.78 247.41L1275.69 1588.21M-623.00 232.66L1306.46 1573.47M-592.22 217.92L1337.24 1558.73M-561.45 203.18L1368.02 1543.98M-499.89 173.70L1429.58 1514.50M-469.11 158.95L1460.35 1499.76M-438.33 144.21L1491.13 1485.02M-407.56 129.47L1521.91 1470.27M-346.00 99.99L1583.47 1440.79M-315.22 85.24L1614.24 1426.05M-284.44 70.50L1645.02 1411.31M-253.67 55.76L1675.80 1396.56M-192.11 26.28L1737.36 1367.08M-161.33 11.53L1768.13 1352.34M-130.55 -3.21L1798.91 1337.60M-99.78 -17.95L1829.69 1322.85M-38.22 -47.43L1891.25 1293.37M-7.44 -62.18L1922.02 1278.63M23.34 -76.92L1952.80 1263.89M54.11 -91.66L1983.58 1249.14M115.67 -121.14L2045.14 1219.66M146.45 -135.89L2075.91 1204.92M177.23 -150.63L2106.69 1190.18M208.00 -165.37L2137.47 1175.43M269.56 -194.85L2199.03 1145.95M300.34 -209.60L2229.80 1131.21M331.12 -224.34L2260.58 1116.47M361.89 -239.08L2291.36 1101.72M423.45 -268.56L2352.92 1072.24M454.23 -283.31L2383.69 1057.50M485.01 -298.05L2414.47 1042.76M515.78 -312.79L2445.25 1028.01M577.34 -342.27L2506.81 998.53M608.12 -357.02L2537.58 983.79M638.90 -371.76L2568.36 969.05M669.67 -386.50L2599.14 954.30M731.23 -415.98L2660.70 924.82M762.01 -430.73L2691.47 910.08M792.79 -445.47L2722.25 895.34M823.56 -460.21L2753.03 880.59M885.12 -489.69L2814.59 851.11M915.90 -504.44L2845.36 836.37M946.68 -519.18L2876.14 821.63M977.45 -533.92L2906.92 806.88M1039.01 -563.40L2968.48 777.40M1069.79 -578.15L2999.25 762.66M1100.57 -592.89L3030.03 747.92M1131.34 -607.63L3060.81 733.17M1192.90 -637.11L3122.37 703.69M1223.68 -651.86L3153.14 688.95M-1084.67 453.79L1223.68 -651.86M-1027.08 493.82L1281.27 -611.83M-998.28 513.83L1310.07 -591.82M-969.48 533.84L1338.87 -571.81M-940.68 553.85L1367.67 -551.80M-883.09 593.88L1425.26 -511.77M-854.29 613.89L1454.06 -491.76M-825.49 633.90L1482.86 -471.75M-796.69 653.91L1511.66 -451.74M-739.10 693.94L1569.25 -411.71M-710.30 713.95L1598.05 -391.70M-681.50 733.96L1626.85 -371.69M-652.70 753.97L1655.65 -351.68M-595.11 794.00L1713.24 -311.65M-566.31 814.01L1742.04 -291.64M-537.51 834.02L1770.84 -271.63M-508.71 854.03L1799.64 -251.62M-451.12 894.06L1857.23 -211.59M-422.32 914.07L1886.03 -191.58M-393.52 934.08L1914.83 -171.57M-364.72 954.09L1943.63 -151.56M-307.13 994.12L2001.22 -111.53M-278.33 1014.13L2030.02 -91.52M-249.53 1034.14L2058.82 -71.51M-220.73 1054.15L2087.62 -51.50M-163.14 1094.18L2145.21 -11.47M-134.34 1114.19L2174.01 8.54M-105.54 1134.20L2202.81 28.55M-76.74 1154.21L2231.61 48.56M-19.15 1194.24L2289.20 88.59M9.65 1214.25L2318.00 108.60M38.45 1234.26L2346.80 128.61M67.25 1254.27L2375.60 148.62M124.84 1294.30L2433.19 188.65M153.64 1314.31L2461.99 208.66M182.44 1334.32L2490.79 228.67M211.24 1354.33L2519.59 248.68M268.83 1394.36L2577.18 288.71M297.63 1414.37L2605.98 308.72M326.43 1434.38L2634.78 328.73M355.23 1454.39L2663.58 348.74M412.82 1494.42L2721.17 388.77M441.62 1514.43L2749.97 408.78M470.42 1534.44L2778.77 428.79M499.22 1554.45L2807.57 448.80M556.81 1594.48L2865.16 488.83M585.61 1614.49L2893.96 508.84M614.41 1634.50L2922.76 528.85M643.21 1654.51L2951.56 548.86M700.80 1694.54L3009.15 588.89M729.60 1714.55L3037.95 608.90M758.40 1734.56L3066.75 628.91M787.20 1754.57L3095.55 648.92M844.79 1794.60L3153.14 688.95" stroke="rgba(0,0,0,0.04)"/><path d="M-992.34 409.57L937.13 1750.37M-838.45 335.86L1091.02 1676.66M-684.56 262.15L1244.91 1602.95M-530.67 188.44L1398.80 1529.24M-376.78 114.73L1552.69 1455.53M-69.00 -32.69L1860.47 1308.11M84.89 -106.40L2014.36 1234.40M238.78 -180.11L2168.25 1160.69M392.67 -253.82L2322.14 1086.98M546.56 -327.53L2476.03 1013.27M700.45 -401.24L2629.92 939.56M854.34 -474.95L2783.81 865.85M1008.23 -548.66L2937.70 792.14M1162.12 -622.37L3091.59 718.43M-1055.87 473.81L1252.48 -631.84M-911.88 573.87L1396.47 -531.78M-767.89 673.93L1540.46 -431.72M-623.90 773.99L1684.45 -331.66M-479.91 874.05L1828.44 -231.60M-335.92 974.11L1972.43 -131.54M-47.94 1174.23L2260.41 68.58M96.05 1274.29L2404.40 168.64M240.04 1374.35L2548.39 268.70M384.03 1474.41L2692.38 368.76M528.02 1574.47L2836.37 468.82M672.01 1674.53L2980.36 568.88M816.00 1774.59L3124.35 668.94" stroke="rgba(0,0,0,0.085)"/></g><path d="M-5089.75 -3341.01L6429.45 4663.79" stroke="rgba(255,90,90,0.496)" stroke-width="1.1" fill="none"/><path d="M-5485.75 3609.79L6825.45 -2287.01" stroke="rgba(80,80,255,0.496)" stroke-width="1.1" fill="none"/></g>
<path d="M686.30 662.42 L686.29 662.67 L686.28 662.93 L686.25 663.19 L686.21 663.44 L686.16 663.70 L686.09 663.95 L686.02 664.20 L685.93 664.45 L685.83 664.69 L685.72 664.94 L685.60 665.18 L685.47 665.42 L685.33 665.65 L685.18 665.89 L685.01 666.11 L684.84 666.34 L684.65 666.56 L684.46 666.78 L684.25 667.00 L684.04 667.21 L683.81 667.42 L683.57 667.62 L683.33 667.82 L683.07 668.01 L682.81 668.20 L682.53 668.38 L682.25 668.56 L681.96 668.74 L681.66 668.91 L681.35 669.07 L681.03 669.23 L680.71 669.39 L680.38 669.53 L680.04 669.68 L679.69 669.81 L679.33 669.94 L678.97 670.07 L678.60 670.19 L678.23 670.30 L677.85 670.40 L677.46 670.50 L677.07 670.60 L676.68 670.69 L676.27 670.77 L675.87 670.84 L675.46 670.91 L675.04 670.97 L674.62 671.02 L674.20 671.07 L673.77 671.11 L673.35 671.15 L672.91 671.17 L672.48 671.19 L672.04 671.21 L671.61 671.21 L671.17 671.22 L670.73 671.21 L670.28 671.19 L669.84 671.17 L669.40 671.15 L668.96 671.11 L668.52 671.07 L668.07 671.03 L667.63 670.97 L667.19 670.91 L666.76 670.84 L666.32 670.77 L665.89 670.69 L665.45 670.60 L665.03 670.51 L664.60 670.41 L664.18 670.30 L663.76 670.19 L663.34 670.07 L662.93 669.95 L662.53 669.82 L662.12 669.68 L661.73 669.54 L661.34 669.39 L660.95 669.24 L660.57 669.08 L660.20 668.92 L659.83 668.75 L659.47 668.57 L659.11 668.39 L658.76 668.21 L658.42 668.02 L658.09 667.83 L657.77 667.63 L657.45 667.42 L657.14 667.22 L656.84 667.01 L656.55 666.79 L656.27 666.57 L655.99 666.35 L655.73 666.12 L655.47 665.90 L655.23 665.66 L654.99 665.43 L654.76 665.19 L654.55 664.95 L654.34 664.70 L654.15 664.46 L653.96 664.21 L653.79 663.96 L653.62 663.71 L653.47 663.45 L653.33 663.20 L653.20 662.94 L653.08 662.69 L652.97 662.43 L652.87 662.17 L652.78 661.91 L652.71 661.65 L652.64 661.39 L652.59 661.12 L652.55 660.86 L652.52 660.60 L652.51 660.34 L652.50 660.08 L652.51 659.83 L652.52 659.57 L652.55 659.31 L652.59 659.06 L652.64 658.80 L652.71 658.55 L652.78 658.30 L652.87 658.05 L652.97 657.81 L653.08 657.56 L653.20 657.32 L653.33 657.08 L653.47 656.85 L653.62 656.61 L653.79 656.39 L653.96 656.16 L654.15 655.94 L654.34 655.72 L654.55 655.50 L654.76 655.29 L654.99 655.08 L655.23 654.88 L655.47 654.68 L655.73 654.49 L655.99 654.30 L656.27 654.12 L656.55 653.94 L656.84 653.76 L657.14 653.59 L657.45 653.43 L657.77 653.27 L658.09 653.11 L658.42 652.97 L658.76 652.82 L659.11 652.69 L659.47 652.56 L659.83 652.43 L660.20 652.31 L660.57 652.20 L660.95 652.10 L661.34 652.00 L661.73 651.90 L662.12 651.81 L662.53 651.73 L662.93 651.66 L663.34 651.59 L663.76 651.53 L664.18 651.48 L664.60 651.43 L665.03 651.39 L665.45 651.35 L665.89 651.33 L666.32 651.31 L666.76 651.29 L667.19 651.29 L667.63 651.28 L668.07 651.29 L668.52 651.31 L668.96 651.33 L669.40 651.35 L669.84 651.39 L670.28 651.43 L670.73 651.47 L671.17 651.53 L671.61 651.59 L672.04 651.66 L672.48 651.73 L672.91 651.81 L673.35 651.90 L673.77 651.99 L674.20 652.09 L674.62 652.20 L675.04 652.31 L675.46 652.43 L675.87 652.55 L676.27 652.68 L676.68 652.82 L677.07 652.96 L677.46 653.11 L677.85 653.26 L678.23 653.42 L678.60 653.58 L678.97 653.75 L679.33 653.93 L679.69 654.11 L680.04 654.29 L680.38 654.48 L680.71 654.67 L681.03 654.87 L681.35 655.08 L681.66 655.28 L681.96 655.49 L682.25 655.71 L682.53 655.93 L682.81 656.15 L683.07 656.38 L683.33 656.60 L683.57 656.84 L683.81 657.07 L684.04 657.31 L684.25 657.55 L684.46 657.80 L684.65 658.04 L684.84 658.29 L685.01 658.54 L685.18 658.79 L685.33 659.05 L685.47 659.30 L685.60 659.56 L685.72 659.81 L685.83 660.07 L685.93 660.33 L686.02 660.59 L686.09 660.85 L686.16 661.11 L686.21 661.38 L686.25 661.64 L686.28 661.90 L686.29 662.16Z" fill="none" stroke="rgba(60,85,100,0.5)" stroke-width="6.5" filter="url(#blur1)"/>
<g mask="url(#mPin)">
<path d="M1052.60 760.84 L1052.47 766.81 L1052.06 772.76 L1051.40 778.69 L1050.46 784.59 L1049.26 790.45 L1047.79 796.27 L1046.06 802.05 L1044.07 807.78 L1041.81 813.47 L1039.30 819.09 L1036.52 824.66 L1033.49 830.17 L1030.21 835.61 L1026.67 840.98 L1022.88 846.28 L1018.85 851.50 L1014.57 856.64 L1010.05 861.70 L1005.29 866.67 L1000.30 871.55 L995.07 876.33 L989.62 881.01 L983.94 885.60 L978.04 890.08 L971.93 894.45 L965.60 898.72 L959.06 902.87 L952.32 906.91 L945.39 910.82 L938.25 914.62 L930.93 918.29 L923.43 921.83 L915.74 925.25 L907.89 928.54 L899.86 931.69 L891.67 934.70 L883.32 937.58 L874.83 940.32 L866.18 942.92 L857.40 945.37 L848.48 947.68 L839.44 949.85 L830.27 951.86 L820.99 953.73 L811.60 955.44 L802.11 957.00 L792.52 958.41 L782.84 959.67 L773.08 960.77 L763.24 961.72 L753.34 962.51 L743.37 963.14 L733.34 963.62 L723.27 963.94 L713.16 964.10 L703.01 964.10 L692.83 963.95 L682.63 963.63 L672.42 963.16 L662.20 962.54 L651.98 961.75 L641.77 960.81 L631.57 959.72 L621.39 958.47 L611.24 957.07 L601.13 955.51 L591.06 953.80 L581.03 951.94 L571.06 949.93 L561.16 947.78 L551.32 945.47 L541.56 943.02 L531.88 940.43 L522.29 937.70 L512.80 934.83 L503.41 931.81 L494.13 928.67 L484.96 925.39 L475.92 921.98 L467.00 918.44 L458.22 914.77 L449.57 910.98 L441.08 907.07 L432.73 903.04 L424.54 898.89 L416.51 894.63 L408.66 890.26 L400.97 885.79 L393.47 881.21 L386.15 876.52 L379.01 871.75 L372.08 866.87 L365.34 861.91 L358.80 856.85 L352.47 851.72 L346.36 846.50 L340.46 841.20 L334.78 835.83 L329.33 830.40 L324.10 824.89 L319.11 819.32 L314.35 813.70 L309.83 808.02 L305.55 802.29 L301.52 796.51 L297.73 790.69 L294.19 784.83 L290.91 778.94 L287.88 773.01 L285.10 767.06 L282.59 761.08 L280.33 755.09 L278.34 749.08 L276.61 743.06 L275.14 737.04 L273.94 731.01 L273.00 724.99 L272.34 718.97 L271.93 712.96 L271.80 706.96 L271.93 700.99 L272.34 695.04 L273.00 689.11 L273.94 683.21 L275.14 677.35 L276.61 671.53 L278.34 665.75 L280.33 660.02 L282.59 654.33 L285.10 648.71 L287.88 643.14 L290.91 637.63 L294.19 632.19 L297.73 626.82 L301.52 621.52 L305.55 616.30 L309.83 611.16 L314.35 606.10 L319.11 601.13 L324.10 596.25 L329.33 591.47 L334.78 586.79 L340.46 582.20 L346.36 577.72 L352.47 573.35 L358.80 569.08 L365.34 564.93 L372.08 560.89 L379.01 556.98 L386.15 553.18 L393.47 549.51 L400.97 545.97 L408.66 542.55 L416.51 539.26 L424.54 536.11 L432.73 533.10 L441.08 530.22 L449.57 527.48 L458.22 524.88 L467.00 522.43 L475.92 520.12 L484.96 517.95 L494.13 515.94 L503.41 514.07 L512.80 512.36 L522.29 510.80 L531.88 509.39 L541.56 508.13 L551.32 507.03 L561.16 506.08 L571.06 505.29 L581.03 504.66 L591.06 504.18 L601.13 503.86 L611.24 503.70 L621.39 503.70 L631.57 503.85 L641.77 504.17 L651.98 504.64 L662.20 505.26 L672.42 506.05 L682.63 506.99 L692.83 508.08 L703.01 509.33 L713.16 510.73 L723.27 512.29 L733.34 514.00 L743.37 515.86 L753.34 517.87 L763.24 520.02 L773.08 522.33 L782.84 524.78 L792.52 527.37 L802.11 530.10 L811.60 532.97 L820.99 535.99 L830.27 539.13 L839.44 542.41 L848.48 545.82 L857.40 549.36 L866.18 553.03 L874.83 556.82 L883.32 560.73 L891.67 564.76 L899.86 568.91 L907.89 573.17 L915.74 577.54 L923.43 582.01 L930.93 586.59 L938.25 591.28 L945.39 596.05 L952.32 600.93 L959.06 605.89 L965.60 610.95 L971.93 616.08 L978.04 621.30 L983.94 626.60 L989.62 631.97 L995.07 637.40 L1000.30 642.91 L1005.29 648.48 L1010.05 654.10 L1014.57 659.78 L1018.85 665.51 L1022.88 671.29 L1026.67 677.11 L1030.21 682.97 L1033.49 688.86 L1036.52 694.79 L1039.30 700.74 L1041.81 706.72 L1044.07 712.71 L1046.06 718.72 L1047.79 724.74 L1049.26 730.76 L1050.46 736.79 L1051.40 742.81 L1052.06 748.83 L1052.47 754.84Z" fill="none" stroke="#262626" stroke-width="1.0" />
<path d="M1022.80 800.00 L1022.68 805.57 L1022.30 811.13 L1021.68 816.66 L1020.80 822.17 L1019.68 827.64 L1018.31 833.07 L1016.70 838.47 L1014.84 843.82 L1012.73 849.13 L1010.38 854.38 L1007.79 859.58 L1004.96 864.72 L1001.90 869.80 L998.59 874.81 L995.06 879.76 L991.29 884.63 L987.30 889.43 L983.08 894.15 L978.63 898.79 L973.97 903.35 L969.09 907.81 L964.00 912.19 L958.70 916.47 L953.20 920.65 L947.49 924.73 L941.58 928.71 L935.48 932.59 L929.19 936.36 L922.71 940.01 L916.06 943.55 L909.22 946.98 L902.21 950.29 L895.04 953.48 L887.71 956.55 L880.21 959.49 L872.57 962.31 L864.78 964.99 L856.84 967.55 L848.77 969.98 L840.58 972.27 L832.25 974.42 L823.81 976.44 L815.25 978.32 L806.59 980.06 L797.82 981.67 L788.96 983.12 L780.01 984.44 L770.97 985.61 L761.86 986.64 L752.68 987.52 L743.43 988.26 L734.12 988.85 L724.77 989.30 L715.36 989.60 L705.92 989.75 L696.45 989.75 L686.94 989.60 L677.42 989.31 L667.89 988.87 L658.35 988.29 L648.81 987.56 L639.28 986.68 L629.76 985.66 L620.25 984.49 L610.78 983.18 L601.34 981.73 L591.93 980.13 L582.58 978.40 L573.27 976.52 L564.02 974.51 L554.84 972.36 L545.73 970.07 L536.69 967.65 L527.74 965.10 L518.88 962.42 L510.11 959.61 L501.45 956.67 L492.89 953.61 L484.45 950.43 L476.13 947.12 L467.93 943.70 L459.86 940.16 L451.92 936.51 L444.13 932.75 L436.49 928.88 L428.99 924.90 L421.66 920.82 L414.49 916.64 L407.48 912.36 L400.64 907.99 L393.99 903.53 L387.51 898.98 L381.22 894.35 L375.12 889.63 L369.21 884.83 L363.50 879.96 L358.00 875.02 L352.70 870.01 L347.61 864.93 L342.73 859.79 L338.07 854.60 L333.62 849.35 L329.40 844.04 L325.41 838.69 L321.64 833.30 L318.11 827.87 L314.80 822.39 L311.74 816.89 L308.91 811.36 L306.32 805.80 L303.97 800.23 L301.86 794.63 L300.00 789.02 L298.39 783.40 L297.02 777.78 L295.90 772.15 L295.02 766.53 L294.40 760.91 L294.02 755.30 L293.90 749.70 L294.02 744.13 L294.40 738.57 L295.02 733.04 L295.90 727.53 L297.02 722.06 L298.39 716.63 L300.00 711.23 L301.86 705.88 L303.97 700.57 L306.32 695.32 L308.91 690.12 L311.74 684.98 L314.80 679.90 L318.11 674.89 L321.64 669.94 L325.41 665.07 L329.40 660.27 L333.62 655.55 L338.07 650.91 L342.73 646.35 L347.61 641.89 L352.70 637.51 L358.00 633.23 L363.50 629.05 L369.21 624.97 L375.12 620.99 L381.22 617.11 L387.51 613.34 L393.99 609.69 L400.64 606.15 L407.48 602.72 L414.49 599.41 L421.66 596.22 L428.99 593.15 L436.49 590.21 L444.13 587.39 L451.92 584.71 L459.86 582.15 L467.93 579.72 L476.12 577.43 L484.45 575.28 L492.89 573.26 L501.45 571.38 L510.11 569.64 L518.88 568.03 L527.74 566.58 L536.69 565.26 L545.73 564.09 L554.84 563.06 L564.02 562.18 L573.27 561.44 L582.58 560.85 L591.93 560.40 L601.34 560.10 L610.78 559.95 L620.25 559.95 L629.76 560.10 L639.28 560.39 L648.81 560.83 L658.35 561.41 L667.89 562.14 L677.42 563.02 L686.94 564.04 L696.45 565.21 L705.92 566.52 L715.36 567.97 L724.77 569.57 L734.12 571.30 L743.43 573.18 L752.68 575.19 L761.86 577.34 L770.97 579.63 L780.01 582.05 L788.96 584.60 L797.82 587.28 L806.59 590.09 L815.25 593.03 L823.81 596.09 L832.25 599.27 L840.57 602.58 L848.77 606.00 L856.84 609.54 L864.78 613.19 L872.57 616.95 L880.21 620.82 L887.71 624.80 L895.04 628.88 L902.21 633.06 L909.22 637.34 L916.06 641.71 L922.71 646.17 L929.19 650.72 L935.48 655.35 L941.58 660.07 L947.49 664.87 L953.20 669.74 L958.70 674.68 L964.00 679.69 L969.09 684.77 L973.97 689.91 L978.63 695.10 L983.08 700.35 L987.30 705.66 L991.29 711.01 L995.06 716.40 L998.59 721.83 L1001.90 727.31 L1004.96 732.81 L1007.79 738.34 L1010.38 743.90 L1012.73 749.47 L1014.84 755.07 L1016.70 760.68 L1018.31 766.30 L1019.68 771.92 L1020.80 777.55 L1021.68 783.17 L1022.30 788.79 L1022.68 794.40Z" fill="none" stroke="#4a5a64" stroke-width="1.0" />
<path d="M964.20 721.07 L964.10 725.63 L963.79 730.18 L963.28 734.70 L962.57 739.20 L961.65 743.68 L960.53 748.12 L959.21 752.54 L957.69 756.92 L955.96 761.25 L954.04 765.55 L951.92 769.80 L949.61 774.01 L947.10 778.16 L944.40 782.27 L941.51 786.31 L938.43 790.30 L935.16 794.22 L931.71 798.08 L928.08 801.88 L924.26 805.60 L920.27 809.26 L916.11 812.83 L911.77 816.33 L907.27 819.76 L902.60 823.10 L897.77 826.35 L892.78 829.52 L887.63 832.60 L882.33 835.59 L876.89 838.49 L871.30 841.29 L865.57 844.00 L859.70 846.61 L853.70 849.12 L847.57 851.53 L841.32 853.83 L834.95 856.03 L828.46 858.12 L821.86 860.10 L815.15 861.98 L808.34 863.74 L801.43 865.39 L794.44 866.93 L787.35 868.35 L780.18 869.66 L772.93 870.86 L765.61 871.93 L758.22 872.89 L750.76 873.73 L743.25 874.46 L735.69 875.06 L728.08 875.54 L720.42 875.91 L712.73 876.15 L705.01 876.27 L697.26 876.28 L689.49 876.16 L681.70 875.92 L673.90 875.56 L666.10 875.08 L658.30 874.48 L650.50 873.77 L642.71 872.93 L634.94 871.98 L627.19 870.90 L619.47 869.72 L611.78 868.41 L604.12 866.99 L596.51 865.46 L588.95 863.81 L581.44 862.05 L573.98 860.18 L566.59 858.20 L559.27 856.12 L552.02 853.92 L544.85 851.62 L537.76 849.22 L530.77 846.72 L523.86 844.11 L517.05 841.41 L510.34 838.61 L503.74 835.71 L497.25 832.73 L490.88 829.65 L484.63 826.48 L478.50 823.23 L472.50 819.90 L466.63 816.48 L460.90 812.98 L455.31 809.40 L449.87 805.76 L444.57 802.03 L439.42 798.24 L434.43 794.38 L429.60 790.46 L424.93 786.48 L420.43 782.43 L416.09 778.33 L411.93 774.18 L407.94 769.98 L404.12 765.73 L400.49 761.43 L397.04 757.10 L393.77 752.72 L390.69 748.31 L387.80 743.86 L385.10 739.39 L382.59 734.89 L380.28 730.36 L378.16 725.82 L376.24 721.26 L374.51 716.68 L372.99 712.09 L371.67 707.50 L370.55 702.90 L369.63 698.29 L368.92 693.69 L368.41 689.10 L368.10 684.51 L368.00 679.93 L368.10 675.37 L368.41 670.82 L368.92 666.30 L369.63 661.80 L370.55 657.32 L371.67 652.88 L372.99 648.46 L374.51 644.08 L376.24 639.75 L378.16 635.45 L380.28 631.20 L382.59 626.99 L385.10 622.84 L387.80 618.73 L390.69 614.69 L393.77 610.70 L397.04 606.78 L400.49 602.92 L404.12 599.12 L407.94 595.40 L411.93 591.74 L416.09 588.17 L420.43 584.67 L424.93 581.24 L429.60 577.90 L434.43 574.65 L439.42 571.48 L444.57 568.40 L449.87 565.41 L455.31 562.51 L460.90 559.71 L466.63 557.00 L472.50 554.39 L478.50 551.88 L484.63 549.47 L490.88 547.17 L497.25 544.97 L503.74 542.88 L510.34 540.90 L517.05 539.02 L523.86 537.26 L530.77 535.61 L537.76 534.07 L544.85 532.65 L552.02 531.34 L559.27 530.14 L566.59 529.07 L573.98 528.11 L581.44 527.27 L588.95 526.54 L596.51 525.94 L604.12 525.46 L611.78 525.09 L619.47 524.85 L627.19 524.73 L634.94 524.72 L642.71 524.84 L650.50 525.08 L658.30 525.44 L666.10 525.92 L673.90 526.52 L681.70 527.23 L689.49 528.07 L697.26 529.02 L705.01 530.10 L712.73 531.28 L720.42 532.59 L728.08 534.01 L735.69 535.54 L743.25 537.19 L750.76 538.95 L758.22 540.82 L765.61 542.80 L772.93 544.88 L780.18 547.08 L787.35 549.38 L794.44 551.78 L801.43 554.28 L808.34 556.89 L815.15 559.59 L821.86 562.39 L828.46 565.29 L834.95 568.27 L841.32 571.35 L847.57 574.52 L853.70 577.77 L859.70 581.10 L865.57 584.52 L871.30 588.02 L876.89 591.60 L882.33 595.24 L887.63 598.97 L892.78 602.76 L897.77 606.62 L902.60 610.54 L907.27 614.52 L911.77 618.57 L916.11 622.67 L920.27 626.82 L924.26 631.02 L928.08 635.27 L931.71 639.57 L935.16 643.90 L938.43 648.28 L941.51 652.69 L944.40 657.14 L947.10 661.61 L949.61 666.11 L951.92 670.64 L954.04 675.18 L955.96 679.74 L957.69 684.32 L959.21 688.91 L960.53 693.50 L961.65 698.10 L962.57 702.71 L963.28 707.31 L963.79 711.90 L964.10 716.49Z" fill="none" stroke="#262626" stroke-width="1.0" />
<path d="M940.80 751.24 L940.70 755.50 L940.42 759.74 L939.94 763.96 L939.28 768.16 L938.42 772.34 L937.38 776.49 L936.14 780.61 L934.72 784.69 L933.11 788.74 L931.32 792.75 L929.35 796.72 L927.19 800.64 L924.85 804.52 L922.33 808.34 L919.63 812.12 L916.75 815.84 L913.70 819.50 L910.48 823.10 L907.09 826.64 L903.53 830.12 L899.81 833.53 L895.93 836.87 L891.88 840.13 L887.68 843.32 L883.32 846.44 L878.81 849.48 L874.16 852.44 L869.36 855.31 L864.41 858.10 L859.33 860.81 L854.12 863.42 L848.77 865.95 L843.29 868.38 L837.70 870.72 L831.98 872.97 L826.14 875.12 L820.20 877.17 L814.14 879.12 L807.98 880.97 L801.73 882.72 L795.37 884.36 L788.93 885.91 L782.40 887.34 L775.78 888.67 L769.09 889.89 L762.33 891.01 L755.50 892.01 L748.60 892.91 L741.65 893.69 L734.64 894.36 L727.58 894.93 L720.48 895.38 L713.34 895.72 L706.16 895.94 L698.96 896.06 L691.72 896.06 L684.47 895.95 L677.21 895.73 L669.93 895.39 L662.65 894.95 L655.37 894.39 L648.09 893.72 L640.83 892.94 L633.58 892.05 L626.34 891.05 L619.14 889.94 L611.96 888.72 L604.82 887.40 L597.72 885.97 L590.66 884.43 L583.65 882.79 L576.70 881.05 L569.80 879.20 L562.97 877.25 L556.21 875.20 L549.52 873.06 L542.90 870.82 L536.37 868.48 L529.93 866.05 L523.58 863.53 L517.32 860.92 L511.16 858.22 L505.10 855.43 L499.16 852.56 L493.32 849.60 L487.60 846.57 L482.01 843.46 L476.53 840.27 L471.18 837.00 L465.97 833.67 L460.89 830.26 L455.94 826.79 L451.14 823.25 L446.49 819.65 L441.98 815.99 L437.62 812.27 L433.42 808.50 L429.37 804.68 L425.49 800.80 L421.77 796.88 L418.21 792.91 L414.82 788.91 L411.60 784.86 L408.55 780.77 L405.67 776.66 L402.97 772.51 L400.45 768.34 L398.11 764.14 L395.95 759.92 L393.98 755.67 L392.19 751.42 L390.58 747.15 L389.16 742.87 L387.92 738.58 L386.88 734.29 L386.02 729.99 L385.36 725.70 L384.88 721.41 L384.60 717.13 L384.50 712.86 L384.60 708.60 L384.88 704.36 L385.36 700.14 L386.02 695.94 L386.88 691.76 L387.92 687.61 L389.16 683.49 L390.58 679.41 L392.19 675.36 L393.98 671.35 L395.95 667.38 L398.11 663.46 L400.45 659.58 L402.97 655.76 L405.67 651.98 L408.55 648.26 L411.60 644.60 L414.82 641.00 L418.21 637.46 L421.77 633.98 L425.49 630.57 L429.37 627.23 L433.42 623.97 L437.62 620.78 L441.98 617.66 L446.49 614.62 L451.14 611.66 L455.94 608.79 L460.89 606.00 L465.97 603.29 L471.18 600.68 L476.53 598.15 L482.01 595.72 L487.60 593.38 L493.32 591.13 L499.16 588.98 L505.10 586.93 L511.16 584.98 L517.32 583.13 L523.57 581.38 L529.93 579.74 L536.37 578.19 L542.90 576.76 L549.52 575.43 L556.21 574.21 L562.97 573.09 L569.80 572.09 L576.70 571.19 L583.65 570.41 L590.66 569.74 L597.72 569.17 L604.82 568.72 L611.96 568.38 L619.14 568.16 L626.34 568.04 L633.58 568.04 L640.83 568.15 L648.09 568.37 L655.37 568.71 L662.65 569.15 L669.93 569.71 L677.21 570.38 L684.47 571.16 L691.72 572.05 L698.96 573.05 L706.16 574.16 L713.34 575.38 L720.48 576.70 L727.58 578.13 L734.64 579.67 L741.65 581.31 L748.60 583.05 L755.50 584.90 L762.33 586.85 L769.09 588.90 L775.78 591.04 L782.40 593.28 L788.93 595.62 L795.37 598.05 L801.72 600.57 L807.98 603.18 L814.14 605.88 L820.20 608.67 L826.14 611.54 L831.98 614.50 L837.70 617.53 L843.29 620.64 L848.77 623.83 L854.12 627.10 L859.33 630.43 L864.41 633.84 L869.36 637.31 L874.16 640.85 L878.81 644.45 L883.32 648.11 L887.68 651.83 L891.88 655.60 L895.93 659.42 L899.81 663.30 L903.53 667.22 L907.09 671.19 L910.48 675.19 L913.70 679.24 L916.75 683.33 L919.63 687.44 L922.33 691.59 L924.85 695.76 L927.19 699.96 L929.35 704.18 L931.32 708.43 L933.11 712.68 L934.72 716.95 L936.14 721.23 L937.38 725.52 L938.42 729.81 L939.28 734.11 L939.94 738.40 L940.42 742.69 L940.70 746.97Z" fill="none" stroke="#262626" stroke-width="1.0" />
<g clip-path="url(#cE5)"><path d="M927.20 768.79 L927.11 772.87 L926.83 776.94 L926.38 780.98 L925.74 785.01 L924.92 789.01 L923.92 792.98 L922.74 796.93 L921.38 800.84 L919.84 804.72 L918.12 808.57 L916.22 812.37 L914.15 816.13 L911.91 819.84 L909.50 823.51 L906.91 827.13 L904.16 830.69 L901.23 834.20 L898.15 837.66 L894.90 841.05 L891.49 844.38 L887.92 847.64 L884.20 850.84 L880.32 853.97 L876.29 857.03 L872.12 860.02 L867.80 862.93 L863.34 865.77 L858.74 868.52 L854.00 871.20 L849.13 873.79 L844.13 876.29 L839.01 878.71 L833.76 881.05 L828.40 883.29 L822.92 885.44 L817.32 887.50 L811.63 889.47 L805.82 891.34 L799.92 893.11 L793.92 894.79 L787.84 896.36 L781.66 897.84 L775.40 899.22 L769.07 900.49 L762.65 901.66 L756.17 902.73 L749.63 903.69 L743.02 904.55 L736.35 905.30 L729.64 905.95 L722.87 906.48 L716.07 906.92 L709.22 907.24 L702.35 907.46 L695.44 907.57 L688.51 907.57 L681.56 907.47 L674.60 907.25 L667.63 906.93 L660.65 906.50 L653.67 905.97 L646.70 905.33 L639.74 904.58 L632.79 903.73 L625.86 902.77 L618.95 901.71 L612.08 900.54 L605.23 899.27 L598.43 897.90 L591.66 896.43 L584.95 894.85 L578.28 893.18 L571.67 891.41 L565.13 889.55 L558.65 887.58 L552.23 885.53 L545.90 883.38 L539.64 881.14 L533.46 878.81 L527.38 876.40 L521.38 873.89 L515.48 871.30 L509.67 868.63 L503.98 865.88 L498.38 863.05 L492.90 860.14 L487.54 857.16 L482.29 854.10 L477.17 850.98 L472.17 847.78 L467.30 844.52 L462.56 841.19 L457.96 837.80 L453.50 834.35 L449.18 830.84 L445.01 827.28 L440.98 823.66 L437.10 820.00 L433.38 816.28 L429.81 812.53 L426.40 808.72 L423.15 804.88 L420.07 801.01 L417.14 797.09 L414.39 793.15 L411.80 789.17 L409.39 785.17 L407.15 781.15 L405.08 777.10 L403.18 773.04 L401.46 768.96 L399.92 764.87 L398.56 760.77 L397.38 756.66 L396.38 752.54 L395.56 748.43 L394.92 744.31 L394.47 740.20 L394.19 736.10 L394.10 732.01 L394.19 727.93 L394.47 723.86 L394.92 719.82 L395.56 715.79 L396.38 711.79 L397.38 707.82 L398.56 703.87 L399.92 699.96 L401.46 696.08 L403.18 692.23 L405.08 688.43 L407.15 684.67 L409.39 680.96 L411.80 677.29 L414.39 673.67 L417.14 670.11 L420.07 666.60 L423.15 663.14 L426.40 659.75 L429.81 656.42 L433.38 653.16 L437.10 649.96 L440.98 646.83 L445.01 643.77 L449.18 640.78 L453.50 637.87 L457.96 635.03 L462.56 632.28 L467.30 629.60 L472.17 627.01 L477.17 624.51 L482.29 622.09 L487.54 619.75 L492.90 617.51 L498.38 615.36 L503.98 613.30 L509.67 611.33 L515.48 609.46 L521.38 607.69 L527.37 606.01 L533.46 604.44 L539.64 602.96 L545.90 601.58 L552.23 600.31 L558.65 599.14 L565.13 598.07 L571.67 597.11 L578.28 596.25 L584.95 595.50 L591.66 594.85 L598.43 594.32 L605.23 593.88 L612.08 593.56 L618.95 593.34 L625.86 593.23 L632.79 593.23 L639.74 593.33 L646.70 593.55 L653.67 593.87 L660.65 594.30 L667.63 594.83 L674.60 595.47 L681.56 596.22 L688.51 597.07 L695.44 598.03 L702.35 599.09 L709.22 600.26 L716.07 601.53 L722.87 602.90 L729.64 604.37 L736.35 605.95 L743.02 607.62 L749.63 609.39 L756.17 611.25 L762.65 613.22 L769.07 615.27 L775.40 617.42 L781.66 619.66 L787.84 621.99 L793.92 624.40 L799.92 626.91 L805.82 629.50 L811.63 632.17 L817.32 634.92 L822.92 637.75 L828.40 640.66 L833.76 643.64 L839.01 646.70 L844.13 649.82 L849.13 653.02 L854.00 656.28 L858.74 659.61 L863.34 663.00 L867.80 666.45 L872.12 669.96 L876.29 673.52 L880.32 677.14 L884.20 680.80 L887.92 684.52 L891.49 688.27 L894.90 692.08 L898.15 695.92 L901.23 699.79 L904.16 703.71 L906.91 707.65 L909.50 711.63 L911.91 715.63 L914.15 719.65 L916.22 723.70 L918.12 727.76 L919.84 731.84 L921.38 735.93 L922.74 740.03 L923.92 744.14 L924.92 748.26 L925.74 752.37 L926.38 756.49 L926.83 760.60 L927.11 764.70Z" fill="none" stroke="#262626" stroke-width="1.0" /></g>
<path d="M702.80 752.40 L702.79 753.04 L702.74 753.68 L702.67 754.32 L702.57 754.95 L702.44 755.58 L702.28 756.21 L702.10 756.83 L701.88 757.45 L701.64 758.06 L701.37 758.67 L701.07 759.26 L700.74 759.86 L700.39 760.44 L700.01 761.02 L699.60 761.59 L699.17 762.15 L698.71 762.70 L698.22 763.25 L697.71 763.78 L697.17 764.31 L696.61 764.82 L696.02 765.33 L695.41 765.82 L694.78 766.30 L694.12 766.77 L693.44 767.23 L692.74 767.68 L692.01 768.11 L691.27 768.53 L690.50 768.94 L689.71 769.34 L688.90 769.72 L688.08 770.09 L687.23 770.44 L686.37 770.78 L685.49 771.10 L684.59 771.41 L683.67 771.71 L682.74 771.99 L681.80 772.25 L680.84 772.50 L679.87 772.73 L678.88 772.95 L677.88 773.15 L676.87 773.33 L675.85 773.50 L674.82 773.65 L673.78 773.79 L672.73 773.91 L671.67 774.01 L670.60 774.09 L669.53 774.16 L668.45 774.21 L667.37 774.25 L666.28 774.27 L665.19 774.27 L664.10 774.25 L663.00 774.22 L661.90 774.16 L660.80 774.10 L659.70 774.01 L658.60 773.91 L657.50 773.79 L656.41 773.66 L655.32 773.51 L654.23 773.34 L653.15 773.16 L652.07 772.96 L651.00 772.74 L649.93 772.51 L648.87 772.26 L647.82 772.00 L646.78 771.72 L645.75 771.43 L644.73 771.12 L643.72 770.79 L642.72 770.45 L641.73 770.10 L640.76 769.73 L639.80 769.35 L638.86 768.96 L637.93 768.55 L637.01 768.13 L636.11 767.70 L635.23 767.25 L634.37 766.79 L633.52 766.32 L632.70 765.84 L631.89 765.35 L631.10 764.84 L630.33 764.33 L629.59 763.81 L628.86 763.27 L628.16 762.73 L627.48 762.17 L626.82 761.61 L626.19 761.04 L625.58 760.47 L624.99 759.88 L624.43 759.29 L623.89 758.69 L623.38 758.08 L622.89 757.47 L622.43 756.86 L622.00 756.24 L621.59 755.61 L621.21 754.98 L620.86 754.35 L620.53 753.71 L620.23 753.07 L619.96 752.42 L619.72 751.78 L619.50 751.13 L619.32 750.49 L619.16 749.84 L619.03 749.19 L618.93 748.54 L618.86 747.89 L618.81 747.25 L618.80 746.60 L618.81 745.96 L618.86 745.32 L618.93 744.68 L619.03 744.05 L619.16 743.42 L619.32 742.79 L619.50 742.17 L619.72 741.55 L619.96 740.94 L620.23 740.33 L620.53 739.74 L620.86 739.14 L621.21 738.56 L621.59 737.98 L622.00 737.41 L622.43 736.85 L622.89 736.30 L623.38 735.75 L623.89 735.22 L624.43 734.69 L624.99 734.18 L625.58 733.67 L626.19 733.18 L626.82 732.70 L627.48 732.23 L628.16 731.77 L628.86 731.32 L629.59 730.89 L630.33 730.47 L631.10 730.06 L631.89 729.66 L632.70 729.28 L633.52 728.91 L634.37 728.56 L635.23 728.22 L636.11 727.90 L637.01 727.59 L637.93 727.29 L638.86 727.01 L639.80 726.75 L640.76 726.50 L641.73 726.27 L642.72 726.05 L643.72 725.85 L644.73 725.67 L645.75 725.50 L646.78 725.35 L647.82 725.21 L648.87 725.09 L649.93 724.99 L651.00 724.91 L652.07 724.84 L653.15 724.79 L654.23 724.75 L655.32 724.73 L656.41 724.73 L657.50 724.75 L658.60 724.78 L659.70 724.84 L660.80 724.90 L661.90 724.99 L663.00 725.09 L664.10 725.21 L665.19 725.34 L666.28 725.49 L667.37 725.66 L668.45 725.84 L669.53 726.04 L670.60 726.26 L671.67 726.49 L672.73 726.74 L673.78 727.00 L674.82 727.28 L675.85 727.57 L676.87 727.88 L677.88 728.21 L678.88 728.55 L679.87 728.90 L680.84 729.27 L681.80 729.65 L682.74 730.04 L683.67 730.45 L684.59 730.87 L685.49 731.30 L686.37 731.75 L687.23 732.21 L688.08 732.68 L688.90 733.16 L689.71 733.65 L690.50 734.16 L691.27 734.67 L692.01 735.19 L692.74 735.73 L693.44 736.27 L694.12 736.83 L694.78 737.39 L695.41 737.96 L696.02 738.53 L696.61 739.12 L697.17 739.71 L697.71 740.31 L698.22 740.92 L698.71 741.53 L699.17 742.14 L699.60 742.76 L700.01 743.39 L700.39 744.02 L700.74 744.65 L701.07 745.29 L701.37 745.93 L701.64 746.58 L701.88 747.22 L702.10 747.87 L702.28 748.51 L702.44 749.16 L702.57 749.81 L702.67 750.46 L702.74 751.11 L702.79 751.75Z" fill="none" stroke="#262626" stroke-width="1.0" />
<g clip-path="url(#cBore)"><path d="M698.30 795.30 L698.29 795.94 L698.24 796.58 L698.17 797.22 L698.07 797.85 L697.94 798.48 L697.78 799.11 L697.60 799.73 L697.38 800.35 L697.14 800.96 L696.87 801.57 L696.57 802.16 L696.24 802.76 L695.89 803.34 L695.51 803.92 L695.10 804.49 L694.67 805.05 L694.21 805.60 L693.72 806.15 L693.21 806.68 L692.67 807.21 L692.11 807.72 L691.52 808.23 L690.91 808.72 L690.28 809.20 L689.62 809.67 L688.94 810.13 L688.24 810.58 L687.51 811.01 L686.77 811.43 L686.00 811.84 L685.21 812.24 L684.40 812.62 L683.58 812.99 L682.73 813.34 L681.87 813.68 L680.99 814.00 L680.09 814.31 L679.17 814.61 L678.24 814.89 L677.30 815.15 L676.34 815.40 L675.37 815.63 L674.38 815.85 L673.38 816.05 L672.37 816.23 L671.35 816.40 L670.32 816.55 L669.28 816.69 L668.23 816.81 L667.17 816.91 L666.10 816.99 L665.03 817.06 L663.95 817.11 L662.87 817.15 L661.78 817.17 L660.69 817.17 L659.60 817.15 L658.50 817.12 L657.40 817.06 L656.30 817.00 L655.20 816.91 L654.10 816.81 L653.00 816.69 L651.91 816.56 L650.82 816.41 L649.73 816.24 L648.65 816.06 L647.57 815.86 L646.50 815.64 L645.43 815.41 L644.37 815.16 L643.32 814.90 L642.28 814.62 L641.25 814.33 L640.23 814.02 L639.22 813.69 L638.22 813.35 L637.23 813.00 L636.26 812.63 L635.30 812.25 L634.36 811.86 L633.43 811.45 L632.51 811.03 L631.61 810.60 L630.73 810.15 L629.87 809.69 L629.02 809.22 L628.20 808.74 L627.39 808.25 L626.60 807.74 L625.83 807.23 L625.09 806.71 L624.36 806.17 L623.66 805.63 L622.98 805.07 L622.32 804.51 L621.69 803.94 L621.08 803.37 L620.49 802.78 L619.93 802.19 L619.39 801.59 L618.88 800.98 L618.39 800.37 L617.93 799.76 L617.50 799.14 L617.09 798.51 L616.71 797.88 L616.36 797.25 L616.03 796.61 L615.73 795.97 L615.46 795.32 L615.22 794.68 L615.00 794.03 L614.82 793.39 L614.66 792.74 L614.53 792.09 L614.43 791.44 L614.36 790.79 L614.31 790.15 L614.30 789.50 L614.31 788.86 L614.36 788.22 L614.43 787.58 L614.53 786.95 L614.66 786.32 L614.82 785.69 L615.00 785.07 L615.22 784.45 L615.46 783.84 L615.73 783.23 L616.03 782.64 L616.36 782.04 L616.71 781.46 L617.09 780.88 L617.50 780.31 L617.93 779.75 L618.39 779.20 L618.88 778.65 L619.39 778.12 L619.93 777.59 L620.49 777.08 L621.08 776.57 L621.69 776.08 L622.32 775.60 L622.98 775.13 L623.66 774.67 L624.36 774.22 L625.09 773.79 L625.83 773.37 L626.60 772.96 L627.39 772.56 L628.20 772.18 L629.02 771.81 L629.87 771.46 L630.73 771.12 L631.61 770.80 L632.51 770.49 L633.43 770.19 L634.36 769.91 L635.30 769.65 L636.26 769.40 L637.23 769.17 L638.22 768.95 L639.22 768.75 L640.23 768.57 L641.25 768.40 L642.28 768.25 L643.32 768.11 L644.37 767.99 L645.43 767.89 L646.50 767.81 L647.57 767.74 L648.65 767.69 L649.73 767.65 L650.82 767.63 L651.91 767.63 L653.00 767.65 L654.10 767.68 L655.20 767.74 L656.30 767.80 L657.40 767.89 L658.50 767.99 L659.60 768.11 L660.69 768.24 L661.78 768.39 L662.87 768.56 L663.95 768.74 L665.03 768.94 L666.10 769.16 L667.17 769.39 L668.23 769.64 L669.28 769.90 L670.32 770.18 L671.35 770.47 L672.37 770.78 L673.38 771.11 L674.38 771.45 L675.37 771.80 L676.34 772.17 L677.30 772.55 L678.24 772.94 L679.17 773.35 L680.09 773.77 L680.99 774.20 L681.87 774.65 L682.73 775.11 L683.58 775.58 L684.40 776.06 L685.21 776.55 L686.00 777.06 L686.77 777.57 L687.51 778.09 L688.24 778.63 L688.94 779.17 L689.62 779.73 L690.28 780.29 L690.91 780.86 L691.52 781.43 L692.11 782.02 L692.67 782.61 L693.21 783.21 L693.72 783.82 L694.21 784.43 L694.67 785.04 L695.10 785.66 L695.51 786.29 L695.89 786.92 L696.24 787.55 L696.57 788.19 L696.87 788.83 L697.14 789.48 L697.38 790.12 L697.60 790.77 L697.78 791.41 L697.94 792.06 L698.07 792.71 L698.17 793.36 L698.24 794.01 L698.29 794.65Z" fill="none" stroke="#555" stroke-width="0.9" /></g>
<path d="M663.2 727.9L658.6 773.75" stroke="#444" stroke-width="2" fill="none"/>
<path d="M340.36 598.65 L338.01 597.51 L335.70 596.28 L333.43 594.96 L331.22 593.54 L329.05 592.04 L326.93 590.45 L324.86 588.77 L322.85 587.01 L320.90 585.16 L318.99 583.22 L317.15 581.21 L315.37 579.11 L313.64 576.93 L311.98 574.67 L310.38 572.34 L308.84 569.93 L307.37 567.45 L305.96 564.89 L304.62 562.27 L303.34 559.58 L302.13 556.82 L301.00 553.99 L299.93 551.11 L298.93 548.16 L298.01 545.16 L297.15 542.09 L296.37 538.98 L295.66 535.81 L295.03 532.59 L294.47 529.32 L293.98 526.01 L293.57 522.65 L293.23 519.26 L292.97 515.82 L292.78 512.35 L292.67 508.84 L292.63 505.30 L292.67 501.73 L292.79 498.14 L292.98 494.52 L293.24 490.88 L293.58 487.22 L294.00 483.54 L294.49 479.85 L295.05 476.15 L295.69 472.43 L296.40 468.71 L297.19 464.99 L298.05 461.26 L298.98 457.54 L299.98 453.82 L301.05 450.10 L302.19 446.40 L303.40 442.70 L304.67 439.02 L306.02 435.35 L307.43 431.71 L308.91 428.08 L310.45 424.48 L312.05 420.90 L313.72 417.36 L315.44 413.84 L317.23 410.36 L319.08 406.91 L320.98 403.50 L322.94 400.13 L324.95 396.80 L327.02 393.52 L329.14 390.29 L331.31 387.11 L333.53 383.97 L335.80 380.90 L338.11 377.87 L340.47 374.91 L342.87 372.01 L345.31 369.16 L347.79 366.38 L350.30 363.67 L352.86 361.03 L355.45 358.45 L358.07 355.95 L360.72 353.52 L363.40 351.16 L366.11 348.89 L368.84 346.68 L371.59 344.56 L374.37 342.52 L377.17 340.56 L379.98 338.69 L382.81 336.90 L385.65 335.19 L388.51 333.58 L391.37 332.05 L394.25 330.61 L397.13 329.26 L400.01 328.00 L402.89 326.84 L405.78 325.77 L408.66 324.79 L411.54 323.91 L414.41 323.12 L417.28 322.42 L420.13 321.83 L422.97 321.33 L425.80 320.92 L428.62 320.62 L431.41 320.41 L434.19 320.30 L436.94 320.28 L439.67 320.36 L442.38 320.54 L445.06 320.82 L447.71 321.20 L450.33 321.67 L452.91 322.24 L455.47 322.90 L457.98 323.66 L460.46 324.52 L462.90 325.47 L465.30 326.51 L467.65 327.65 L469.96 328.88 L472.23 330.20 L474.44 331.62 L476.61 333.12 L478.73 334.71 L480.80 336.39 L482.81 338.15 L484.76 340.00 L486.67 341.94 L488.51 343.95 L490.29 346.05 L492.02 348.23 L493.68 350.49 L495.28 352.82 L496.82 355.23 L498.29 357.71 L499.70 360.27 L501.04 362.89 L502.32 365.58 L503.53 368.34 L504.66 371.17 L505.73 374.05 L506.73 377.00 L507.65 380.00 L508.51 383.07 L509.29 386.18 L510.00 389.35 L510.63 392.57 L511.19 395.84 L511.68 399.15 L512.09 402.51 L512.43 405.90 L512.69 409.34 L512.88 412.81 L512.99 416.32 L513.03 419.86 L512.99 423.43 L512.87 427.02 L512.68 430.64 L512.42 434.28 L512.08 437.94 L511.66 441.62 L511.17 445.31 L510.61 449.01 L509.97 452.73 L509.26 456.45 L508.47 460.17 L507.61 463.90 L506.68 467.62 L505.68 471.34 L504.61 475.06 L503.47 478.76 L502.26 482.46 L500.99 486.14 L499.64 489.81 L498.23 493.45 L496.75 497.08 L495.21 500.68 L493.61 504.26 L491.94 507.80 L490.22 511.32 L488.43 514.80 L486.58 518.25 L484.68 521.66 L482.72 525.03 L480.71 528.36 L478.64 531.64 L476.52 534.87 L474.35 538.05 L472.13 541.19 L469.86 544.26 L467.55 547.29 L465.19 550.25 L462.79 553.15 L460.35 556.00 L457.87 558.78 L455.36 561.49 L452.80 564.13 L450.21 566.71 L447.59 569.21 L444.94 571.64 L442.26 574.00 L439.55 576.27 L436.82 578.48 L434.07 580.60 L431.29 582.64 L428.49 584.60 L425.68 586.47 L422.85 588.26 L420.01 589.97 L417.15 591.58 L414.29 593.11 L411.41 594.55 L408.53 595.90 L405.65 597.16 L402.77 598.32 L399.88 599.39 L397.00 600.37 L394.12 601.25 L391.25 602.04 L388.38 602.74 L385.53 603.33 L382.69 603.83 L379.86 604.24 L377.04 604.54 L374.25 604.75 L371.47 604.86 L368.72 604.88 L365.99 604.80 L363.28 604.62 L360.60 604.34 L357.95 603.96 L355.33 603.49 L352.75 602.92 L350.19 602.26 L347.68 601.50 L345.20 600.64 L342.76 599.69Z" fill="none" stroke="#262626" stroke-width="1.0" />
</g>
<path d="M423.03 600.56 L421.23 599.74 L419.46 598.86 L417.72 597.90 L416.02 596.87 L414.36 595.77 L412.73 594.60 L411.15 593.36 L409.60 592.06 L408.09 590.69 L406.62 589.26 L405.19 587.76 L403.81 586.20 L402.47 584.57 L401.18 582.89 L399.93 581.14 L398.73 579.34 L397.58 577.47 L396.47 575.56 L395.42 573.58 L394.41 571.56 L393.46 569.48 L392.55 567.35 L391.70 565.17 L390.90 562.94 L390.15 560.67 L389.46 558.35 L388.82 555.99 L388.24 553.59 L387.71 551.15 L387.24 548.67 L386.82 546.15 L386.45 543.60 L386.15 541.02 L385.90 538.40 L385.70 535.76 L385.56 533.08 L385.48 530.39 L385.46 527.66 L385.49 524.92 L385.58 522.15 L385.73 519.37 L385.93 516.57 L386.19 513.76 L386.50 510.93 L386.88 508.09 L387.30 505.25 L387.79 502.40 L388.32 499.54 L388.92 496.68 L389.56 493.82 L390.26 490.96 L391.02 488.10 L391.83 485.25 L392.68 482.40 L393.60 479.57 L394.56 476.74 L395.57 473.93 L396.63 471.13 L397.75 468.35 L398.91 465.59 L400.11 462.85 L401.37 460.13 L402.67 457.43 L404.01 454.76 L405.40 452.12 L406.84 449.51 L408.31 446.93 L409.83 444.38 L411.38 441.87 L412.98 439.40 L414.61 436.96 L416.28 434.56 L417.98 432.21 L419.72 429.90 L421.50 427.63 L423.30 425.41 L425.14 423.24 L427.00 421.11 L428.89 419.04 L430.82 417.02 L432.76 415.06 L434.73 413.15 L436.72 411.29 L438.74 409.49 L440.77 407.76 L442.83 406.08 L444.90 404.46 L446.99 402.91 L449.09 401.42 L451.20 399.99 L453.33 398.63 L455.47 397.34 L457.61 396.11 L459.77 394.95 L461.93 393.86 L464.09 392.84 L466.26 391.89 L468.42 391.01 L470.59 390.20 L472.76 389.46 L474.92 388.80 L477.08 388.21 L479.23 387.69 L481.37 387.25 L483.51 386.88 L485.64 386.59 L487.75 386.37 L489.85 386.22 L491.93 386.15 L494.00 386.16 L496.05 386.24 L498.09 386.39 L500.10 386.62 L502.09 386.92 L504.05 387.30 L506.00 387.75 L507.91 388.28 L509.80 388.88 L511.66 389.55 L513.49 390.30 L515.29 391.12 L517.06 392.00 L518.80 392.96 L520.50 393.99 L522.16 395.09 L523.79 396.26 L525.37 397.50 L526.92 398.80 L528.43 400.17 L529.90 401.60 L531.33 403.10 L532.71 404.66 L534.05 406.29 L535.34 407.97 L536.59 409.72 L537.79 411.52 L538.94 413.39 L540.05 415.30 L541.10 417.28 L542.11 419.30 L543.06 421.38 L543.97 423.51 L544.82 425.69 L545.62 427.92 L546.37 430.19 L547.06 432.51 L547.70 434.87 L548.28 437.27 L548.81 439.71 L549.28 442.19 L549.70 444.71 L550.07 447.26 L550.37 449.84 L550.62 452.46 L550.82 455.10 L550.96 457.78 L551.04 460.47 L551.06 463.20 L551.03 465.94 L550.94 468.71 L550.79 471.49 L550.59 474.29 L550.33 477.10 L550.02 479.93 L549.64 482.77 L549.22 485.61 L548.73 488.46 L548.20 491.32 L547.60 494.18 L546.96 497.04 L546.26 499.90 L545.50 502.76 L544.69 505.61 L543.84 508.46 L542.92 511.29 L541.96 514.12 L540.95 516.93 L539.89 519.73 L538.77 522.51 L537.61 525.27 L536.41 528.01 L535.15 530.73 L533.85 533.43 L532.51 536.10 L531.12 538.74 L529.68 541.35 L528.21 543.93 L526.69 546.48 L525.14 548.99 L523.54 551.46 L521.91 553.90 L520.24 556.30 L518.54 558.65 L516.80 560.96 L515.02 563.23 L513.22 565.45 L511.38 567.62 L509.52 569.75 L507.63 571.82 L505.70 573.84 L503.76 575.80 L501.79 577.71 L499.80 579.57 L497.78 581.37 L495.75 583.10 L493.69 584.78 L491.62 586.40 L489.53 587.95 L487.43 589.44 L485.32 590.87 L483.19 592.23 L481.05 593.52 L478.91 594.75 L476.75 595.91 L474.59 597.00 L472.43 598.02 L470.26 598.97 L468.10 599.85 L465.93 600.66 L463.76 601.40 L461.60 602.06 L459.44 602.65 L457.29 603.17 L455.15 603.61 L453.01 603.98 L450.88 604.27 L448.77 604.49 L446.67 604.64 L444.59 604.71 L442.52 604.70 L440.47 604.62 L438.43 604.47 L436.42 604.24 L434.43 603.94 L432.47 603.56 L430.52 603.11 L428.61 602.58 L426.72 601.98 L424.86 601.31Z" fill="none" stroke="#262626" stroke-width="1.0" />
<path d="M432.06 557.07 L430.90 556.57 L429.76 556.03 L428.63 555.45 L427.53 554.81 L426.45 554.14 L425.39 553.42 L424.36 552.65 L423.34 551.85 L422.36 551.00 L421.39 550.11 L420.46 549.18 L419.55 548.21 L418.66 547.20 L417.81 546.15 L416.98 545.06 L416.18 543.93 L415.42 542.77 L414.68 541.57 L413.97 540.34 L413.29 539.07 L412.65 537.77 L412.03 536.43 L411.45 535.07 L410.90 533.67 L410.38 532.24 L409.90 530.79 L409.45 529.31 L409.04 527.80 L408.65 526.26 L408.31 524.70 L408.00 523.12 L407.72 521.51 L407.48 519.88 L407.27 518.23 L407.10 516.57 L406.97 514.88 L406.87 513.18 L406.80 511.46 L406.78 509.73 L406.78 507.98 L406.83 506.22 L406.91 504.45 L407.02 502.67 L407.17 500.89 L407.36 499.09 L407.58 497.29 L407.84 495.49 L408.13 493.68 L408.46 491.87 L408.82 490.05 L409.22 488.24 L409.65 486.43 L410.12 484.62 L410.61 482.82 L411.15 481.02 L411.71 479.22 L412.31 477.44 L412.94 475.66 L413.60 473.89 L414.29 472.14 L415.01 470.39 L415.76 468.66 L416.54 466.95 L417.36 465.25 L418.20 463.57 L419.06 461.90 L419.96 460.26 L420.88 458.63 L421.83 457.03 L422.80 455.45 L423.80 453.90 L424.82 452.37 L425.87 450.86 L426.94 449.38 L428.03 447.93 L429.14 446.51 L430.28 445.12 L431.43 443.76 L432.60 442.44 L433.79 441.14 L435.00 439.88 L436.22 438.65 L437.46 437.46 L438.71 436.30 L439.98 435.19 L441.26 434.10 L442.56 433.06 L443.86 432.06 L445.17 431.10 L446.50 430.17 L447.83 429.29 L449.17 428.45 L450.52 427.65 L451.87 426.90 L453.23 426.19 L454.60 425.52 L455.96 424.90 L457.33 424.32 L458.70 423.79 L460.07 423.30 L461.43 422.86 L462.80 422.46 L464.17 422.11 L465.53 421.81 L466.88 421.55 L468.23 421.34 L469.58 421.18 L470.91 421.07 L472.24 421.00 L473.56 420.98 L474.87 421.01 L476.17 421.09 L477.46 421.21 L478.74 421.38 L480.00 421.60 L481.25 421.86 L482.48 422.18 L483.69 422.53 L484.89 422.94 L486.08 423.39 L487.24 423.89 L488.38 424.43 L489.51 425.01 L490.61 425.65 L491.69 426.32 L492.75 427.04 L493.78 427.81 L494.80 428.61 L495.78 429.46 L496.75 430.35 L497.68 431.28 L498.59 432.25 L499.48 433.26 L500.33 434.31 L501.16 435.40 L501.96 436.53 L502.72 437.69 L503.46 438.89 L504.17 440.12 L504.85 441.39 L505.49 442.69 L506.11 444.03 L506.69 445.39 L507.24 446.79 L507.76 448.22 L508.24 449.67 L508.69 451.15 L509.10 452.66 L509.49 454.20 L509.83 455.76 L510.14 457.34 L510.42 458.95 L510.66 460.58 L510.87 462.23 L511.04 463.89 L511.17 465.58 L511.27 467.28 L511.34 469.00 L511.36 470.73 L511.36 472.48 L511.31 474.24 L511.23 476.01 L511.12 477.79 L510.97 479.57 L510.78 481.37 L510.56 483.17 L510.30 484.97 L510.01 486.78 L509.68 488.59 L509.32 490.41 L508.92 492.22 L508.49 494.03 L508.02 495.84 L507.53 497.64 L506.99 499.44 L506.43 501.24 L505.83 503.02 L505.20 504.80 L504.54 506.57 L503.85 508.32 L503.13 510.07 L502.38 511.80 L501.60 513.51 L500.78 515.21 L499.94 516.89 L499.08 518.56 L498.18 520.20 L497.26 521.83 L496.31 523.43 L495.34 525.01 L494.34 526.56 L493.32 528.09 L492.27 529.60 L491.20 531.08 L490.11 532.53 L489.00 533.95 L487.86 535.34 L486.71 536.70 L485.54 538.02 L484.35 539.32 L483.14 540.58 L481.92 541.81 L480.68 543.00 L479.43 544.16 L478.16 545.27 L476.88 546.36 L475.58 547.40 L474.28 548.40 L472.97 549.36 L471.64 550.29 L470.31 551.17 L468.97 552.01 L467.62 552.81 L466.27 553.56 L464.91 554.27 L463.54 554.94 L462.18 555.56 L460.81 556.14 L459.44 556.67 L458.07 557.16 L456.71 557.60 L455.34 558.00 L453.97 558.35 L452.61 558.65 L451.26 558.91 L449.91 559.12 L448.56 559.28 L447.23 559.39 L445.90 559.46 L444.58 559.48 L443.27 559.45 L441.97 559.37 L440.68 559.25 L439.40 559.08 L438.14 558.86 L436.89 558.60 L435.66 558.28 L434.45 557.93 L433.25 557.52Z" fill="none" stroke="#262626" stroke-width="1.0" />
<path d="M435.25 532.82 L434.46 532.48 L433.68 532.11 L432.91 531.71 L432.15 531.28 L431.42 530.82 L430.69 530.32 L429.99 529.80 L429.29 529.25 L428.62 528.67 L427.96 528.06 L427.32 527.43 L426.70 526.76 L426.10 526.07 L425.51 525.35 L424.95 524.61 L424.40 523.84 L423.88 523.05 L423.37 522.23 L422.89 521.38 L422.43 520.52 L421.99 519.63 L421.57 518.71 L421.17 517.78 L420.79 516.82 L420.44 515.85 L420.11 514.85 L419.81 513.84 L419.52 512.81 L419.26 511.76 L419.03 510.69 L418.81 509.61 L418.62 508.51 L418.46 507.40 L418.32 506.27 L418.20 505.13 L418.11 503.98 L418.04 502.81 L418.00 501.64 L417.98 500.45 L417.99 499.26 L418.02 498.06 L418.07 496.85 L418.15 495.63 L418.26 494.41 L418.38 493.18 L418.54 491.95 L418.71 490.72 L418.91 489.48 L419.14 488.24 L419.39 487.00 L419.66 485.76 L419.95 484.52 L420.27 483.29 L420.61 482.05 L420.97 480.82 L421.36 479.59 L421.77 478.37 L422.20 477.16 L422.65 475.95 L423.12 474.75 L423.62 473.56 L424.13 472.37 L424.67 471.20 L425.22 470.04 L425.80 468.89 L426.39 467.75 L427.00 466.62 L427.63 465.51 L428.28 464.42 L428.95 463.34 L429.63 462.27 L430.33 461.23 L431.04 460.20 L431.77 459.19 L432.52 458.20 L433.28 457.22 L434.05 456.27 L434.84 455.34 L435.64 454.44 L436.46 453.55 L437.28 452.69 L438.12 451.85 L438.96 451.03 L439.82 450.24 L440.69 449.48 L441.56 448.74 L442.45 448.02 L443.34 447.34 L444.24 446.68 L445.14 446.05 L446.05 445.44 L446.97 444.87 L447.89 444.32 L448.82 443.81 L449.75 443.32 L450.68 442.86 L451.61 442.44 L452.54 442.04 L453.48 441.68 L454.42 441.34 L455.35 441.04 L456.28 440.77 L457.22 440.53 L458.15 440.32 L459.07 440.15 L460.00 440.01 L460.92 439.90 L461.83 439.82 L462.74 439.77 L463.64 439.76 L464.54 439.78 L465.42 439.83 L466.30 439.91 L467.17 440.03 L468.04 440.18 L468.89 440.36 L469.73 440.57 L470.56 440.82 L471.38 441.09 L472.19 441.40 L472.98 441.74 L473.76 442.11 L474.53 442.51 L475.29 442.94 L476.02 443.40 L476.75 443.90 L477.45 444.42 L478.15 444.97 L478.82 445.55 L479.48 446.16 L480.12 446.79 L480.74 447.46 L481.34 448.15 L481.93 448.87 L482.49 449.61 L483.04 450.38 L483.56 451.17 L484.07 451.99 L484.55 452.84 L485.01 453.70 L485.45 454.59 L485.87 455.51 L486.27 456.44 L486.65 457.40 L487.00 458.37 L487.33 459.37 L487.63 460.38 L487.92 461.41 L488.18 462.46 L488.41 463.53 L488.63 464.61 L488.82 465.71 L488.98 466.82 L489.12 467.95 L489.24 469.09 L489.33 470.24 L489.40 471.41 L489.44 472.58 L489.46 473.77 L489.45 474.96 L489.42 476.16 L489.37 477.37 L489.29 478.59 L489.18 479.81 L489.06 481.04 L488.90 482.27 L488.73 483.50 L488.53 484.74 L488.30 485.98 L488.05 487.22 L487.78 488.46 L487.49 489.70 L487.17 490.93 L486.83 492.17 L486.47 493.40 L486.08 494.63 L485.67 495.85 L485.24 497.06 L484.79 498.27 L484.32 499.47 L483.82 500.66 L483.31 501.85 L482.77 503.02 L482.22 504.18 L481.64 505.33 L481.05 506.47 L480.44 507.60 L479.81 508.71 L479.16 509.80 L478.49 510.88 L477.81 511.95 L477.11 512.99 L476.40 514.02 L475.67 515.03 L474.92 516.02 L474.16 517.00 L473.39 517.95 L472.60 518.88 L471.80 519.78 L470.98 520.67 L470.16 521.53 L469.32 522.37 L468.48 523.19 L467.62 523.98 L466.75 524.74 L465.88 525.48 L464.99 526.20 L464.10 526.88 L463.20 527.54 L462.30 528.17 L461.39 528.78 L460.47 529.35 L459.55 529.90 L458.62 530.41 L457.69 530.90 L456.76 531.36 L455.83 531.78 L454.90 532.18 L453.96 532.54 L453.02 532.88 L452.09 533.18 L451.16 533.45 L450.22 533.69 L449.29 533.90 L448.37 534.07 L447.44 534.21 L446.52 534.32 L445.61 534.40 L444.70 534.45 L443.80 534.46 L442.90 534.44 L442.02 534.39 L441.14 534.31 L440.27 534.19 L439.40 534.04 L438.55 533.86 L437.71 533.65 L436.88 533.40 L436.06 533.13Z" fill="none" stroke="#262626" stroke-width="1.0" />
<path d="M437.46 527.40 L436.77 527.10 L436.09 526.78 L435.42 526.43 L434.76 526.05 L434.11 525.65 L433.48 525.22 L432.87 524.77 L432.26 524.28 L431.67 523.78 L431.10 523.25 L430.54 522.69 L430.00 522.11 L429.47 521.51 L428.96 520.88 L428.47 520.24 L427.99 519.56 L427.54 518.87 L427.09 518.16 L426.67 517.42 L426.27 516.66 L425.88 515.89 L425.52 515.09 L425.17 514.28 L424.84 513.44 L424.53 512.59 L424.25 511.72 L423.98 510.84 L423.73 509.94 L423.50 509.02 L423.30 508.09 L423.11 507.15 L422.95 506.19 L422.80 505.22 L422.68 504.24 L422.58 503.24 L422.50 502.24 L422.44 501.22 L422.40 500.20 L422.39 499.16 L422.39 498.12 L422.42 497.07 L422.46 496.02 L422.53 494.96 L422.62 493.89 L422.74 492.82 L422.87 491.75 L423.02 490.67 L423.20 489.59 L423.39 488.51 L423.61 487.43 L423.84 486.35 L424.10 485.27 L424.38 484.19 L424.68 483.11 L424.99 482.04 L425.33 480.97 L425.69 479.90 L426.06 478.84 L426.45 477.79 L426.87 476.74 L427.30 475.70 L427.75 474.67 L428.21 473.65 L428.70 472.63 L429.20 471.63 L429.72 470.64 L430.25 469.66 L430.80 468.69 L431.37 467.73 L431.95 466.79 L432.54 465.86 L433.15 464.95 L433.78 464.05 L434.41 463.17 L435.06 462.31 L435.73 461.46 L436.40 460.63 L437.09 459.82 L437.79 459.02 L438.50 458.25 L439.22 457.50 L439.95 456.77 L440.69 456.06 L441.43 455.37 L442.19 454.70 L442.96 454.06 L443.73 453.43 L444.50 452.83 L445.29 452.26 L446.08 451.71 L446.87 451.18 L447.67 450.68 L448.48 450.21 L449.28 449.76 L450.09 449.33 L450.91 448.93 L451.72 448.56 L452.54 448.22 L453.35 447.90 L454.17 447.61 L454.98 447.34 L455.80 447.11 L456.61 446.90 L457.42 446.72 L458.23 446.57 L459.04 446.44 L459.84 446.35 L460.64 446.28 L461.43 446.24 L462.22 446.23 L463.00 446.24 L463.77 446.29 L464.54 446.36 L465.30 446.46 L466.05 446.59 L466.80 446.75 L467.53 446.94 L468.26 447.15 L468.97 447.39 L469.68 447.66 L470.37 447.96 L471.05 448.28 L471.72 448.63 L472.38 449.01 L473.03 449.41 L473.66 449.84 L474.27 450.29 L474.88 450.78 L475.47 451.28 L476.04 451.81 L476.60 452.37 L477.14 452.95 L477.67 453.55 L478.18 454.18 L478.67 454.82 L479.15 455.50 L479.60 456.19 L480.05 456.90 L480.47 457.64 L480.87 458.40 L481.26 459.17 L481.62 459.97 L481.97 460.78 L482.30 461.62 L482.61 462.47 L482.89 463.34 L483.16 464.22 L483.41 465.12 L483.64 466.04 L483.84 466.97 L484.03 467.91 L484.19 468.87 L484.34 469.84 L484.46 470.82 L484.56 471.82 L484.64 472.82 L484.70 473.84 L484.74 474.86 L484.75 475.90 L484.75 476.94 L484.72 477.99 L484.68 479.04 L484.61 480.10 L484.52 481.17 L484.40 482.24 L484.27 483.31 L484.12 484.39 L483.94 485.47 L483.75 486.55 L483.53 487.63 L483.30 488.71 L483.04 489.79 L482.76 490.87 L482.46 491.95 L482.15 493.02 L481.81 494.09 L481.45 495.16 L481.08 496.22 L480.69 497.27 L480.27 498.32 L479.84 499.36 L479.39 500.39 L478.93 501.41 L478.44 502.43 L477.94 503.43 L477.42 504.42 L476.89 505.40 L476.34 506.37 L475.77 507.33 L475.19 508.27 L474.60 509.20 L473.99 510.11 L473.36 511.01 L472.73 511.89 L472.08 512.75 L471.41 513.60 L470.74 514.43 L470.05 515.24 L469.35 516.04 L468.64 516.81 L467.92 517.56 L467.19 518.29 L466.45 519.00 L465.71 519.69 L464.95 520.36 L464.18 521.00 L463.41 521.63 L462.64 522.23 L461.85 522.80 L461.06 523.35 L460.27 523.88 L459.47 524.38 L458.66 524.85 L457.86 525.30 L457.05 525.73 L456.23 526.13 L455.42 526.50 L454.60 526.84 L453.79 527.16 L452.97 527.45 L452.16 527.72 L451.34 527.95 L450.53 528.16 L449.72 528.34 L448.91 528.49 L448.10 528.62 L447.30 528.71 L446.50 528.78 L445.71 528.82 L444.92 528.83 L444.14 528.82 L443.37 528.77 L442.60 528.70 L441.84 528.60 L441.09 528.47 L440.34 528.31 L439.61 528.12 L438.88 527.91 L438.17 527.67Z" fill="none" stroke="#262626" stroke-width="1.0" />
<path d="M360.93 548.76 L359.27 548.53 L357.64 548.24 L356.03 547.89 L354.44 547.47 L352.88 546.99 L351.34 546.45 L349.82 545.85 L348.34 545.19 L346.88 544.47 L345.45 543.69 L344.05 542.85 L342.69 541.95 L341.35 541.00 L340.05 539.98 L338.78 538.91 L337.55 537.79 L336.35 536.61 L335.19 535.37 L334.07 534.08 L332.98 532.74 L331.93 531.35 L330.92 529.91 L329.96 528.42 L329.03 526.88 L328.14 525.29 L327.30 523.65 L326.50 521.97 L325.74 520.25 L325.03 518.48 L324.36 516.67 L323.73 514.82 L323.15 512.94 L322.62 511.01 L322.13 509.05 L321.68 507.05 L321.29 505.01 L320.94 502.95 L320.64 500.85 L320.38 498.73 L320.17 496.57 L320.01 494.39 L319.90 492.19 L319.83 489.96 L319.82 487.70 L319.85 485.43 L319.93 483.14 L320.05 480.83 L320.22 478.51 L320.45 476.17 L320.71 473.81 L321.03 471.45 L321.39 469.08 L321.80 466.70 L322.25 464.31 L322.76 461.92 L323.30 459.52 L323.90 457.12 L324.53 454.73 L325.21 452.33 L325.94 449.94 L326.71 447.56 L327.52 445.18 L328.38 442.81 L329.27 440.45 L330.21 438.10 L331.19 435.77 L332.21 433.45 L333.27 431.14 L334.36 428.86 L335.50 426.59 L336.67 424.35 L337.88 422.13 L339.12 419.93 L340.40 417.76 L341.71 415.61 L343.05 413.50 L344.43 411.41 L345.83 409.36 L347.27 407.34 L348.74 405.35 L350.23 403.40 L351.75 401.49 L353.30 399.61 L354.87 397.78 L356.46 395.98 L358.08 394.23 L359.72 392.52 L361.38 390.86 L363.05 389.24 L364.75 387.66 L366.46 386.14 L368.19 384.67 L369.94 383.24 L371.70 381.87 L373.46 380.54 L375.24 379.27 L377.04 378.06 L378.83 376.90 L380.64 375.79 L382.45 374.74 L384.27 373.75 L386.09 372.81 L387.91 371.93 L389.74 371.11 L391.56 370.35 L393.38 369.65 L395.20 369.01 L397.02 368.43 L398.83 367.92 L400.63 367.46 L402.43 367.06 L404.22 366.73 L405.99 366.46 L407.76 366.25 L409.51 366.11 L411.25 366.02 L412.98 366.00 L414.69 366.04 L416.38 366.15 L418.05 366.32 L419.71 366.55 L421.34 366.84 L422.95 367.19 L424.54 367.61 L426.10 368.09 L427.64 368.63 L429.16 369.23 L430.64 369.89 L432.10 370.61 L433.53 371.39 L434.93 372.23 L436.29 373.13 L437.63 374.08 L438.93 375.10 L440.20 376.17 L441.43 377.29" fill="none" stroke="#262626" stroke-width="1.0"/>
<path d="M999.22 873.30 L998.18 875.07 L997.12 876.84 L996.02 878.60 L994.90 880.35 L993.76 882.09 L992.58 883.83 L991.39 885.56 L990.16 887.27 L988.92 888.98 L987.64 890.68 L986.34 892.38 L985.02 894.06 L983.67 895.73 L982.29 897.40 L980.90 899.05 L979.47 900.70 L978.02 902.33 L976.55 903.96 L975.05 905.57 L973.53 907.18 L971.98 908.78 L970.41 910.36 L968.81 911.94 L967.20 913.50 L965.55 915.05 L963.89 916.60 L962.20 918.13 L960.48 919.65 L958.75 921.16 L956.99 922.66 L955.21 924.15 L953.40 925.62 L951.57 927.09 L949.72 928.54 L947.85 929.98 L945.95 931.41 L944.03 932.82 L942.09 934.23 L940.13 935.62 L938.15 937.00 L936.14 938.37 L934.12 939.72 L932.07 941.07 L930.00 942.40 L927.91 943.71 L925.80 945.02 L923.67 946.31 L921.52 947.59 L919.35 948.85 L917.15 950.10 L914.94 951.34 L912.71 952.56 L910.46 953.77 L908.19 954.97 L905.90 956.15 L903.59 957.32 L901.26 958.48 L898.91 959.62 L896.55 960.75 L894.16 961.86 L891.76 962.96 L889.34 964.04 L886.90 965.11 L884.45 966.16 L881.97 967.20 L879.48 968.23 L876.98 969.24 L874.45 970.24 L871.91 971.22 L869.35 972.18 L866.78 973.13 L864.19 974.07 L861.58 974.99 L858.96 975.89 L856.32 976.78 L853.67 977.66 L851.00 978.51 L848.32 979.36 L845.62 980.18 L842.91 980.99 L840.18 981.79 L837.44 982.57 L834.69 983.33 L831.92 984.08 L829.14 984.81 L826.34 985.53 L823.53 986.23 L820.71 986.91 L817.88 987.58 L815.03 988.23 L812.18 988.86 L809.31 989.48 L806.42 990.08 L803.53 990.67 L800.63 991.23 L797.71 991.79 L794.78 992.32 L791.85 992.84 L788.90 993.34 L785.94 993.83 L782.97 994.29 L779.99 994.75 L777.01 995.18 L774.01 995.60 L771.00 996.00 L767.99 996.38 L764.97 996.75 L761.94 997.10 L758.90 997.43 L755.85 997.75 L752.79 998.05 L749.73 998.33 L746.66 998.59 L743.58 998.84 L740.50 999.07 L737.41 999.29 L734.31 999.48 L731.21 999.66 L728.10 999.82 L724.99 999.97 L721.87 1000.09 L718.75 1000.20 L715.62 1000.30 L712.48 1000.37 L709.34 1000.43 L706.20 1000.47 L703.06 1000.49 L699.91 1000.50 L696.75 1000.49 L693.60 1000.46 L690.44 1000.41 L687.27 1000.35 L684.11 1000.27 L680.94 1000.17 L677.77 1000.06 L674.60 999.93 L671.43 999.78 L668.26 999.61 L665.08 999.43 L661.91 999.23 L658.73 999.01 L655.56 998.77 L652.38 998.52 L649.21 998.25 L646.03 997.97 L642.86 997.66 L639.68 997.34 L636.51 997.00 L633.34 996.65 L630.17 996.28 L627.00 995.89 L623.84 995.48 L620.67 995.06 L617.51 994.62 L614.35 994.16 L611.20 993.69 L608.05 993.20 L604.90 992.69 L601.76 992.17 L598.62 991.63 L595.48 991.07 L592.35 990.50 L589.22 989.91 L586.10 989.31 L582.99 988.68 L579.87 988.04 L576.77 987.39 L573.67 986.72 L570.58 986.03 L567.49 985.33 L564.41 984.61 L561.34 983.87 L558.27 983.12 L555.21 982.35 L552.16 981.56 L549.12 980.77 L546.09 979.95 L543.06 979.12 L540.04 978.27 L537.03 977.41 L534.03 976.53 L531.04 975.64 L528.06 974.73 L525.09 973.80 L522.12 972.86 L519.17 971.91 L516.23 970.94 L513.30 969.95 L510.38 968.95 L507.47 967.94 L504.57 966.91 L501.68 965.87 L498.81 964.81 L495.95 963.73 L493.10 962.65 L490.26 961.54 L487.43 960.43 L484.62 959.30 L481.82 958.15 L479.03 956.99 L476.26 955.82 L473.50 954.63 L470.75 953.43 L468.02 952.22 L465.30 950.99 L462.59 949.75 L459.91 948.49 L457.23 947.22 L454.57 945.94 L451.93 944.65 L449.30 943.34 L446.69 942.02 L444.09 940.69 L441.51 939.34 L438.94 937.98 L436.40 936.61 L433.86 935.23 L431.35 933.83 L428.85 932.42 L426.37 931.00 L423.91 929.57 L421.46 928.13 L419.03 926.67 L416.62 925.20 L414.23 923.72 L411.86 922.23 L409.50 920.73 L407.17 919.22 L404.85 917.69 L402.55 916.16 L400.27 914.61 L398.01 913.06 L395.77 911.49 L393.55 909.91 L391.35 908.32 L389.17 906.72 L387.01 905.12 L384.87 903.50 L382.75 901.87 L380.65 900.23 L378.58 898.58 L376.52 896.92 L374.49 895.26 L372.47 893.58 L370.48 891.90 L368.51 890.20 L366.56 888.50 L364.63 886.79 L362.73 885.07 L360.84 883.34 L358.98 881.60 L357.15 879.85 L355.33 878.10 L353.54 876.34 L351.77 874.57 L350.02 872.79 L348.30 871.01 L346.60 869.21 L344.92 867.41 L343.27 865.61 L341.64 863.79 L340.04 861.97 L338.46 860.15 L336.90 858.31 L335.37 856.47 L333.86 854.63 L332.37 852.77 L330.92 850.91 L329.48 849.05 L328.07 847.18 L326.69 845.30 L325.33 843.42 L323.99 841.53 L322.68 839.64 L321.40 837.74 L320.14 835.84 L318.90 833.94 L317.70 832.02 L316.51 830.11 L315.36 828.19 L314.23 826.26 L313.12 824.34 L312.04 822.40 L310.99 820.47 L309.96 818.53 L308.96 816.59 L307.99 814.64 L307.04 812.69 L306.12 810.74 L305.23 808.78 L304.36 806.83 L303.52 804.87 L302.70 802.90 L301.92 800.94" fill="none" stroke="#262626" stroke-width="1.0"/>
<path d="M1022.68 794.40 L1022.80 800.00 L1022.68 805.57 L1022.30 811.13 L1021.68 816.66 L1020.80 822.17 L1019.68 827.64 L1018.31 833.07 L1016.70 838.47 L1014.84 843.82 L1012.73 849.13 L1010.38 854.38 L1007.79 859.58 L1004.96 864.72 L1001.90 869.80 L998.59 874.81 L995.06 879.76 L991.29 884.63 L987.30 889.43 L983.08 894.15 L978.63 898.79 L973.97 903.35 L969.09 907.81 L964.00 912.19 L958.70 916.47 L953.20 920.65 L947.49 924.73 L941.58 928.71 L935.48 932.59 L929.19 936.36 L922.71 940.01 L916.06 943.55 L909.22 946.98 L902.21 950.29 L895.04 953.48 L887.71 956.55 L880.21 959.49 L872.57 962.31 L864.78 964.99 L856.84 967.55 L848.77 969.98 L840.58 972.27 L832.25 974.42 L823.81 976.44 L815.25 978.32 L806.59 980.06 L797.82 981.67 L788.96 983.12 L780.01 984.44 L770.97 985.61 L761.86 986.64 L752.68 987.52 L743.43 988.26 L734.12 988.85 L724.77 989.30 L715.36 989.60 L705.92 989.75 L696.45 989.75 L686.94 989.60 L677.42 989.31 L667.89 988.87 L658.35 988.29 L648.81 987.56 L639.28 986.68 L629.76 985.66 L620.25 984.49 L610.78 983.18 L601.34 981.73 L591.93 980.13 L582.58 978.40 L573.27 976.52 L564.02 974.51 L554.84 972.36 L545.73 970.07 L536.69 967.65 L527.74 965.10 L518.88 962.42 L510.11 959.61 L501.45 956.67 L492.89 953.61 L484.45 950.43 L476.13 947.12 L467.93 943.70 L459.86 940.16 L451.92 936.51 L444.13 932.75 L436.49 928.88 L428.99 924.90 L421.66 920.82 L414.49 916.64 L407.48 912.36 L400.64 907.99 L393.99 903.53 L387.51 898.98 L381.22 894.35 L375.12 889.63 L369.21 884.83 L363.50 879.96 L358.00 875.02 L352.70 870.01 L347.61 864.93 L342.73 859.79 L338.07 854.60 L333.62 849.35 L329.40 844.04 L325.41 838.69 L321.64 833.30 L318.11 827.87 L314.80 822.39 L311.74 816.89 L308.91 811.36 L306.32 805.80 L303.97 800.23 L301.86 794.63 L300.00 789.02 L298.39 783.40 L297.02 777.78 L295.90 772.15 L295.02 766.53 L294.40 760.91 L294.02 755.30 L293.90 749.70" fill="none" stroke="#262626" stroke-width="1.0"/>
<path d="M440.6 481.8L487.7 503.5" stroke="#3a3a3a" stroke-width="2.2" fill="none"/>
<path d="M428.7 475.3L434.1 477.9" stroke="#3a3a3a" stroke-width="2.2" fill="none"/>
<path d="M675.5 189L613.4 218M675.5 189L732.8 228.3M675.5 189L667.7 256.5M647.5 452.4L654.7 384M647.5 452.4L586.2 481.5M647.5 452.4L705.1 492.1M105 461.9L165.4 433.1M105 461.9L161.5 501.9M105 461.9L96.7 530M77 725.5L84.1 657.6M77 725.5L138.3 696M77 725.5L134.4 765.6M1208.1 842.1L1215.6 773.3M1208.1 842.1L1151.2 802M1208.1 842.1L1147.3 870.9M1235.6 578L1178.6 538.3M1235.6 578L1174.4 607.8M1235.6 578L1228.6 646.7M664.6 850L608 811.8M664.6 850L726.7 822M664.6 850L658.2 919.9M638.1 1115.5L645.1 1047.4M638.1 1115.5L580.2 1075.3M638.1 1115.5L699.3 1085.8" stroke="#2a2a2a" stroke-width="1.3" fill="none"/>
<text transform="matrix(0.9019,-0.4320,-0.1150,0.9934,389.00,316.00)" font-family="Liberation Mono" font-size="29" letter-spacing="2.1" fill="#3c3c3c" >92.7463 mm</text>
<text transform="matrix(0.8212,0.5707,-0.1150,0.9934,954.00,372.00)" font-family="Liberation Mono" font-size="29" letter-spacing="2.1" fill="#3c3c3c" >97.4332 mm</text>
<text transform="matrix(0.1150,-0.9934,0.9019,-0.4320,80.00,592.00)" font-family="Liberation Mono" font-size="29" letter-spacing="2.1" fill="#3c3c3c" >38.5217 mm</text>
</svg></div>
<div id="tl"><div class="mc" style="left:71px;top:3px;width:16px;height:16px"></div></div>
<div id="dlg"></div>
<div class="a" style="left:1270px;top:76px;width:787px;height:2px;background:#c9c9c9"></div>
<div class="mc" style="left:1282px;top:44px;width:18px;height:18px"></div>
<!-- tabs -->
<div class="a" style="left:1272px;top:81px;width:59px;height:52px;border:2px solid #c4c4c4;border-bottom:none;background:#f2f2f2"></div>
<div class="a" style="left:1330px;top:131px;width:727px;height:2px;background:#c4c4c4"></div>
<div class="a" style="left:1330px;top:133px;width:727px;height:2px;background:#dedede"></div>
<div class="a" style="left:1387px;top:82px;width:2px;height:46px;background:#c4c4c4"></div>
<div class="a" style="left:1445px;top:82px;width:2px;height:46px;background:#c4c4c4"></div>
<div class="a" style="left:1503px;top:82px;width:2px;height:46px;background:#c4c4c4"></div>
<svg class="a" style="left:1270px;top:78px;overflow:visible" width="240" height="60">
 <text x="16" y="40.5" font-family="Liberation Serif" font-style="italic" font-weight="bold" font-size="50" fill="#404040">α</text>
 <g transform="translate(74,16)">
  <path d="M0 24.5 C4 23.5 5.5 21 5.5 15.5 C5.5 8.5 8.5 4 12.5 0.3 L19.5 0.3 C23.5 4 26.5 8.5 26.5 15.5 C26.5 21 28 23.5 32 24.5 L32 29.8 L0 29.8 Z" fill="#3d8bc6"/>
  <path d="M1.8 25.6 C6 24.6 7.6 21.5 7.6 15.8 C7.6 9.6 10 5.5 13.3 2.4 L18.7 2.4 C22 5.5 24.4 9.6 24.4 15.8 C24.4 21.5 26 24.6 30.2 25.6 L30.2 29.8 L1.8 29.8 Z" fill="#8dd0fa"/>
  <path d="M0 28.5 C5 27.5 8.6 26 8.6 16.5 C8.6 11 11 6.2 14.5 6.2 L17.5 6.2 C21 6.2 23.4 11 23.4 16.5 C23.4 26 27 27.5 32 28.5 L32 30 L0 30 Z" fill="#bdbdbd" stroke="#555" stroke-width="0.5"/>
  <rect x="0" y="27.8" width="32" height="2.2" fill="#bdbdbd"/>
 </g>
 <g transform="translate(133,15)" fill="none" stroke="#3c3c3c" stroke-width="2.1">
  <rect x="1.1" y="1.2" width="9.2" height="9.4"/>
  <path d="M5.6 10.6 V29.7"/>
  <path d="M13.5 1.2 V17.9"/>
  <rect x="9.5" y="17.9" width="8.7" height="9"/>
  <path d="M13.5 26.9 V30"/>
  <path d="M21.6 0.6 V3.8"/>
  <rect x="17.6" y="3.8" width="9" height="9"/>
  <path d="M21.6 12.8 V29.7"/>
 </g>
 <circle cx="206" cy="29.9" r="14.2" fill="#00cdff"/>
 <circle cx="205.6" cy="21.6" r="2.2" fill="#fff"/>
 <path d="M202 25.9 H207.9 V36.9 L209.3 38.8 H202 L203.8 36.9 V27.4 Z" fill="#fff"/>
</svg>
<div class="tri-r" style="left:1290px;top:156px"></div>
<div class="sep" style="top:206px"></div>
<div class="inp" style="top:220px"><div style="position:absolute;left:4px;top:10px;width:140px;height:26px;background:#b2d6fc"></div><div class="spin"><i></i></div></div>
<div class="inp" style="top:280px"></div>
<div class="inp" style="top:400px"><div class="spin"><i></i></div></div>
<div class="inp" style="top:460px"></div>
<div class="a" style="left:1290px;top:600px;width:0;height:0;border-left:9px solid transparent;border-right:9px solid transparent;border-top:12px solid #303030"></div>
<div class="a" style="left:1323px;top:592px;width:26px;height:26px;border:2px solid #333;border-radius:5px;background:linear-gradient(#a9a9a9,#dedede)"></div>
<svg class="a" style="left:1323px;top:592px" width="26" height="26"><path d="M4.3 15.9 L9.7 20.5 L20.9 4.8" fill="none" stroke="#000" stroke-width="2.6"/></svg>
<div class="inp" style="top:640px"><div class="spin"><i></i></div></div>
<div class="sep" style="top:706px"></div>
<div class="inp" style="top:720px"><div class="spin"><i></i></div></div>
<div class="inp" style="top:780px"><div class="spin"><i></i></div></div>
<div class="tri-r" style="left:1290px;top:916px"></div>
<div class="sep" style="top:966px"></div>
<div class="a" style="left:1270px;top:1038px;width:787px;height:2px;background:#c9c9c9"></div>
<div class="btn" style="left:1758px"></div>
<div class="btn" style="left:1914px"></div>

<div class="lbl" id="L_title" style="left:1319.90px;top:41.39px;font-size:22px;color:#5a5a5a;letter-spacing:-0.467px">BEVEL GEAR MAKER (BASIC) V3.3.3</div>
<div class="lbl bold" id="L_File" style="left:1319.75px;top:155.59px;font-size:22px;color:#333;letter-spacing:0.667px">File</div>
<div class="lbl" id="L_Module" style="left:1296.70px;top:235.19px;font-size:22px;color:#333;letter-spacing:1.080px">Module</div>
<div class="lbl" id="L_Pressure" style="left:1294.00px;top:295.39px;font-size:22px;color:#333;letter-spacing:0.708px">Pressure angle</div>
<div class="lbl" id="L_dms20" style="left:1547.20px;top:350.39px;font-size:22px;color:#333;letter-spacing:1.320px">20° 0' 0.0"</div>
<div class="lbl" id="L_Clearance" style="left:1294.90px;top:415.39px;font-size:22px;color:#333;letter-spacing:0.840px">Clearance factor</div>
<div class="lbl" id="L_Shaft" style="left:1294.90px;top:475.39px;font-size:22px;color:#333;letter-spacing:0.840px">Shaft angle</div>
<div class="lbl" id="L_dms80" style="left:1547.20px;top:530.39px;font-size:22px;color:#333;letter-spacing:1.320px">80° 0' 0.0"</div>
<div class="lbl bold" id="L_Use" style="left:1361.90px;top:595.79px;font-size:22px;color:#333;letter-spacing:0.860px">Use custom face width</div>
<div class="lbl" id="L_Face" style="left:1294.90px;top:655.39px;font-size:22px;color:#333;letter-spacing:0.911px">Face width</div>
<div class="lbl" id="L_Pinion" style="left:1294.90px;top:735.39px;font-size:22px;color:#333;letter-spacing:1.122px">Pinion teeth number</div>
<div class="lbl" id="L_Wheel" style="left:1295.80px;top:795.39px;font-size:22px;color:#333;letter-spacing:0.988px">Wheel teeth number</div>
<div class="lbl" id="L_Ratio" style="left:1294.90px;top:854.39px;font-size:22px;color:#333;letter-spacing:0.850px">Ratio</div>
<div class="lbl" id="L_ratio" style="left:1547.20px;top:850.39px;font-size:22px;color:#333;letter-spacing:1.222px">−0.3333:1 (−3.0000)</div>
<div class="lbl bold" id="L_Dim" style="left:1319.40px;top:915.39px;font-size:22px;color:#333;letter-spacing:0.933px">Dimensions</div>
<div class="lbl" id="L_Est" style="left:1295.40px;top:995.39px;font-size:22px;color:#333;letter-spacing:1.029px">Estimated time:</div>
<div class="lbl" id="L_sec" style="left:1549.00px;top:991.39px;font-size:22px;color:#333;letter-spacing:1.286px">&lt; 5 sec.</div>
<div class="lbl" id="L_v3" style="left:1545.50px;top:235.19px;font-size:22px;color:#222;letter-spacing:1.778px">3.00000 mm</div>
<div class="lbl" id="L_v20" style="left:1545.50px;top:294.89px;font-size:22px;color:#333;letter-spacing:1.850px">20.00000°</div>
<div class="lbl" id="L_v025" style="left:1545.50px;top:414.89px;font-size:22px;color:#333;letter-spacing:1.833px">0.25000</div>
<div class="lbl" id="L_v80" style="left:1545.50px;top:474.89px;font-size:22px;color:#333;letter-spacing:1.850px">80.00000°</div>
<div class="lbl" id="L_v12" style="left:1546.10px;top:654.89px;font-size:22px;color:#333;letter-spacing:1.760px">12.00000 mm</div>
<div class="lbl" id="L_v10" style="left:1546.10px;top:734.89px;font-size:22px;color:#333;letter-spacing:1.800px">10</div>
<div class="lbl" id="L_v30" style="left:1545.50px;top:794.89px;font-size:22px;color:#333;letter-spacing:3.200px">30</div>
<div class="lbl" id="L_OK" style="left:1799.00px;top:1063.70px;font-size:24px;color:#555;letter-spacing:3.000px">OK</div>
<div class="lbl" id="L_Cancel" style="left:1935.00px;top:1063.70px;font-size:24px;color:#555;letter-spacing:0.800px">Cancel</div>

</body></html>
